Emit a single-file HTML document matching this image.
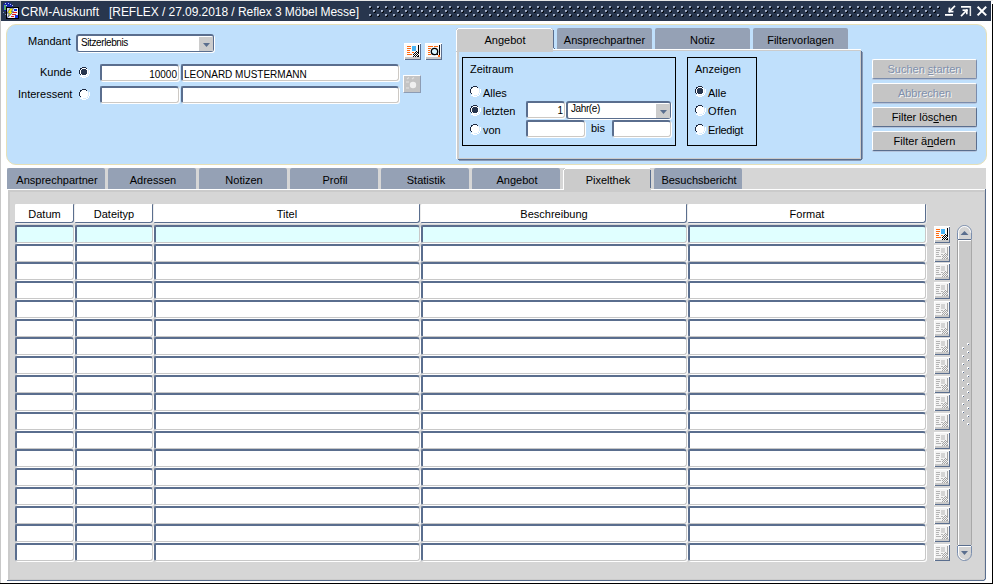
<!DOCTYPE html><html><head><meta charset="utf-8"><style>
*{margin:0;padding:0;box-sizing:border-box}
html,body{width:993px;height:584px;overflow:hidden;background:#fff;font-family:"Liberation Sans",sans-serif;position:relative}
div{position:absolute}
.t{white-space:pre}
u{text-decoration:underline;text-underline-offset:1px}
</style></head><body>
<div style="left:0px;top:0px;width:993px;height:584px;background:#fff;"></div>
<div style="left:0px;top:0px;width:1px;height:584px;background:#c8c8c8;"></div>
<div style="left:0px;top:0px;width:993px;height:1px;background:#e8e8e8;"></div>
<div style="left:992px;top:4px;width:1px;height:580px;background:#000;"></div>
<div style="left:0px;top:583px;width:993px;height:1px;background:#000;"></div>
<div style="left:1px;top:1px;width:990px;height:20px;background:#28364e;"></div>
<div class="t" style="left:21px;top:6.10px;font-size:12px;line-height:12px;color:#fff;">CRM-Auskunft</div>
<div class="t" style="left:109px;top:6.10px;font-size:12px;line-height:12px;color:#fff;letter-spacing:-0.05px">[REFLEX / 27.09.2018 / Reflex 3 Möbel Messe]</div>
<svg style="position:absolute;left:366px;top:4px" width="580" height="14" shape-rendering="crispEdges"><rect x="3" y="2" width="2" height="1" fill="#a8b4cc"/><rect x="3" y="3" width="1" height="1" fill="#a8b4cc"/><rect x="4" y="3" width="1" height="1" fill="#8090a8"/><rect x="5" y="3" width="1" height="1" fill="#000"/><rect x="4" y="4" width="1" height="1" fill="#000"/><rect x="5" y="4" width="1" height="1" fill="#101828"/><rect x="3" y="10" width="2" height="1" fill="#a8b4cc"/><rect x="3" y="11" width="1" height="1" fill="#a8b4cc"/><rect x="4" y="11" width="1" height="1" fill="#8090a8"/><rect x="5" y="11" width="1" height="1" fill="#000"/><rect x="4" y="12" width="1" height="1" fill="#000"/><rect x="5" y="12" width="1" height="1" fill="#101828"/><rect x="7" y="6" width="2" height="1" fill="#a8b4cc"/><rect x="7" y="7" width="1" height="1" fill="#a8b4cc"/><rect x="8" y="7" width="1" height="1" fill="#8090a8"/><rect x="9" y="7" width="1" height="1" fill="#000"/><rect x="8" y="8" width="1" height="1" fill="#000"/><rect x="9" y="8" width="1" height="1" fill="#101828"/><rect x="11" y="2" width="2" height="1" fill="#a8b4cc"/><rect x="11" y="3" width="1" height="1" fill="#a8b4cc"/><rect x="12" y="3" width="1" height="1" fill="#8090a8"/><rect x="13" y="3" width="1" height="1" fill="#000"/><rect x="12" y="4" width="1" height="1" fill="#000"/><rect x="13" y="4" width="1" height="1" fill="#101828"/><rect x="11" y="10" width="2" height="1" fill="#a8b4cc"/><rect x="11" y="11" width="1" height="1" fill="#a8b4cc"/><rect x="12" y="11" width="1" height="1" fill="#8090a8"/><rect x="13" y="11" width="1" height="1" fill="#000"/><rect x="12" y="12" width="1" height="1" fill="#000"/><rect x="13" y="12" width="1" height="1" fill="#101828"/><rect x="15" y="6" width="2" height="1" fill="#a8b4cc"/><rect x="15" y="7" width="1" height="1" fill="#a8b4cc"/><rect x="16" y="7" width="1" height="1" fill="#8090a8"/><rect x="17" y="7" width="1" height="1" fill="#000"/><rect x="16" y="8" width="1" height="1" fill="#000"/><rect x="17" y="8" width="1" height="1" fill="#101828"/><rect x="19" y="2" width="2" height="1" fill="#a8b4cc"/><rect x="19" y="3" width="1" height="1" fill="#a8b4cc"/><rect x="20" y="3" width="1" height="1" fill="#8090a8"/><rect x="21" y="3" width="1" height="1" fill="#000"/><rect x="20" y="4" width="1" height="1" fill="#000"/><rect x="21" y="4" width="1" height="1" fill="#101828"/><rect x="19" y="10" width="2" height="1" fill="#a8b4cc"/><rect x="19" y="11" width="1" height="1" fill="#a8b4cc"/><rect x="20" y="11" width="1" height="1" fill="#8090a8"/><rect x="21" y="11" width="1" height="1" fill="#000"/><rect x="20" y="12" width="1" height="1" fill="#000"/><rect x="21" y="12" width="1" height="1" fill="#101828"/><rect x="23" y="6" width="2" height="1" fill="#a8b4cc"/><rect x="23" y="7" width="1" height="1" fill="#a8b4cc"/><rect x="24" y="7" width="1" height="1" fill="#8090a8"/><rect x="25" y="7" width="1" height="1" fill="#000"/><rect x="24" y="8" width="1" height="1" fill="#000"/><rect x="25" y="8" width="1" height="1" fill="#101828"/><rect x="27" y="2" width="2" height="1" fill="#a8b4cc"/><rect x="27" y="3" width="1" height="1" fill="#a8b4cc"/><rect x="28" y="3" width="1" height="1" fill="#8090a8"/><rect x="29" y="3" width="1" height="1" fill="#000"/><rect x="28" y="4" width="1" height="1" fill="#000"/><rect x="29" y="4" width="1" height="1" fill="#101828"/><rect x="27" y="10" width="2" height="1" fill="#a8b4cc"/><rect x="27" y="11" width="1" height="1" fill="#a8b4cc"/><rect x="28" y="11" width="1" height="1" fill="#8090a8"/><rect x="29" y="11" width="1" height="1" fill="#000"/><rect x="28" y="12" width="1" height="1" fill="#000"/><rect x="29" y="12" width="1" height="1" fill="#101828"/><rect x="31" y="6" width="2" height="1" fill="#a8b4cc"/><rect x="31" y="7" width="1" height="1" fill="#a8b4cc"/><rect x="32" y="7" width="1" height="1" fill="#8090a8"/><rect x="33" y="7" width="1" height="1" fill="#000"/><rect x="32" y="8" width="1" height="1" fill="#000"/><rect x="33" y="8" width="1" height="1" fill="#101828"/><rect x="35" y="2" width="2" height="1" fill="#a8b4cc"/><rect x="35" y="3" width="1" height="1" fill="#a8b4cc"/><rect x="36" y="3" width="1" height="1" fill="#8090a8"/><rect x="37" y="3" width="1" height="1" fill="#000"/><rect x="36" y="4" width="1" height="1" fill="#000"/><rect x="37" y="4" width="1" height="1" fill="#101828"/><rect x="35" y="10" width="2" height="1" fill="#a8b4cc"/><rect x="35" y="11" width="1" height="1" fill="#a8b4cc"/><rect x="36" y="11" width="1" height="1" fill="#8090a8"/><rect x="37" y="11" width="1" height="1" fill="#000"/><rect x="36" y="12" width="1" height="1" fill="#000"/><rect x="37" y="12" width="1" height="1" fill="#101828"/><rect x="39" y="6" width="2" height="1" fill="#a8b4cc"/><rect x="39" y="7" width="1" height="1" fill="#a8b4cc"/><rect x="40" y="7" width="1" height="1" fill="#8090a8"/><rect x="41" y="7" width="1" height="1" fill="#000"/><rect x="40" y="8" width="1" height="1" fill="#000"/><rect x="41" y="8" width="1" height="1" fill="#101828"/><rect x="43" y="2" width="2" height="1" fill="#a8b4cc"/><rect x="43" y="3" width="1" height="1" fill="#a8b4cc"/><rect x="44" y="3" width="1" height="1" fill="#8090a8"/><rect x="45" y="3" width="1" height="1" fill="#000"/><rect x="44" y="4" width="1" height="1" fill="#000"/><rect x="45" y="4" width="1" height="1" fill="#101828"/><rect x="43" y="10" width="2" height="1" fill="#a8b4cc"/><rect x="43" y="11" width="1" height="1" fill="#a8b4cc"/><rect x="44" y="11" width="1" height="1" fill="#8090a8"/><rect x="45" y="11" width="1" height="1" fill="#000"/><rect x="44" y="12" width="1" height="1" fill="#000"/><rect x="45" y="12" width="1" height="1" fill="#101828"/><rect x="47" y="6" width="2" height="1" fill="#a8b4cc"/><rect x="47" y="7" width="1" height="1" fill="#a8b4cc"/><rect x="48" y="7" width="1" height="1" fill="#8090a8"/><rect x="49" y="7" width="1" height="1" fill="#000"/><rect x="48" y="8" width="1" height="1" fill="#000"/><rect x="49" y="8" width="1" height="1" fill="#101828"/><rect x="51" y="2" width="2" height="1" fill="#a8b4cc"/><rect x="51" y="3" width="1" height="1" fill="#a8b4cc"/><rect x="52" y="3" width="1" height="1" fill="#8090a8"/><rect x="53" y="3" width="1" height="1" fill="#000"/><rect x="52" y="4" width="1" height="1" fill="#000"/><rect x="53" y="4" width="1" height="1" fill="#101828"/><rect x="51" y="10" width="2" height="1" fill="#a8b4cc"/><rect x="51" y="11" width="1" height="1" fill="#a8b4cc"/><rect x="52" y="11" width="1" height="1" fill="#8090a8"/><rect x="53" y="11" width="1" height="1" fill="#000"/><rect x="52" y="12" width="1" height="1" fill="#000"/><rect x="53" y="12" width="1" height="1" fill="#101828"/><rect x="55" y="6" width="2" height="1" fill="#a8b4cc"/><rect x="55" y="7" width="1" height="1" fill="#a8b4cc"/><rect x="56" y="7" width="1" height="1" fill="#8090a8"/><rect x="57" y="7" width="1" height="1" fill="#000"/><rect x="56" y="8" width="1" height="1" fill="#000"/><rect x="57" y="8" width="1" height="1" fill="#101828"/><rect x="59" y="2" width="2" height="1" fill="#a8b4cc"/><rect x="59" y="3" width="1" height="1" fill="#a8b4cc"/><rect x="60" y="3" width="1" height="1" fill="#8090a8"/><rect x="61" y="3" width="1" height="1" fill="#000"/><rect x="60" y="4" width="1" height="1" fill="#000"/><rect x="61" y="4" width="1" height="1" fill="#101828"/><rect x="59" y="10" width="2" height="1" fill="#a8b4cc"/><rect x="59" y="11" width="1" height="1" fill="#a8b4cc"/><rect x="60" y="11" width="1" height="1" fill="#8090a8"/><rect x="61" y="11" width="1" height="1" fill="#000"/><rect x="60" y="12" width="1" height="1" fill="#000"/><rect x="61" y="12" width="1" height="1" fill="#101828"/><rect x="63" y="6" width="2" height="1" fill="#a8b4cc"/><rect x="63" y="7" width="1" height="1" fill="#a8b4cc"/><rect x="64" y="7" width="1" height="1" fill="#8090a8"/><rect x="65" y="7" width="1" height="1" fill="#000"/><rect x="64" y="8" width="1" height="1" fill="#000"/><rect x="65" y="8" width="1" height="1" fill="#101828"/><rect x="67" y="2" width="2" height="1" fill="#a8b4cc"/><rect x="67" y="3" width="1" height="1" fill="#a8b4cc"/><rect x="68" y="3" width="1" height="1" fill="#8090a8"/><rect x="69" y="3" width="1" height="1" fill="#000"/><rect x="68" y="4" width="1" height="1" fill="#000"/><rect x="69" y="4" width="1" height="1" fill="#101828"/><rect x="67" y="10" width="2" height="1" fill="#a8b4cc"/><rect x="67" y="11" width="1" height="1" fill="#a8b4cc"/><rect x="68" y="11" width="1" height="1" fill="#8090a8"/><rect x="69" y="11" width="1" height="1" fill="#000"/><rect x="68" y="12" width="1" height="1" fill="#000"/><rect x="69" y="12" width="1" height="1" fill="#101828"/><rect x="71" y="6" width="2" height="1" fill="#a8b4cc"/><rect x="71" y="7" width="1" height="1" fill="#a8b4cc"/><rect x="72" y="7" width="1" height="1" fill="#8090a8"/><rect x="73" y="7" width="1" height="1" fill="#000"/><rect x="72" y="8" width="1" height="1" fill="#000"/><rect x="73" y="8" width="1" height="1" fill="#101828"/><rect x="75" y="2" width="2" height="1" fill="#a8b4cc"/><rect x="75" y="3" width="1" height="1" fill="#a8b4cc"/><rect x="76" y="3" width="1" height="1" fill="#8090a8"/><rect x="77" y="3" width="1" height="1" fill="#000"/><rect x="76" y="4" width="1" height="1" fill="#000"/><rect x="77" y="4" width="1" height="1" fill="#101828"/><rect x="75" y="10" width="2" height="1" fill="#a8b4cc"/><rect x="75" y="11" width="1" height="1" fill="#a8b4cc"/><rect x="76" y="11" width="1" height="1" fill="#8090a8"/><rect x="77" y="11" width="1" height="1" fill="#000"/><rect x="76" y="12" width="1" height="1" fill="#000"/><rect x="77" y="12" width="1" height="1" fill="#101828"/><rect x="79" y="6" width="2" height="1" fill="#a8b4cc"/><rect x="79" y="7" width="1" height="1" fill="#a8b4cc"/><rect x="80" y="7" width="1" height="1" fill="#8090a8"/><rect x="81" y="7" width="1" height="1" fill="#000"/><rect x="80" y="8" width="1" height="1" fill="#000"/><rect x="81" y="8" width="1" height="1" fill="#101828"/><rect x="83" y="2" width="2" height="1" fill="#a8b4cc"/><rect x="83" y="3" width="1" height="1" fill="#a8b4cc"/><rect x="84" y="3" width="1" height="1" fill="#8090a8"/><rect x="85" y="3" width="1" height="1" fill="#000"/><rect x="84" y="4" width="1" height="1" fill="#000"/><rect x="85" y="4" width="1" height="1" fill="#101828"/><rect x="83" y="10" width="2" height="1" fill="#a8b4cc"/><rect x="83" y="11" width="1" height="1" fill="#a8b4cc"/><rect x="84" y="11" width="1" height="1" fill="#8090a8"/><rect x="85" y="11" width="1" height="1" fill="#000"/><rect x="84" y="12" width="1" height="1" fill="#000"/><rect x="85" y="12" width="1" height="1" fill="#101828"/><rect x="87" y="6" width="2" height="1" fill="#a8b4cc"/><rect x="87" y="7" width="1" height="1" fill="#a8b4cc"/><rect x="88" y="7" width="1" height="1" fill="#8090a8"/><rect x="89" y="7" width="1" height="1" fill="#000"/><rect x="88" y="8" width="1" height="1" fill="#000"/><rect x="89" y="8" width="1" height="1" fill="#101828"/><rect x="91" y="2" width="2" height="1" fill="#a8b4cc"/><rect x="91" y="3" width="1" height="1" fill="#a8b4cc"/><rect x="92" y="3" width="1" height="1" fill="#8090a8"/><rect x="93" y="3" width="1" height="1" fill="#000"/><rect x="92" y="4" width="1" height="1" fill="#000"/><rect x="93" y="4" width="1" height="1" fill="#101828"/><rect x="91" y="10" width="2" height="1" fill="#a8b4cc"/><rect x="91" y="11" width="1" height="1" fill="#a8b4cc"/><rect x="92" y="11" width="1" height="1" fill="#8090a8"/><rect x="93" y="11" width="1" height="1" fill="#000"/><rect x="92" y="12" width="1" height="1" fill="#000"/><rect x="93" y="12" width="1" height="1" fill="#101828"/><rect x="95" y="6" width="2" height="1" fill="#a8b4cc"/><rect x="95" y="7" width="1" height="1" fill="#a8b4cc"/><rect x="96" y="7" width="1" height="1" fill="#8090a8"/><rect x="97" y="7" width="1" height="1" fill="#000"/><rect x="96" y="8" width="1" height="1" fill="#000"/><rect x="97" y="8" width="1" height="1" fill="#101828"/><rect x="99" y="2" width="2" height="1" fill="#a8b4cc"/><rect x="99" y="3" width="1" height="1" fill="#a8b4cc"/><rect x="100" y="3" width="1" height="1" fill="#8090a8"/><rect x="101" y="3" width="1" height="1" fill="#000"/><rect x="100" y="4" width="1" height="1" fill="#000"/><rect x="101" y="4" width="1" height="1" fill="#101828"/><rect x="99" y="10" width="2" height="1" fill="#a8b4cc"/><rect x="99" y="11" width="1" height="1" fill="#a8b4cc"/><rect x="100" y="11" width="1" height="1" fill="#8090a8"/><rect x="101" y="11" width="1" height="1" fill="#000"/><rect x="100" y="12" width="1" height="1" fill="#000"/><rect x="101" y="12" width="1" height="1" fill="#101828"/><rect x="103" y="6" width="2" height="1" fill="#a8b4cc"/><rect x="103" y="7" width="1" height="1" fill="#a8b4cc"/><rect x="104" y="7" width="1" height="1" fill="#8090a8"/><rect x="105" y="7" width="1" height="1" fill="#000"/><rect x="104" y="8" width="1" height="1" fill="#000"/><rect x="105" y="8" width="1" height="1" fill="#101828"/><rect x="107" y="2" width="2" height="1" fill="#a8b4cc"/><rect x="107" y="3" width="1" height="1" fill="#a8b4cc"/><rect x="108" y="3" width="1" height="1" fill="#8090a8"/><rect x="109" y="3" width="1" height="1" fill="#000"/><rect x="108" y="4" width="1" height="1" fill="#000"/><rect x="109" y="4" width="1" height="1" fill="#101828"/><rect x="107" y="10" width="2" height="1" fill="#a8b4cc"/><rect x="107" y="11" width="1" height="1" fill="#a8b4cc"/><rect x="108" y="11" width="1" height="1" fill="#8090a8"/><rect x="109" y="11" width="1" height="1" fill="#000"/><rect x="108" y="12" width="1" height="1" fill="#000"/><rect x="109" y="12" width="1" height="1" fill="#101828"/><rect x="111" y="6" width="2" height="1" fill="#a8b4cc"/><rect x="111" y="7" width="1" height="1" fill="#a8b4cc"/><rect x="112" y="7" width="1" height="1" fill="#8090a8"/><rect x="113" y="7" width="1" height="1" fill="#000"/><rect x="112" y="8" width="1" height="1" fill="#000"/><rect x="113" y="8" width="1" height="1" fill="#101828"/><rect x="115" y="2" width="2" height="1" fill="#a8b4cc"/><rect x="115" y="3" width="1" height="1" fill="#a8b4cc"/><rect x="116" y="3" width="1" height="1" fill="#8090a8"/><rect x="117" y="3" width="1" height="1" fill="#000"/><rect x="116" y="4" width="1" height="1" fill="#000"/><rect x="117" y="4" width="1" height="1" fill="#101828"/><rect x="115" y="10" width="2" height="1" fill="#a8b4cc"/><rect x="115" y="11" width="1" height="1" fill="#a8b4cc"/><rect x="116" y="11" width="1" height="1" fill="#8090a8"/><rect x="117" y="11" width="1" height="1" fill="#000"/><rect x="116" y="12" width="1" height="1" fill="#000"/><rect x="117" y="12" width="1" height="1" fill="#101828"/><rect x="119" y="6" width="2" height="1" fill="#a8b4cc"/><rect x="119" y="7" width="1" height="1" fill="#a8b4cc"/><rect x="120" y="7" width="1" height="1" fill="#8090a8"/><rect x="121" y="7" width="1" height="1" fill="#000"/><rect x="120" y="8" width="1" height="1" fill="#000"/><rect x="121" y="8" width="1" height="1" fill="#101828"/><rect x="123" y="2" width="2" height="1" fill="#a8b4cc"/><rect x="123" y="3" width="1" height="1" fill="#a8b4cc"/><rect x="124" y="3" width="1" height="1" fill="#8090a8"/><rect x="125" y="3" width="1" height="1" fill="#000"/><rect x="124" y="4" width="1" height="1" fill="#000"/><rect x="125" y="4" width="1" height="1" fill="#101828"/><rect x="123" y="10" width="2" height="1" fill="#a8b4cc"/><rect x="123" y="11" width="1" height="1" fill="#a8b4cc"/><rect x="124" y="11" width="1" height="1" fill="#8090a8"/><rect x="125" y="11" width="1" height="1" fill="#000"/><rect x="124" y="12" width="1" height="1" fill="#000"/><rect x="125" y="12" width="1" height="1" fill="#101828"/><rect x="127" y="6" width="2" height="1" fill="#a8b4cc"/><rect x="127" y="7" width="1" height="1" fill="#a8b4cc"/><rect x="128" y="7" width="1" height="1" fill="#8090a8"/><rect x="129" y="7" width="1" height="1" fill="#000"/><rect x="128" y="8" width="1" height="1" fill="#000"/><rect x="129" y="8" width="1" height="1" fill="#101828"/><rect x="131" y="2" width="2" height="1" fill="#a8b4cc"/><rect x="131" y="3" width="1" height="1" fill="#a8b4cc"/><rect x="132" y="3" width="1" height="1" fill="#8090a8"/><rect x="133" y="3" width="1" height="1" fill="#000"/><rect x="132" y="4" width="1" height="1" fill="#000"/><rect x="133" y="4" width="1" height="1" fill="#101828"/><rect x="131" y="10" width="2" height="1" fill="#a8b4cc"/><rect x="131" y="11" width="1" height="1" fill="#a8b4cc"/><rect x="132" y="11" width="1" height="1" fill="#8090a8"/><rect x="133" y="11" width="1" height="1" fill="#000"/><rect x="132" y="12" width="1" height="1" fill="#000"/><rect x="133" y="12" width="1" height="1" fill="#101828"/><rect x="135" y="6" width="2" height="1" fill="#a8b4cc"/><rect x="135" y="7" width="1" height="1" fill="#a8b4cc"/><rect x="136" y="7" width="1" height="1" fill="#8090a8"/><rect x="137" y="7" width="1" height="1" fill="#000"/><rect x="136" y="8" width="1" height="1" fill="#000"/><rect x="137" y="8" width="1" height="1" fill="#101828"/><rect x="139" y="2" width="2" height="1" fill="#a8b4cc"/><rect x="139" y="3" width="1" height="1" fill="#a8b4cc"/><rect x="140" y="3" width="1" height="1" fill="#8090a8"/><rect x="141" y="3" width="1" height="1" fill="#000"/><rect x="140" y="4" width="1" height="1" fill="#000"/><rect x="141" y="4" width="1" height="1" fill="#101828"/><rect x="139" y="10" width="2" height="1" fill="#a8b4cc"/><rect x="139" y="11" width="1" height="1" fill="#a8b4cc"/><rect x="140" y="11" width="1" height="1" fill="#8090a8"/><rect x="141" y="11" width="1" height="1" fill="#000"/><rect x="140" y="12" width="1" height="1" fill="#000"/><rect x="141" y="12" width="1" height="1" fill="#101828"/><rect x="143" y="6" width="2" height="1" fill="#a8b4cc"/><rect x="143" y="7" width="1" height="1" fill="#a8b4cc"/><rect x="144" y="7" width="1" height="1" fill="#8090a8"/><rect x="145" y="7" width="1" height="1" fill="#000"/><rect x="144" y="8" width="1" height="1" fill="#000"/><rect x="145" y="8" width="1" height="1" fill="#101828"/><rect x="147" y="2" width="2" height="1" fill="#a8b4cc"/><rect x="147" y="3" width="1" height="1" fill="#a8b4cc"/><rect x="148" y="3" width="1" height="1" fill="#8090a8"/><rect x="149" y="3" width="1" height="1" fill="#000"/><rect x="148" y="4" width="1" height="1" fill="#000"/><rect x="149" y="4" width="1" height="1" fill="#101828"/><rect x="147" y="10" width="2" height="1" fill="#a8b4cc"/><rect x="147" y="11" width="1" height="1" fill="#a8b4cc"/><rect x="148" y="11" width="1" height="1" fill="#8090a8"/><rect x="149" y="11" width="1" height="1" fill="#000"/><rect x="148" y="12" width="1" height="1" fill="#000"/><rect x="149" y="12" width="1" height="1" fill="#101828"/><rect x="151" y="6" width="2" height="1" fill="#a8b4cc"/><rect x="151" y="7" width="1" height="1" fill="#a8b4cc"/><rect x="152" y="7" width="1" height="1" fill="#8090a8"/><rect x="153" y="7" width="1" height="1" fill="#000"/><rect x="152" y="8" width="1" height="1" fill="#000"/><rect x="153" y="8" width="1" height="1" fill="#101828"/><rect x="155" y="2" width="2" height="1" fill="#a8b4cc"/><rect x="155" y="3" width="1" height="1" fill="#a8b4cc"/><rect x="156" y="3" width="1" height="1" fill="#8090a8"/><rect x="157" y="3" width="1" height="1" fill="#000"/><rect x="156" y="4" width="1" height="1" fill="#000"/><rect x="157" y="4" width="1" height="1" fill="#101828"/><rect x="155" y="10" width="2" height="1" fill="#a8b4cc"/><rect x="155" y="11" width="1" height="1" fill="#a8b4cc"/><rect x="156" y="11" width="1" height="1" fill="#8090a8"/><rect x="157" y="11" width="1" height="1" fill="#000"/><rect x="156" y="12" width="1" height="1" fill="#000"/><rect x="157" y="12" width="1" height="1" fill="#101828"/><rect x="159" y="6" width="2" height="1" fill="#a8b4cc"/><rect x="159" y="7" width="1" height="1" fill="#a8b4cc"/><rect x="160" y="7" width="1" height="1" fill="#8090a8"/><rect x="161" y="7" width="1" height="1" fill="#000"/><rect x="160" y="8" width="1" height="1" fill="#000"/><rect x="161" y="8" width="1" height="1" fill="#101828"/><rect x="163" y="2" width="2" height="1" fill="#a8b4cc"/><rect x="163" y="3" width="1" height="1" fill="#a8b4cc"/><rect x="164" y="3" width="1" height="1" fill="#8090a8"/><rect x="165" y="3" width="1" height="1" fill="#000"/><rect x="164" y="4" width="1" height="1" fill="#000"/><rect x="165" y="4" width="1" height="1" fill="#101828"/><rect x="163" y="10" width="2" height="1" fill="#a8b4cc"/><rect x="163" y="11" width="1" height="1" fill="#a8b4cc"/><rect x="164" y="11" width="1" height="1" fill="#8090a8"/><rect x="165" y="11" width="1" height="1" fill="#000"/><rect x="164" y="12" width="1" height="1" fill="#000"/><rect x="165" y="12" width="1" height="1" fill="#101828"/><rect x="167" y="6" width="2" height="1" fill="#a8b4cc"/><rect x="167" y="7" width="1" height="1" fill="#a8b4cc"/><rect x="168" y="7" width="1" height="1" fill="#8090a8"/><rect x="169" y="7" width="1" height="1" fill="#000"/><rect x="168" y="8" width="1" height="1" fill="#000"/><rect x="169" y="8" width="1" height="1" fill="#101828"/><rect x="171" y="2" width="2" height="1" fill="#a8b4cc"/><rect x="171" y="3" width="1" height="1" fill="#a8b4cc"/><rect x="172" y="3" width="1" height="1" fill="#8090a8"/><rect x="173" y="3" width="1" height="1" fill="#000"/><rect x="172" y="4" width="1" height="1" fill="#000"/><rect x="173" y="4" width="1" height="1" fill="#101828"/><rect x="171" y="10" width="2" height="1" fill="#a8b4cc"/><rect x="171" y="11" width="1" height="1" fill="#a8b4cc"/><rect x="172" y="11" width="1" height="1" fill="#8090a8"/><rect x="173" y="11" width="1" height="1" fill="#000"/><rect x="172" y="12" width="1" height="1" fill="#000"/><rect x="173" y="12" width="1" height="1" fill="#101828"/><rect x="175" y="6" width="2" height="1" fill="#a8b4cc"/><rect x="175" y="7" width="1" height="1" fill="#a8b4cc"/><rect x="176" y="7" width="1" height="1" fill="#8090a8"/><rect x="177" y="7" width="1" height="1" fill="#000"/><rect x="176" y="8" width="1" height="1" fill="#000"/><rect x="177" y="8" width="1" height="1" fill="#101828"/><rect x="179" y="2" width="2" height="1" fill="#a8b4cc"/><rect x="179" y="3" width="1" height="1" fill="#a8b4cc"/><rect x="180" y="3" width="1" height="1" fill="#8090a8"/><rect x="181" y="3" width="1" height="1" fill="#000"/><rect x="180" y="4" width="1" height="1" fill="#000"/><rect x="181" y="4" width="1" height="1" fill="#101828"/><rect x="179" y="10" width="2" height="1" fill="#a8b4cc"/><rect x="179" y="11" width="1" height="1" fill="#a8b4cc"/><rect x="180" y="11" width="1" height="1" fill="#8090a8"/><rect x="181" y="11" width="1" height="1" fill="#000"/><rect x="180" y="12" width="1" height="1" fill="#000"/><rect x="181" y="12" width="1" height="1" fill="#101828"/><rect x="183" y="6" width="2" height="1" fill="#a8b4cc"/><rect x="183" y="7" width="1" height="1" fill="#a8b4cc"/><rect x="184" y="7" width="1" height="1" fill="#8090a8"/><rect x="185" y="7" width="1" height="1" fill="#000"/><rect x="184" y="8" width="1" height="1" fill="#000"/><rect x="185" y="8" width="1" height="1" fill="#101828"/><rect x="187" y="2" width="2" height="1" fill="#a8b4cc"/><rect x="187" y="3" width="1" height="1" fill="#a8b4cc"/><rect x="188" y="3" width="1" height="1" fill="#8090a8"/><rect x="189" y="3" width="1" height="1" fill="#000"/><rect x="188" y="4" width="1" height="1" fill="#000"/><rect x="189" y="4" width="1" height="1" fill="#101828"/><rect x="187" y="10" width="2" height="1" fill="#a8b4cc"/><rect x="187" y="11" width="1" height="1" fill="#a8b4cc"/><rect x="188" y="11" width="1" height="1" fill="#8090a8"/><rect x="189" y="11" width="1" height="1" fill="#000"/><rect x="188" y="12" width="1" height="1" fill="#000"/><rect x="189" y="12" width="1" height="1" fill="#101828"/><rect x="191" y="6" width="2" height="1" fill="#a8b4cc"/><rect x="191" y="7" width="1" height="1" fill="#a8b4cc"/><rect x="192" y="7" width="1" height="1" fill="#8090a8"/><rect x="193" y="7" width="1" height="1" fill="#000"/><rect x="192" y="8" width="1" height="1" fill="#000"/><rect x="193" y="8" width="1" height="1" fill="#101828"/><rect x="195" y="2" width="2" height="1" fill="#a8b4cc"/><rect x="195" y="3" width="1" height="1" fill="#a8b4cc"/><rect x="196" y="3" width="1" height="1" fill="#8090a8"/><rect x="197" y="3" width="1" height="1" fill="#000"/><rect x="196" y="4" width="1" height="1" fill="#000"/><rect x="197" y="4" width="1" height="1" fill="#101828"/><rect x="195" y="10" width="2" height="1" fill="#a8b4cc"/><rect x="195" y="11" width="1" height="1" fill="#a8b4cc"/><rect x="196" y="11" width="1" height="1" fill="#8090a8"/><rect x="197" y="11" width="1" height="1" fill="#000"/><rect x="196" y="12" width="1" height="1" fill="#000"/><rect x="197" y="12" width="1" height="1" fill="#101828"/><rect x="199" y="6" width="2" height="1" fill="#a8b4cc"/><rect x="199" y="7" width="1" height="1" fill="#a8b4cc"/><rect x="200" y="7" width="1" height="1" fill="#8090a8"/><rect x="201" y="7" width="1" height="1" fill="#000"/><rect x="200" y="8" width="1" height="1" fill="#000"/><rect x="201" y="8" width="1" height="1" fill="#101828"/><rect x="203" y="2" width="2" height="1" fill="#a8b4cc"/><rect x="203" y="3" width="1" height="1" fill="#a8b4cc"/><rect x="204" y="3" width="1" height="1" fill="#8090a8"/><rect x="205" y="3" width="1" height="1" fill="#000"/><rect x="204" y="4" width="1" height="1" fill="#000"/><rect x="205" y="4" width="1" height="1" fill="#101828"/><rect x="203" y="10" width="2" height="1" fill="#a8b4cc"/><rect x="203" y="11" width="1" height="1" fill="#a8b4cc"/><rect x="204" y="11" width="1" height="1" fill="#8090a8"/><rect x="205" y="11" width="1" height="1" fill="#000"/><rect x="204" y="12" width="1" height="1" fill="#000"/><rect x="205" y="12" width="1" height="1" fill="#101828"/><rect x="207" y="6" width="2" height="1" fill="#a8b4cc"/><rect x="207" y="7" width="1" height="1" fill="#a8b4cc"/><rect x="208" y="7" width="1" height="1" fill="#8090a8"/><rect x="209" y="7" width="1" height="1" fill="#000"/><rect x="208" y="8" width="1" height="1" fill="#000"/><rect x="209" y="8" width="1" height="1" fill="#101828"/><rect x="211" y="2" width="2" height="1" fill="#a8b4cc"/><rect x="211" y="3" width="1" height="1" fill="#a8b4cc"/><rect x="212" y="3" width="1" height="1" fill="#8090a8"/><rect x="213" y="3" width="1" height="1" fill="#000"/><rect x="212" y="4" width="1" height="1" fill="#000"/><rect x="213" y="4" width="1" height="1" fill="#101828"/><rect x="211" y="10" width="2" height="1" fill="#a8b4cc"/><rect x="211" y="11" width="1" height="1" fill="#a8b4cc"/><rect x="212" y="11" width="1" height="1" fill="#8090a8"/><rect x="213" y="11" width="1" height="1" fill="#000"/><rect x="212" y="12" width="1" height="1" fill="#000"/><rect x="213" y="12" width="1" height="1" fill="#101828"/><rect x="215" y="6" width="2" height="1" fill="#a8b4cc"/><rect x="215" y="7" width="1" height="1" fill="#a8b4cc"/><rect x="216" y="7" width="1" height="1" fill="#8090a8"/><rect x="217" y="7" width="1" height="1" fill="#000"/><rect x="216" y="8" width="1" height="1" fill="#000"/><rect x="217" y="8" width="1" height="1" fill="#101828"/><rect x="219" y="2" width="2" height="1" fill="#a8b4cc"/><rect x="219" y="3" width="1" height="1" fill="#a8b4cc"/><rect x="220" y="3" width="1" height="1" fill="#8090a8"/><rect x="221" y="3" width="1" height="1" fill="#000"/><rect x="220" y="4" width="1" height="1" fill="#000"/><rect x="221" y="4" width="1" height="1" fill="#101828"/><rect x="219" y="10" width="2" height="1" fill="#a8b4cc"/><rect x="219" y="11" width="1" height="1" fill="#a8b4cc"/><rect x="220" y="11" width="1" height="1" fill="#8090a8"/><rect x="221" y="11" width="1" height="1" fill="#000"/><rect x="220" y="12" width="1" height="1" fill="#000"/><rect x="221" y="12" width="1" height="1" fill="#101828"/><rect x="223" y="6" width="2" height="1" fill="#a8b4cc"/><rect x="223" y="7" width="1" height="1" fill="#a8b4cc"/><rect x="224" y="7" width="1" height="1" fill="#8090a8"/><rect x="225" y="7" width="1" height="1" fill="#000"/><rect x="224" y="8" width="1" height="1" fill="#000"/><rect x="225" y="8" width="1" height="1" fill="#101828"/><rect x="227" y="2" width="2" height="1" fill="#a8b4cc"/><rect x="227" y="3" width="1" height="1" fill="#a8b4cc"/><rect x="228" y="3" width="1" height="1" fill="#8090a8"/><rect x="229" y="3" width="1" height="1" fill="#000"/><rect x="228" y="4" width="1" height="1" fill="#000"/><rect x="229" y="4" width="1" height="1" fill="#101828"/><rect x="227" y="10" width="2" height="1" fill="#a8b4cc"/><rect x="227" y="11" width="1" height="1" fill="#a8b4cc"/><rect x="228" y="11" width="1" height="1" fill="#8090a8"/><rect x="229" y="11" width="1" height="1" fill="#000"/><rect x="228" y="12" width="1" height="1" fill="#000"/><rect x="229" y="12" width="1" height="1" fill="#101828"/><rect x="231" y="6" width="2" height="1" fill="#a8b4cc"/><rect x="231" y="7" width="1" height="1" fill="#a8b4cc"/><rect x="232" y="7" width="1" height="1" fill="#8090a8"/><rect x="233" y="7" width="1" height="1" fill="#000"/><rect x="232" y="8" width="1" height="1" fill="#000"/><rect x="233" y="8" width="1" height="1" fill="#101828"/><rect x="235" y="2" width="2" height="1" fill="#a8b4cc"/><rect x="235" y="3" width="1" height="1" fill="#a8b4cc"/><rect x="236" y="3" width="1" height="1" fill="#8090a8"/><rect x="237" y="3" width="1" height="1" fill="#000"/><rect x="236" y="4" width="1" height="1" fill="#000"/><rect x="237" y="4" width="1" height="1" fill="#101828"/><rect x="235" y="10" width="2" height="1" fill="#a8b4cc"/><rect x="235" y="11" width="1" height="1" fill="#a8b4cc"/><rect x="236" y="11" width="1" height="1" fill="#8090a8"/><rect x="237" y="11" width="1" height="1" fill="#000"/><rect x="236" y="12" width="1" height="1" fill="#000"/><rect x="237" y="12" width="1" height="1" fill="#101828"/><rect x="239" y="6" width="2" height="1" fill="#a8b4cc"/><rect x="239" y="7" width="1" height="1" fill="#a8b4cc"/><rect x="240" y="7" width="1" height="1" fill="#8090a8"/><rect x="241" y="7" width="1" height="1" fill="#000"/><rect x="240" y="8" width="1" height="1" fill="#000"/><rect x="241" y="8" width="1" height="1" fill="#101828"/><rect x="243" y="2" width="2" height="1" fill="#a8b4cc"/><rect x="243" y="3" width="1" height="1" fill="#a8b4cc"/><rect x="244" y="3" width="1" height="1" fill="#8090a8"/><rect x="245" y="3" width="1" height="1" fill="#000"/><rect x="244" y="4" width="1" height="1" fill="#000"/><rect x="245" y="4" width="1" height="1" fill="#101828"/><rect x="243" y="10" width="2" height="1" fill="#a8b4cc"/><rect x="243" y="11" width="1" height="1" fill="#a8b4cc"/><rect x="244" y="11" width="1" height="1" fill="#8090a8"/><rect x="245" y="11" width="1" height="1" fill="#000"/><rect x="244" y="12" width="1" height="1" fill="#000"/><rect x="245" y="12" width="1" height="1" fill="#101828"/><rect x="247" y="6" width="2" height="1" fill="#a8b4cc"/><rect x="247" y="7" width="1" height="1" fill="#a8b4cc"/><rect x="248" y="7" width="1" height="1" fill="#8090a8"/><rect x="249" y="7" width="1" height="1" fill="#000"/><rect x="248" y="8" width="1" height="1" fill="#000"/><rect x="249" y="8" width="1" height="1" fill="#101828"/><rect x="251" y="2" width="2" height="1" fill="#a8b4cc"/><rect x="251" y="3" width="1" height="1" fill="#a8b4cc"/><rect x="252" y="3" width="1" height="1" fill="#8090a8"/><rect x="253" y="3" width="1" height="1" fill="#000"/><rect x="252" y="4" width="1" height="1" fill="#000"/><rect x="253" y="4" width="1" height="1" fill="#101828"/><rect x="251" y="10" width="2" height="1" fill="#a8b4cc"/><rect x="251" y="11" width="1" height="1" fill="#a8b4cc"/><rect x="252" y="11" width="1" height="1" fill="#8090a8"/><rect x="253" y="11" width="1" height="1" fill="#000"/><rect x="252" y="12" width="1" height="1" fill="#000"/><rect x="253" y="12" width="1" height="1" fill="#101828"/><rect x="255" y="6" width="2" height="1" fill="#a8b4cc"/><rect x="255" y="7" width="1" height="1" fill="#a8b4cc"/><rect x="256" y="7" width="1" height="1" fill="#8090a8"/><rect x="257" y="7" width="1" height="1" fill="#000"/><rect x="256" y="8" width="1" height="1" fill="#000"/><rect x="257" y="8" width="1" height="1" fill="#101828"/><rect x="259" y="2" width="2" height="1" fill="#a8b4cc"/><rect x="259" y="3" width="1" height="1" fill="#a8b4cc"/><rect x="260" y="3" width="1" height="1" fill="#8090a8"/><rect x="261" y="3" width="1" height="1" fill="#000"/><rect x="260" y="4" width="1" height="1" fill="#000"/><rect x="261" y="4" width="1" height="1" fill="#101828"/><rect x="259" y="10" width="2" height="1" fill="#a8b4cc"/><rect x="259" y="11" width="1" height="1" fill="#a8b4cc"/><rect x="260" y="11" width="1" height="1" fill="#8090a8"/><rect x="261" y="11" width="1" height="1" fill="#000"/><rect x="260" y="12" width="1" height="1" fill="#000"/><rect x="261" y="12" width="1" height="1" fill="#101828"/><rect x="263" y="6" width="2" height="1" fill="#a8b4cc"/><rect x="263" y="7" width="1" height="1" fill="#a8b4cc"/><rect x="264" y="7" width="1" height="1" fill="#8090a8"/><rect x="265" y="7" width="1" height="1" fill="#000"/><rect x="264" y="8" width="1" height="1" fill="#000"/><rect x="265" y="8" width="1" height="1" fill="#101828"/><rect x="267" y="2" width="2" height="1" fill="#a8b4cc"/><rect x="267" y="3" width="1" height="1" fill="#a8b4cc"/><rect x="268" y="3" width="1" height="1" fill="#8090a8"/><rect x="269" y="3" width="1" height="1" fill="#000"/><rect x="268" y="4" width="1" height="1" fill="#000"/><rect x="269" y="4" width="1" height="1" fill="#101828"/><rect x="267" y="10" width="2" height="1" fill="#a8b4cc"/><rect x="267" y="11" width="1" height="1" fill="#a8b4cc"/><rect x="268" y="11" width="1" height="1" fill="#8090a8"/><rect x="269" y="11" width="1" height="1" fill="#000"/><rect x="268" y="12" width="1" height="1" fill="#000"/><rect x="269" y="12" width="1" height="1" fill="#101828"/><rect x="271" y="6" width="2" height="1" fill="#a8b4cc"/><rect x="271" y="7" width="1" height="1" fill="#a8b4cc"/><rect x="272" y="7" width="1" height="1" fill="#8090a8"/><rect x="273" y="7" width="1" height="1" fill="#000"/><rect x="272" y="8" width="1" height="1" fill="#000"/><rect x="273" y="8" width="1" height="1" fill="#101828"/><rect x="275" y="2" width="2" height="1" fill="#a8b4cc"/><rect x="275" y="3" width="1" height="1" fill="#a8b4cc"/><rect x="276" y="3" width="1" height="1" fill="#8090a8"/><rect x="277" y="3" width="1" height="1" fill="#000"/><rect x="276" y="4" width="1" height="1" fill="#000"/><rect x="277" y="4" width="1" height="1" fill="#101828"/><rect x="275" y="10" width="2" height="1" fill="#a8b4cc"/><rect x="275" y="11" width="1" height="1" fill="#a8b4cc"/><rect x="276" y="11" width="1" height="1" fill="#8090a8"/><rect x="277" y="11" width="1" height="1" fill="#000"/><rect x="276" y="12" width="1" height="1" fill="#000"/><rect x="277" y="12" width="1" height="1" fill="#101828"/><rect x="279" y="6" width="2" height="1" fill="#a8b4cc"/><rect x="279" y="7" width="1" height="1" fill="#a8b4cc"/><rect x="280" y="7" width="1" height="1" fill="#8090a8"/><rect x="281" y="7" width="1" height="1" fill="#000"/><rect x="280" y="8" width="1" height="1" fill="#000"/><rect x="281" y="8" width="1" height="1" fill="#101828"/><rect x="283" y="2" width="2" height="1" fill="#a8b4cc"/><rect x="283" y="3" width="1" height="1" fill="#a8b4cc"/><rect x="284" y="3" width="1" height="1" fill="#8090a8"/><rect x="285" y="3" width="1" height="1" fill="#000"/><rect x="284" y="4" width="1" height="1" fill="#000"/><rect x="285" y="4" width="1" height="1" fill="#101828"/><rect x="283" y="10" width="2" height="1" fill="#a8b4cc"/><rect x="283" y="11" width="1" height="1" fill="#a8b4cc"/><rect x="284" y="11" width="1" height="1" fill="#8090a8"/><rect x="285" y="11" width="1" height="1" fill="#000"/><rect x="284" y="12" width="1" height="1" fill="#000"/><rect x="285" y="12" width="1" height="1" fill="#101828"/><rect x="287" y="6" width="2" height="1" fill="#a8b4cc"/><rect x="287" y="7" width="1" height="1" fill="#a8b4cc"/><rect x="288" y="7" width="1" height="1" fill="#8090a8"/><rect x="289" y="7" width="1" height="1" fill="#000"/><rect x="288" y="8" width="1" height="1" fill="#000"/><rect x="289" y="8" width="1" height="1" fill="#101828"/><rect x="291" y="2" width="2" height="1" fill="#a8b4cc"/><rect x="291" y="3" width="1" height="1" fill="#a8b4cc"/><rect x="292" y="3" width="1" height="1" fill="#8090a8"/><rect x="293" y="3" width="1" height="1" fill="#000"/><rect x="292" y="4" width="1" height="1" fill="#000"/><rect x="293" y="4" width="1" height="1" fill="#101828"/><rect x="291" y="10" width="2" height="1" fill="#a8b4cc"/><rect x="291" y="11" width="1" height="1" fill="#a8b4cc"/><rect x="292" y="11" width="1" height="1" fill="#8090a8"/><rect x="293" y="11" width="1" height="1" fill="#000"/><rect x="292" y="12" width="1" height="1" fill="#000"/><rect x="293" y="12" width="1" height="1" fill="#101828"/><rect x="295" y="6" width="2" height="1" fill="#a8b4cc"/><rect x="295" y="7" width="1" height="1" fill="#a8b4cc"/><rect x="296" y="7" width="1" height="1" fill="#8090a8"/><rect x="297" y="7" width="1" height="1" fill="#000"/><rect x="296" y="8" width="1" height="1" fill="#000"/><rect x="297" y="8" width="1" height="1" fill="#101828"/><rect x="299" y="2" width="2" height="1" fill="#a8b4cc"/><rect x="299" y="3" width="1" height="1" fill="#a8b4cc"/><rect x="300" y="3" width="1" height="1" fill="#8090a8"/><rect x="301" y="3" width="1" height="1" fill="#000"/><rect x="300" y="4" width="1" height="1" fill="#000"/><rect x="301" y="4" width="1" height="1" fill="#101828"/><rect x="299" y="10" width="2" height="1" fill="#a8b4cc"/><rect x="299" y="11" width="1" height="1" fill="#a8b4cc"/><rect x="300" y="11" width="1" height="1" fill="#8090a8"/><rect x="301" y="11" width="1" height="1" fill="#000"/><rect x="300" y="12" width="1" height="1" fill="#000"/><rect x="301" y="12" width="1" height="1" fill="#101828"/><rect x="303" y="6" width="2" height="1" fill="#a8b4cc"/><rect x="303" y="7" width="1" height="1" fill="#a8b4cc"/><rect x="304" y="7" width="1" height="1" fill="#8090a8"/><rect x="305" y="7" width="1" height="1" fill="#000"/><rect x="304" y="8" width="1" height="1" fill="#000"/><rect x="305" y="8" width="1" height="1" fill="#101828"/><rect x="307" y="2" width="2" height="1" fill="#a8b4cc"/><rect x="307" y="3" width="1" height="1" fill="#a8b4cc"/><rect x="308" y="3" width="1" height="1" fill="#8090a8"/><rect x="309" y="3" width="1" height="1" fill="#000"/><rect x="308" y="4" width="1" height="1" fill="#000"/><rect x="309" y="4" width="1" height="1" fill="#101828"/><rect x="307" y="10" width="2" height="1" fill="#a8b4cc"/><rect x="307" y="11" width="1" height="1" fill="#a8b4cc"/><rect x="308" y="11" width="1" height="1" fill="#8090a8"/><rect x="309" y="11" width="1" height="1" fill="#000"/><rect x="308" y="12" width="1" height="1" fill="#000"/><rect x="309" y="12" width="1" height="1" fill="#101828"/><rect x="311" y="6" width="2" height="1" fill="#a8b4cc"/><rect x="311" y="7" width="1" height="1" fill="#a8b4cc"/><rect x="312" y="7" width="1" height="1" fill="#8090a8"/><rect x="313" y="7" width="1" height="1" fill="#000"/><rect x="312" y="8" width="1" height="1" fill="#000"/><rect x="313" y="8" width="1" height="1" fill="#101828"/><rect x="315" y="2" width="2" height="1" fill="#a8b4cc"/><rect x="315" y="3" width="1" height="1" fill="#a8b4cc"/><rect x="316" y="3" width="1" height="1" fill="#8090a8"/><rect x="317" y="3" width="1" height="1" fill="#000"/><rect x="316" y="4" width="1" height="1" fill="#000"/><rect x="317" y="4" width="1" height="1" fill="#101828"/><rect x="315" y="10" width="2" height="1" fill="#a8b4cc"/><rect x="315" y="11" width="1" height="1" fill="#a8b4cc"/><rect x="316" y="11" width="1" height="1" fill="#8090a8"/><rect x="317" y="11" width="1" height="1" fill="#000"/><rect x="316" y="12" width="1" height="1" fill="#000"/><rect x="317" y="12" width="1" height="1" fill="#101828"/><rect x="319" y="6" width="2" height="1" fill="#a8b4cc"/><rect x="319" y="7" width="1" height="1" fill="#a8b4cc"/><rect x="320" y="7" width="1" height="1" fill="#8090a8"/><rect x="321" y="7" width="1" height="1" fill="#000"/><rect x="320" y="8" width="1" height="1" fill="#000"/><rect x="321" y="8" width="1" height="1" fill="#101828"/><rect x="323" y="2" width="2" height="1" fill="#a8b4cc"/><rect x="323" y="3" width="1" height="1" fill="#a8b4cc"/><rect x="324" y="3" width="1" height="1" fill="#8090a8"/><rect x="325" y="3" width="1" height="1" fill="#000"/><rect x="324" y="4" width="1" height="1" fill="#000"/><rect x="325" y="4" width="1" height="1" fill="#101828"/><rect x="323" y="10" width="2" height="1" fill="#a8b4cc"/><rect x="323" y="11" width="1" height="1" fill="#a8b4cc"/><rect x="324" y="11" width="1" height="1" fill="#8090a8"/><rect x="325" y="11" width="1" height="1" fill="#000"/><rect x="324" y="12" width="1" height="1" fill="#000"/><rect x="325" y="12" width="1" height="1" fill="#101828"/><rect x="327" y="6" width="2" height="1" fill="#a8b4cc"/><rect x="327" y="7" width="1" height="1" fill="#a8b4cc"/><rect x="328" y="7" width="1" height="1" fill="#8090a8"/><rect x="329" y="7" width="1" height="1" fill="#000"/><rect x="328" y="8" width="1" height="1" fill="#000"/><rect x="329" y="8" width="1" height="1" fill="#101828"/><rect x="331" y="2" width="2" height="1" fill="#a8b4cc"/><rect x="331" y="3" width="1" height="1" fill="#a8b4cc"/><rect x="332" y="3" width="1" height="1" fill="#8090a8"/><rect x="333" y="3" width="1" height="1" fill="#000"/><rect x="332" y="4" width="1" height="1" fill="#000"/><rect x="333" y="4" width="1" height="1" fill="#101828"/><rect x="331" y="10" width="2" height="1" fill="#a8b4cc"/><rect x="331" y="11" width="1" height="1" fill="#a8b4cc"/><rect x="332" y="11" width="1" height="1" fill="#8090a8"/><rect x="333" y="11" width="1" height="1" fill="#000"/><rect x="332" y="12" width="1" height="1" fill="#000"/><rect x="333" y="12" width="1" height="1" fill="#101828"/><rect x="335" y="6" width="2" height="1" fill="#a8b4cc"/><rect x="335" y="7" width="1" height="1" fill="#a8b4cc"/><rect x="336" y="7" width="1" height="1" fill="#8090a8"/><rect x="337" y="7" width="1" height="1" fill="#000"/><rect x="336" y="8" width="1" height="1" fill="#000"/><rect x="337" y="8" width="1" height="1" fill="#101828"/><rect x="339" y="2" width="2" height="1" fill="#a8b4cc"/><rect x="339" y="3" width="1" height="1" fill="#a8b4cc"/><rect x="340" y="3" width="1" height="1" fill="#8090a8"/><rect x="341" y="3" width="1" height="1" fill="#000"/><rect x="340" y="4" width="1" height="1" fill="#000"/><rect x="341" y="4" width="1" height="1" fill="#101828"/><rect x="339" y="10" width="2" height="1" fill="#a8b4cc"/><rect x="339" y="11" width="1" height="1" fill="#a8b4cc"/><rect x="340" y="11" width="1" height="1" fill="#8090a8"/><rect x="341" y="11" width="1" height="1" fill="#000"/><rect x="340" y="12" width="1" height="1" fill="#000"/><rect x="341" y="12" width="1" height="1" fill="#101828"/><rect x="343" y="6" width="2" height="1" fill="#a8b4cc"/><rect x="343" y="7" width="1" height="1" fill="#a8b4cc"/><rect x="344" y="7" width="1" height="1" fill="#8090a8"/><rect x="345" y="7" width="1" height="1" fill="#000"/><rect x="344" y="8" width="1" height="1" fill="#000"/><rect x="345" y="8" width="1" height="1" fill="#101828"/><rect x="347" y="2" width="2" height="1" fill="#a8b4cc"/><rect x="347" y="3" width="1" height="1" fill="#a8b4cc"/><rect x="348" y="3" width="1" height="1" fill="#8090a8"/><rect x="349" y="3" width="1" height="1" fill="#000"/><rect x="348" y="4" width="1" height="1" fill="#000"/><rect x="349" y="4" width="1" height="1" fill="#101828"/><rect x="347" y="10" width="2" height="1" fill="#a8b4cc"/><rect x="347" y="11" width="1" height="1" fill="#a8b4cc"/><rect x="348" y="11" width="1" height="1" fill="#8090a8"/><rect x="349" y="11" width="1" height="1" fill="#000"/><rect x="348" y="12" width="1" height="1" fill="#000"/><rect x="349" y="12" width="1" height="1" fill="#101828"/><rect x="351" y="6" width="2" height="1" fill="#a8b4cc"/><rect x="351" y="7" width="1" height="1" fill="#a8b4cc"/><rect x="352" y="7" width="1" height="1" fill="#8090a8"/><rect x="353" y="7" width="1" height="1" fill="#000"/><rect x="352" y="8" width="1" height="1" fill="#000"/><rect x="353" y="8" width="1" height="1" fill="#101828"/><rect x="355" y="2" width="2" height="1" fill="#a8b4cc"/><rect x="355" y="3" width="1" height="1" fill="#a8b4cc"/><rect x="356" y="3" width="1" height="1" fill="#8090a8"/><rect x="357" y="3" width="1" height="1" fill="#000"/><rect x="356" y="4" width="1" height="1" fill="#000"/><rect x="357" y="4" width="1" height="1" fill="#101828"/><rect x="355" y="10" width="2" height="1" fill="#a8b4cc"/><rect x="355" y="11" width="1" height="1" fill="#a8b4cc"/><rect x="356" y="11" width="1" height="1" fill="#8090a8"/><rect x="357" y="11" width="1" height="1" fill="#000"/><rect x="356" y="12" width="1" height="1" fill="#000"/><rect x="357" y="12" width="1" height="1" fill="#101828"/><rect x="359" y="6" width="2" height="1" fill="#a8b4cc"/><rect x="359" y="7" width="1" height="1" fill="#a8b4cc"/><rect x="360" y="7" width="1" height="1" fill="#8090a8"/><rect x="361" y="7" width="1" height="1" fill="#000"/><rect x="360" y="8" width="1" height="1" fill="#000"/><rect x="361" y="8" width="1" height="1" fill="#101828"/><rect x="363" y="2" width="2" height="1" fill="#a8b4cc"/><rect x="363" y="3" width="1" height="1" fill="#a8b4cc"/><rect x="364" y="3" width="1" height="1" fill="#8090a8"/><rect x="365" y="3" width="1" height="1" fill="#000"/><rect x="364" y="4" width="1" height="1" fill="#000"/><rect x="365" y="4" width="1" height="1" fill="#101828"/><rect x="363" y="10" width="2" height="1" fill="#a8b4cc"/><rect x="363" y="11" width="1" height="1" fill="#a8b4cc"/><rect x="364" y="11" width="1" height="1" fill="#8090a8"/><rect x="365" y="11" width="1" height="1" fill="#000"/><rect x="364" y="12" width="1" height="1" fill="#000"/><rect x="365" y="12" width="1" height="1" fill="#101828"/><rect x="367" y="6" width="2" height="1" fill="#a8b4cc"/><rect x="367" y="7" width="1" height="1" fill="#a8b4cc"/><rect x="368" y="7" width="1" height="1" fill="#8090a8"/><rect x="369" y="7" width="1" height="1" fill="#000"/><rect x="368" y="8" width="1" height="1" fill="#000"/><rect x="369" y="8" width="1" height="1" fill="#101828"/><rect x="371" y="2" width="2" height="1" fill="#a8b4cc"/><rect x="371" y="3" width="1" height="1" fill="#a8b4cc"/><rect x="372" y="3" width="1" height="1" fill="#8090a8"/><rect x="373" y="3" width="1" height="1" fill="#000"/><rect x="372" y="4" width="1" height="1" fill="#000"/><rect x="373" y="4" width="1" height="1" fill="#101828"/><rect x="371" y="10" width="2" height="1" fill="#a8b4cc"/><rect x="371" y="11" width="1" height="1" fill="#a8b4cc"/><rect x="372" y="11" width="1" height="1" fill="#8090a8"/><rect x="373" y="11" width="1" height="1" fill="#000"/><rect x="372" y="12" width="1" height="1" fill="#000"/><rect x="373" y="12" width="1" height="1" fill="#101828"/><rect x="375" y="6" width="2" height="1" fill="#a8b4cc"/><rect x="375" y="7" width="1" height="1" fill="#a8b4cc"/><rect x="376" y="7" width="1" height="1" fill="#8090a8"/><rect x="377" y="7" width="1" height="1" fill="#000"/><rect x="376" y="8" width="1" height="1" fill="#000"/><rect x="377" y="8" width="1" height="1" fill="#101828"/><rect x="379" y="2" width="2" height="1" fill="#a8b4cc"/><rect x="379" y="3" width="1" height="1" fill="#a8b4cc"/><rect x="380" y="3" width="1" height="1" fill="#8090a8"/><rect x="381" y="3" width="1" height="1" fill="#000"/><rect x="380" y="4" width="1" height="1" fill="#000"/><rect x="381" y="4" width="1" height="1" fill="#101828"/><rect x="379" y="10" width="2" height="1" fill="#a8b4cc"/><rect x="379" y="11" width="1" height="1" fill="#a8b4cc"/><rect x="380" y="11" width="1" height="1" fill="#8090a8"/><rect x="381" y="11" width="1" height="1" fill="#000"/><rect x="380" y="12" width="1" height="1" fill="#000"/><rect x="381" y="12" width="1" height="1" fill="#101828"/><rect x="383" y="6" width="2" height="1" fill="#a8b4cc"/><rect x="383" y="7" width="1" height="1" fill="#a8b4cc"/><rect x="384" y="7" width="1" height="1" fill="#8090a8"/><rect x="385" y="7" width="1" height="1" fill="#000"/><rect x="384" y="8" width="1" height="1" fill="#000"/><rect x="385" y="8" width="1" height="1" fill="#101828"/><rect x="387" y="2" width="2" height="1" fill="#a8b4cc"/><rect x="387" y="3" width="1" height="1" fill="#a8b4cc"/><rect x="388" y="3" width="1" height="1" fill="#8090a8"/><rect x="389" y="3" width="1" height="1" fill="#000"/><rect x="388" y="4" width="1" height="1" fill="#000"/><rect x="389" y="4" width="1" height="1" fill="#101828"/><rect x="387" y="10" width="2" height="1" fill="#a8b4cc"/><rect x="387" y="11" width="1" height="1" fill="#a8b4cc"/><rect x="388" y="11" width="1" height="1" fill="#8090a8"/><rect x="389" y="11" width="1" height="1" fill="#000"/><rect x="388" y="12" width="1" height="1" fill="#000"/><rect x="389" y="12" width="1" height="1" fill="#101828"/><rect x="391" y="6" width="2" height="1" fill="#a8b4cc"/><rect x="391" y="7" width="1" height="1" fill="#a8b4cc"/><rect x="392" y="7" width="1" height="1" fill="#8090a8"/><rect x="393" y="7" width="1" height="1" fill="#000"/><rect x="392" y="8" width="1" height="1" fill="#000"/><rect x="393" y="8" width="1" height="1" fill="#101828"/><rect x="395" y="2" width="2" height="1" fill="#a8b4cc"/><rect x="395" y="3" width="1" height="1" fill="#a8b4cc"/><rect x="396" y="3" width="1" height="1" fill="#8090a8"/><rect x="397" y="3" width="1" height="1" fill="#000"/><rect x="396" y="4" width="1" height="1" fill="#000"/><rect x="397" y="4" width="1" height="1" fill="#101828"/><rect x="395" y="10" width="2" height="1" fill="#a8b4cc"/><rect x="395" y="11" width="1" height="1" fill="#a8b4cc"/><rect x="396" y="11" width="1" height="1" fill="#8090a8"/><rect x="397" y="11" width="1" height="1" fill="#000"/><rect x="396" y="12" width="1" height="1" fill="#000"/><rect x="397" y="12" width="1" height="1" fill="#101828"/><rect x="399" y="6" width="2" height="1" fill="#a8b4cc"/><rect x="399" y="7" width="1" height="1" fill="#a8b4cc"/><rect x="400" y="7" width="1" height="1" fill="#8090a8"/><rect x="401" y="7" width="1" height="1" fill="#000"/><rect x="400" y="8" width="1" height="1" fill="#000"/><rect x="401" y="8" width="1" height="1" fill="#101828"/><rect x="403" y="2" width="2" height="1" fill="#a8b4cc"/><rect x="403" y="3" width="1" height="1" fill="#a8b4cc"/><rect x="404" y="3" width="1" height="1" fill="#8090a8"/><rect x="405" y="3" width="1" height="1" fill="#000"/><rect x="404" y="4" width="1" height="1" fill="#000"/><rect x="405" y="4" width="1" height="1" fill="#101828"/><rect x="403" y="10" width="2" height="1" fill="#a8b4cc"/><rect x="403" y="11" width="1" height="1" fill="#a8b4cc"/><rect x="404" y="11" width="1" height="1" fill="#8090a8"/><rect x="405" y="11" width="1" height="1" fill="#000"/><rect x="404" y="12" width="1" height="1" fill="#000"/><rect x="405" y="12" width="1" height="1" fill="#101828"/><rect x="407" y="6" width="2" height="1" fill="#a8b4cc"/><rect x="407" y="7" width="1" height="1" fill="#a8b4cc"/><rect x="408" y="7" width="1" height="1" fill="#8090a8"/><rect x="409" y="7" width="1" height="1" fill="#000"/><rect x="408" y="8" width="1" height="1" fill="#000"/><rect x="409" y="8" width="1" height="1" fill="#101828"/><rect x="411" y="2" width="2" height="1" fill="#a8b4cc"/><rect x="411" y="3" width="1" height="1" fill="#a8b4cc"/><rect x="412" y="3" width="1" height="1" fill="#8090a8"/><rect x="413" y="3" width="1" height="1" fill="#000"/><rect x="412" y="4" width="1" height="1" fill="#000"/><rect x="413" y="4" width="1" height="1" fill="#101828"/><rect x="411" y="10" width="2" height="1" fill="#a8b4cc"/><rect x="411" y="11" width="1" height="1" fill="#a8b4cc"/><rect x="412" y="11" width="1" height="1" fill="#8090a8"/><rect x="413" y="11" width="1" height="1" fill="#000"/><rect x="412" y="12" width="1" height="1" fill="#000"/><rect x="413" y="12" width="1" height="1" fill="#101828"/><rect x="415" y="6" width="2" height="1" fill="#a8b4cc"/><rect x="415" y="7" width="1" height="1" fill="#a8b4cc"/><rect x="416" y="7" width="1" height="1" fill="#8090a8"/><rect x="417" y="7" width="1" height="1" fill="#000"/><rect x="416" y="8" width="1" height="1" fill="#000"/><rect x="417" y="8" width="1" height="1" fill="#101828"/><rect x="419" y="2" width="2" height="1" fill="#a8b4cc"/><rect x="419" y="3" width="1" height="1" fill="#a8b4cc"/><rect x="420" y="3" width="1" height="1" fill="#8090a8"/><rect x="421" y="3" width="1" height="1" fill="#000"/><rect x="420" y="4" width="1" height="1" fill="#000"/><rect x="421" y="4" width="1" height="1" fill="#101828"/><rect x="419" y="10" width="2" height="1" fill="#a8b4cc"/><rect x="419" y="11" width="1" height="1" fill="#a8b4cc"/><rect x="420" y="11" width="1" height="1" fill="#8090a8"/><rect x="421" y="11" width="1" height="1" fill="#000"/><rect x="420" y="12" width="1" height="1" fill="#000"/><rect x="421" y="12" width="1" height="1" fill="#101828"/><rect x="423" y="6" width="2" height="1" fill="#a8b4cc"/><rect x="423" y="7" width="1" height="1" fill="#a8b4cc"/><rect x="424" y="7" width="1" height="1" fill="#8090a8"/><rect x="425" y="7" width="1" height="1" fill="#000"/><rect x="424" y="8" width="1" height="1" fill="#000"/><rect x="425" y="8" width="1" height="1" fill="#101828"/><rect x="427" y="2" width="2" height="1" fill="#a8b4cc"/><rect x="427" y="3" width="1" height="1" fill="#a8b4cc"/><rect x="428" y="3" width="1" height="1" fill="#8090a8"/><rect x="429" y="3" width="1" height="1" fill="#000"/><rect x="428" y="4" width="1" height="1" fill="#000"/><rect x="429" y="4" width="1" height="1" fill="#101828"/><rect x="427" y="10" width="2" height="1" fill="#a8b4cc"/><rect x="427" y="11" width="1" height="1" fill="#a8b4cc"/><rect x="428" y="11" width="1" height="1" fill="#8090a8"/><rect x="429" y="11" width="1" height="1" fill="#000"/><rect x="428" y="12" width="1" height="1" fill="#000"/><rect x="429" y="12" width="1" height="1" fill="#101828"/><rect x="431" y="6" width="2" height="1" fill="#a8b4cc"/><rect x="431" y="7" width="1" height="1" fill="#a8b4cc"/><rect x="432" y="7" width="1" height="1" fill="#8090a8"/><rect x="433" y="7" width="1" height="1" fill="#000"/><rect x="432" y="8" width="1" height="1" fill="#000"/><rect x="433" y="8" width="1" height="1" fill="#101828"/><rect x="435" y="2" width="2" height="1" fill="#a8b4cc"/><rect x="435" y="3" width="1" height="1" fill="#a8b4cc"/><rect x="436" y="3" width="1" height="1" fill="#8090a8"/><rect x="437" y="3" width="1" height="1" fill="#000"/><rect x="436" y="4" width="1" height="1" fill="#000"/><rect x="437" y="4" width="1" height="1" fill="#101828"/><rect x="435" y="10" width="2" height="1" fill="#a8b4cc"/><rect x="435" y="11" width="1" height="1" fill="#a8b4cc"/><rect x="436" y="11" width="1" height="1" fill="#8090a8"/><rect x="437" y="11" width="1" height="1" fill="#000"/><rect x="436" y="12" width="1" height="1" fill="#000"/><rect x="437" y="12" width="1" height="1" fill="#101828"/><rect x="439" y="6" width="2" height="1" fill="#a8b4cc"/><rect x="439" y="7" width="1" height="1" fill="#a8b4cc"/><rect x="440" y="7" width="1" height="1" fill="#8090a8"/><rect x="441" y="7" width="1" height="1" fill="#000"/><rect x="440" y="8" width="1" height="1" fill="#000"/><rect x="441" y="8" width="1" height="1" fill="#101828"/><rect x="443" y="2" width="2" height="1" fill="#a8b4cc"/><rect x="443" y="3" width="1" height="1" fill="#a8b4cc"/><rect x="444" y="3" width="1" height="1" fill="#8090a8"/><rect x="445" y="3" width="1" height="1" fill="#000"/><rect x="444" y="4" width="1" height="1" fill="#000"/><rect x="445" y="4" width="1" height="1" fill="#101828"/><rect x="443" y="10" width="2" height="1" fill="#a8b4cc"/><rect x="443" y="11" width="1" height="1" fill="#a8b4cc"/><rect x="444" y="11" width="1" height="1" fill="#8090a8"/><rect x="445" y="11" width="1" height="1" fill="#000"/><rect x="444" y="12" width="1" height="1" fill="#000"/><rect x="445" y="12" width="1" height="1" fill="#101828"/><rect x="447" y="6" width="2" height="1" fill="#a8b4cc"/><rect x="447" y="7" width="1" height="1" fill="#a8b4cc"/><rect x="448" y="7" width="1" height="1" fill="#8090a8"/><rect x="449" y="7" width="1" height="1" fill="#000"/><rect x="448" y="8" width="1" height="1" fill="#000"/><rect x="449" y="8" width="1" height="1" fill="#101828"/><rect x="451" y="2" width="2" height="1" fill="#a8b4cc"/><rect x="451" y="3" width="1" height="1" fill="#a8b4cc"/><rect x="452" y="3" width="1" height="1" fill="#8090a8"/><rect x="453" y="3" width="1" height="1" fill="#000"/><rect x="452" y="4" width="1" height="1" fill="#000"/><rect x="453" y="4" width="1" height="1" fill="#101828"/><rect x="451" y="10" width="2" height="1" fill="#a8b4cc"/><rect x="451" y="11" width="1" height="1" fill="#a8b4cc"/><rect x="452" y="11" width="1" height="1" fill="#8090a8"/><rect x="453" y="11" width="1" height="1" fill="#000"/><rect x="452" y="12" width="1" height="1" fill="#000"/><rect x="453" y="12" width="1" height="1" fill="#101828"/><rect x="455" y="6" width="2" height="1" fill="#a8b4cc"/><rect x="455" y="7" width="1" height="1" fill="#a8b4cc"/><rect x="456" y="7" width="1" height="1" fill="#8090a8"/><rect x="457" y="7" width="1" height="1" fill="#000"/><rect x="456" y="8" width="1" height="1" fill="#000"/><rect x="457" y="8" width="1" height="1" fill="#101828"/><rect x="459" y="2" width="2" height="1" fill="#a8b4cc"/><rect x="459" y="3" width="1" height="1" fill="#a8b4cc"/><rect x="460" y="3" width="1" height="1" fill="#8090a8"/><rect x="461" y="3" width="1" height="1" fill="#000"/><rect x="460" y="4" width="1" height="1" fill="#000"/><rect x="461" y="4" width="1" height="1" fill="#101828"/><rect x="459" y="10" width="2" height="1" fill="#a8b4cc"/><rect x="459" y="11" width="1" height="1" fill="#a8b4cc"/><rect x="460" y="11" width="1" height="1" fill="#8090a8"/><rect x="461" y="11" width="1" height="1" fill="#000"/><rect x="460" y="12" width="1" height="1" fill="#000"/><rect x="461" y="12" width="1" height="1" fill="#101828"/><rect x="463" y="6" width="2" height="1" fill="#a8b4cc"/><rect x="463" y="7" width="1" height="1" fill="#a8b4cc"/><rect x="464" y="7" width="1" height="1" fill="#8090a8"/><rect x="465" y="7" width="1" height="1" fill="#000"/><rect x="464" y="8" width="1" height="1" fill="#000"/><rect x="465" y="8" width="1" height="1" fill="#101828"/><rect x="467" y="2" width="2" height="1" fill="#a8b4cc"/><rect x="467" y="3" width="1" height="1" fill="#a8b4cc"/><rect x="468" y="3" width="1" height="1" fill="#8090a8"/><rect x="469" y="3" width="1" height="1" fill="#000"/><rect x="468" y="4" width="1" height="1" fill="#000"/><rect x="469" y="4" width="1" height="1" fill="#101828"/><rect x="467" y="10" width="2" height="1" fill="#a8b4cc"/><rect x="467" y="11" width="1" height="1" fill="#a8b4cc"/><rect x="468" y="11" width="1" height="1" fill="#8090a8"/><rect x="469" y="11" width="1" height="1" fill="#000"/><rect x="468" y="12" width="1" height="1" fill="#000"/><rect x="469" y="12" width="1" height="1" fill="#101828"/><rect x="471" y="6" width="2" height="1" fill="#a8b4cc"/><rect x="471" y="7" width="1" height="1" fill="#a8b4cc"/><rect x="472" y="7" width="1" height="1" fill="#8090a8"/><rect x="473" y="7" width="1" height="1" fill="#000"/><rect x="472" y="8" width="1" height="1" fill="#000"/><rect x="473" y="8" width="1" height="1" fill="#101828"/><rect x="475" y="2" width="2" height="1" fill="#a8b4cc"/><rect x="475" y="3" width="1" height="1" fill="#a8b4cc"/><rect x="476" y="3" width="1" height="1" fill="#8090a8"/><rect x="477" y="3" width="1" height="1" fill="#000"/><rect x="476" y="4" width="1" height="1" fill="#000"/><rect x="477" y="4" width="1" height="1" fill="#101828"/><rect x="475" y="10" width="2" height="1" fill="#a8b4cc"/><rect x="475" y="11" width="1" height="1" fill="#a8b4cc"/><rect x="476" y="11" width="1" height="1" fill="#8090a8"/><rect x="477" y="11" width="1" height="1" fill="#000"/><rect x="476" y="12" width="1" height="1" fill="#000"/><rect x="477" y="12" width="1" height="1" fill="#101828"/><rect x="479" y="6" width="2" height="1" fill="#a8b4cc"/><rect x="479" y="7" width="1" height="1" fill="#a8b4cc"/><rect x="480" y="7" width="1" height="1" fill="#8090a8"/><rect x="481" y="7" width="1" height="1" fill="#000"/><rect x="480" y="8" width="1" height="1" fill="#000"/><rect x="481" y="8" width="1" height="1" fill="#101828"/><rect x="483" y="2" width="2" height="1" fill="#a8b4cc"/><rect x="483" y="3" width="1" height="1" fill="#a8b4cc"/><rect x="484" y="3" width="1" height="1" fill="#8090a8"/><rect x="485" y="3" width="1" height="1" fill="#000"/><rect x="484" y="4" width="1" height="1" fill="#000"/><rect x="485" y="4" width="1" height="1" fill="#101828"/><rect x="483" y="10" width="2" height="1" fill="#a8b4cc"/><rect x="483" y="11" width="1" height="1" fill="#a8b4cc"/><rect x="484" y="11" width="1" height="1" fill="#8090a8"/><rect x="485" y="11" width="1" height="1" fill="#000"/><rect x="484" y="12" width="1" height="1" fill="#000"/><rect x="485" y="12" width="1" height="1" fill="#101828"/><rect x="487" y="6" width="2" height="1" fill="#a8b4cc"/><rect x="487" y="7" width="1" height="1" fill="#a8b4cc"/><rect x="488" y="7" width="1" height="1" fill="#8090a8"/><rect x="489" y="7" width="1" height="1" fill="#000"/><rect x="488" y="8" width="1" height="1" fill="#000"/><rect x="489" y="8" width="1" height="1" fill="#101828"/><rect x="491" y="2" width="2" height="1" fill="#a8b4cc"/><rect x="491" y="3" width="1" height="1" fill="#a8b4cc"/><rect x="492" y="3" width="1" height="1" fill="#8090a8"/><rect x="493" y="3" width="1" height="1" fill="#000"/><rect x="492" y="4" width="1" height="1" fill="#000"/><rect x="493" y="4" width="1" height="1" fill="#101828"/><rect x="491" y="10" width="2" height="1" fill="#a8b4cc"/><rect x="491" y="11" width="1" height="1" fill="#a8b4cc"/><rect x="492" y="11" width="1" height="1" fill="#8090a8"/><rect x="493" y="11" width="1" height="1" fill="#000"/><rect x="492" y="12" width="1" height="1" fill="#000"/><rect x="493" y="12" width="1" height="1" fill="#101828"/><rect x="495" y="6" width="2" height="1" fill="#a8b4cc"/><rect x="495" y="7" width="1" height="1" fill="#a8b4cc"/><rect x="496" y="7" width="1" height="1" fill="#8090a8"/><rect x="497" y="7" width="1" height="1" fill="#000"/><rect x="496" y="8" width="1" height="1" fill="#000"/><rect x="497" y="8" width="1" height="1" fill="#101828"/><rect x="499" y="2" width="2" height="1" fill="#a8b4cc"/><rect x="499" y="3" width="1" height="1" fill="#a8b4cc"/><rect x="500" y="3" width="1" height="1" fill="#8090a8"/><rect x="501" y="3" width="1" height="1" fill="#000"/><rect x="500" y="4" width="1" height="1" fill="#000"/><rect x="501" y="4" width="1" height="1" fill="#101828"/><rect x="499" y="10" width="2" height="1" fill="#a8b4cc"/><rect x="499" y="11" width="1" height="1" fill="#a8b4cc"/><rect x="500" y="11" width="1" height="1" fill="#8090a8"/><rect x="501" y="11" width="1" height="1" fill="#000"/><rect x="500" y="12" width="1" height="1" fill="#000"/><rect x="501" y="12" width="1" height="1" fill="#101828"/><rect x="503" y="6" width="2" height="1" fill="#a8b4cc"/><rect x="503" y="7" width="1" height="1" fill="#a8b4cc"/><rect x="504" y="7" width="1" height="1" fill="#8090a8"/><rect x="505" y="7" width="1" height="1" fill="#000"/><rect x="504" y="8" width="1" height="1" fill="#000"/><rect x="505" y="8" width="1" height="1" fill="#101828"/><rect x="507" y="2" width="2" height="1" fill="#a8b4cc"/><rect x="507" y="3" width="1" height="1" fill="#a8b4cc"/><rect x="508" y="3" width="1" height="1" fill="#8090a8"/><rect x="509" y="3" width="1" height="1" fill="#000"/><rect x="508" y="4" width="1" height="1" fill="#000"/><rect x="509" y="4" width="1" height="1" fill="#101828"/><rect x="507" y="10" width="2" height="1" fill="#a8b4cc"/><rect x="507" y="11" width="1" height="1" fill="#a8b4cc"/><rect x="508" y="11" width="1" height="1" fill="#8090a8"/><rect x="509" y="11" width="1" height="1" fill="#000"/><rect x="508" y="12" width="1" height="1" fill="#000"/><rect x="509" y="12" width="1" height="1" fill="#101828"/><rect x="511" y="6" width="2" height="1" fill="#a8b4cc"/><rect x="511" y="7" width="1" height="1" fill="#a8b4cc"/><rect x="512" y="7" width="1" height="1" fill="#8090a8"/><rect x="513" y="7" width="1" height="1" fill="#000"/><rect x="512" y="8" width="1" height="1" fill="#000"/><rect x="513" y="8" width="1" height="1" fill="#101828"/><rect x="515" y="2" width="2" height="1" fill="#a8b4cc"/><rect x="515" y="3" width="1" height="1" fill="#a8b4cc"/><rect x="516" y="3" width="1" height="1" fill="#8090a8"/><rect x="517" y="3" width="1" height="1" fill="#000"/><rect x="516" y="4" width="1" height="1" fill="#000"/><rect x="517" y="4" width="1" height="1" fill="#101828"/><rect x="515" y="10" width="2" height="1" fill="#a8b4cc"/><rect x="515" y="11" width="1" height="1" fill="#a8b4cc"/><rect x="516" y="11" width="1" height="1" fill="#8090a8"/><rect x="517" y="11" width="1" height="1" fill="#000"/><rect x="516" y="12" width="1" height="1" fill="#000"/><rect x="517" y="12" width="1" height="1" fill="#101828"/><rect x="519" y="6" width="2" height="1" fill="#a8b4cc"/><rect x="519" y="7" width="1" height="1" fill="#a8b4cc"/><rect x="520" y="7" width="1" height="1" fill="#8090a8"/><rect x="521" y="7" width="1" height="1" fill="#000"/><rect x="520" y="8" width="1" height="1" fill="#000"/><rect x="521" y="8" width="1" height="1" fill="#101828"/><rect x="523" y="2" width="2" height="1" fill="#a8b4cc"/><rect x="523" y="3" width="1" height="1" fill="#a8b4cc"/><rect x="524" y="3" width="1" height="1" fill="#8090a8"/><rect x="525" y="3" width="1" height="1" fill="#000"/><rect x="524" y="4" width="1" height="1" fill="#000"/><rect x="525" y="4" width="1" height="1" fill="#101828"/><rect x="523" y="10" width="2" height="1" fill="#a8b4cc"/><rect x="523" y="11" width="1" height="1" fill="#a8b4cc"/><rect x="524" y="11" width="1" height="1" fill="#8090a8"/><rect x="525" y="11" width="1" height="1" fill="#000"/><rect x="524" y="12" width="1" height="1" fill="#000"/><rect x="525" y="12" width="1" height="1" fill="#101828"/><rect x="527" y="6" width="2" height="1" fill="#a8b4cc"/><rect x="527" y="7" width="1" height="1" fill="#a8b4cc"/><rect x="528" y="7" width="1" height="1" fill="#8090a8"/><rect x="529" y="7" width="1" height="1" fill="#000"/><rect x="528" y="8" width="1" height="1" fill="#000"/><rect x="529" y="8" width="1" height="1" fill="#101828"/><rect x="531" y="2" width="2" height="1" fill="#a8b4cc"/><rect x="531" y="3" width="1" height="1" fill="#a8b4cc"/><rect x="532" y="3" width="1" height="1" fill="#8090a8"/><rect x="533" y="3" width="1" height="1" fill="#000"/><rect x="532" y="4" width="1" height="1" fill="#000"/><rect x="533" y="4" width="1" height="1" fill="#101828"/><rect x="531" y="10" width="2" height="1" fill="#a8b4cc"/><rect x="531" y="11" width="1" height="1" fill="#a8b4cc"/><rect x="532" y="11" width="1" height="1" fill="#8090a8"/><rect x="533" y="11" width="1" height="1" fill="#000"/><rect x="532" y="12" width="1" height="1" fill="#000"/><rect x="533" y="12" width="1" height="1" fill="#101828"/><rect x="535" y="6" width="2" height="1" fill="#a8b4cc"/><rect x="535" y="7" width="1" height="1" fill="#a8b4cc"/><rect x="536" y="7" width="1" height="1" fill="#8090a8"/><rect x="537" y="7" width="1" height="1" fill="#000"/><rect x="536" y="8" width="1" height="1" fill="#000"/><rect x="537" y="8" width="1" height="1" fill="#101828"/><rect x="539" y="2" width="2" height="1" fill="#a8b4cc"/><rect x="539" y="3" width="1" height="1" fill="#a8b4cc"/><rect x="540" y="3" width="1" height="1" fill="#8090a8"/><rect x="541" y="3" width="1" height="1" fill="#000"/><rect x="540" y="4" width="1" height="1" fill="#000"/><rect x="541" y="4" width="1" height="1" fill="#101828"/><rect x="539" y="10" width="2" height="1" fill="#a8b4cc"/><rect x="539" y="11" width="1" height="1" fill="#a8b4cc"/><rect x="540" y="11" width="1" height="1" fill="#8090a8"/><rect x="541" y="11" width="1" height="1" fill="#000"/><rect x="540" y="12" width="1" height="1" fill="#000"/><rect x="541" y="12" width="1" height="1" fill="#101828"/><rect x="543" y="6" width="2" height="1" fill="#a8b4cc"/><rect x="543" y="7" width="1" height="1" fill="#a8b4cc"/><rect x="544" y="7" width="1" height="1" fill="#8090a8"/><rect x="545" y="7" width="1" height="1" fill="#000"/><rect x="544" y="8" width="1" height="1" fill="#000"/><rect x="545" y="8" width="1" height="1" fill="#101828"/><rect x="547" y="2" width="2" height="1" fill="#a8b4cc"/><rect x="547" y="3" width="1" height="1" fill="#a8b4cc"/><rect x="548" y="3" width="1" height="1" fill="#8090a8"/><rect x="549" y="3" width="1" height="1" fill="#000"/><rect x="548" y="4" width="1" height="1" fill="#000"/><rect x="549" y="4" width="1" height="1" fill="#101828"/><rect x="547" y="10" width="2" height="1" fill="#a8b4cc"/><rect x="547" y="11" width="1" height="1" fill="#a8b4cc"/><rect x="548" y="11" width="1" height="1" fill="#8090a8"/><rect x="549" y="11" width="1" height="1" fill="#000"/><rect x="548" y="12" width="1" height="1" fill="#000"/><rect x="549" y="12" width="1" height="1" fill="#101828"/><rect x="551" y="6" width="2" height="1" fill="#a8b4cc"/><rect x="551" y="7" width="1" height="1" fill="#a8b4cc"/><rect x="552" y="7" width="1" height="1" fill="#8090a8"/><rect x="553" y="7" width="1" height="1" fill="#000"/><rect x="552" y="8" width="1" height="1" fill="#000"/><rect x="553" y="8" width="1" height="1" fill="#101828"/><rect x="555" y="2" width="2" height="1" fill="#a8b4cc"/><rect x="555" y="3" width="1" height="1" fill="#a8b4cc"/><rect x="556" y="3" width="1" height="1" fill="#8090a8"/><rect x="557" y="3" width="1" height="1" fill="#000"/><rect x="556" y="4" width="1" height="1" fill="#000"/><rect x="557" y="4" width="1" height="1" fill="#101828"/><rect x="555" y="10" width="2" height="1" fill="#a8b4cc"/><rect x="555" y="11" width="1" height="1" fill="#a8b4cc"/><rect x="556" y="11" width="1" height="1" fill="#8090a8"/><rect x="557" y="11" width="1" height="1" fill="#000"/><rect x="556" y="12" width="1" height="1" fill="#000"/><rect x="557" y="12" width="1" height="1" fill="#101828"/><rect x="559" y="6" width="2" height="1" fill="#a8b4cc"/><rect x="559" y="7" width="1" height="1" fill="#a8b4cc"/><rect x="560" y="7" width="1" height="1" fill="#8090a8"/><rect x="561" y="7" width="1" height="1" fill="#000"/><rect x="560" y="8" width="1" height="1" fill="#000"/><rect x="561" y="8" width="1" height="1" fill="#101828"/><rect x="563" y="2" width="2" height="1" fill="#a8b4cc"/><rect x="563" y="3" width="1" height="1" fill="#a8b4cc"/><rect x="564" y="3" width="1" height="1" fill="#8090a8"/><rect x="565" y="3" width="1" height="1" fill="#000"/><rect x="564" y="4" width="1" height="1" fill="#000"/><rect x="565" y="4" width="1" height="1" fill="#101828"/><rect x="563" y="10" width="2" height="1" fill="#a8b4cc"/><rect x="563" y="11" width="1" height="1" fill="#a8b4cc"/><rect x="564" y="11" width="1" height="1" fill="#8090a8"/><rect x="565" y="11" width="1" height="1" fill="#000"/><rect x="564" y="12" width="1" height="1" fill="#000"/><rect x="565" y="12" width="1" height="1" fill="#101828"/><rect x="567" y="6" width="2" height="1" fill="#a8b4cc"/><rect x="567" y="7" width="1" height="1" fill="#a8b4cc"/><rect x="568" y="7" width="1" height="1" fill="#8090a8"/><rect x="569" y="7" width="1" height="1" fill="#000"/><rect x="568" y="8" width="1" height="1" fill="#000"/><rect x="569" y="8" width="1" height="1" fill="#101828"/><rect x="571" y="2" width="2" height="1" fill="#a8b4cc"/><rect x="571" y="3" width="1" height="1" fill="#a8b4cc"/><rect x="572" y="3" width="1" height="1" fill="#8090a8"/><rect x="573" y="3" width="1" height="1" fill="#000"/><rect x="572" y="4" width="1" height="1" fill="#000"/><rect x="573" y="4" width="1" height="1" fill="#101828"/><rect x="571" y="10" width="2" height="1" fill="#a8b4cc"/><rect x="571" y="11" width="1" height="1" fill="#a8b4cc"/><rect x="572" y="11" width="1" height="1" fill="#8090a8"/><rect x="573" y="11" width="1" height="1" fill="#000"/><rect x="572" y="12" width="1" height="1" fill="#000"/><rect x="573" y="12" width="1" height="1" fill="#101828"/></svg>
<svg style="position:absolute;left:940px;top:2px" width="50" height="18"><g stroke="#fff" stroke-width="1.7" fill="none" stroke-linecap="square"><line x1="14.4" y1="4.4" x2="9.6" y2="9.2"/><line x1="9.4" y1="9.6" x2="12.6" y2="9.6"/><line x1="9.4" y1="9.6" x2="9.4" y2="6.4"/><line x1="21.6" y1="13.6" x2="26.4" y2="8.6"/><line x1="23.4" y1="8.2" x2="26.8" y2="8.2"/><line x1="26.8" y1="8.2" x2="26.8" y2="11.4"/></g><g stroke="#fff" stroke-width="2" fill="none"><line x1="37.6" y1="4.8" x2="46.2" y2="13.4"/><line x1="46.2" y1="4.8" x2="37.6" y2="13.4"/></g><rect x="5" y="12" width="8" height="1.8" fill="#fff"/><rect x="21" y="4" width="10" height="1.7" fill="#fff"/><rect x="29.6" y="4" width="1.5" height="10" fill="#e8e8e8"/></svg>
<svg style="position:absolute;left:0px;top:0px" width="20" height="20" shape-rendering="crispEdges"><circle cx="7.5" cy="7" r="4.8" fill="#1424a8" shape-rendering="auto"/><rect x="5" y="3" width="1" height="1" fill="#b8c0f8"/><rect x="8" y="3" width="1" height="1" fill="#b8c0f8"/><rect x="10" y="4" width="1" height="1" fill="#b8c0f8"/><rect x="6" y="5" width="1" height="1" fill="#b8c0f8"/><rect x="12" y="5" width="1" height="1" fill="#b8c0f8"/><rect x="4" y="5" width="2" height="5" fill="#58a868"/><rect x="3" y="12" width="1" height="1" fill="#8090c0"/><rect x="5" y="14" width="1" height="1" fill="#8090c0"/><rect x="6" y="7" width="13" height="12" fill="#000"/><rect x="7" y="8" width="11" height="10" fill="#f0f0f0"/><rect x="7" y="8" width="4" height="4" fill="#d8d8d8"/><path d="M10.2,8.2 L13.6,8.2 L11.4,11.6 L13.4,11.6 L7.4,17.8 L9.4,13.2 L7.2,13.2 Z" fill="#f8f000" stroke="#1828a0" stroke-width="0.6" shape-rendering="auto"/><rect x="14" y="9" width="3" height="2" fill="#1030e0"/><rect x="13" y="12" width="4" height="1" fill="#e02020"/><rect x="12" y="14" width="4" height="1" fill="#e02020"/><rect x="11" y="16" width="3" height="1" fill="#e02020"/><rect x="15" y="15" width="3" height="3" fill="#1030e0"/></svg>
<div style="left:6px;top:24px;width:981px;height:141px;background:#c0e0fc;border:1px solid #e6e0b8;border-radius:10px"></div>
<div class="t" style="left:28px;top:36.15px;font-size:11px;line-height:11px;color:#000;">Mandant</div>
<div style="left:76px;top:34px;width:138px;height:18px;background:#fff;border-top:2px solid #5a6e8e;border-left:2px solid #5a6e8e;border-right:1px solid #5a6e8e;border-bottom:1px solid #5a6e8e;border-radius:3px;box-shadow:1px 1px 0 #fff"></div>
<div style="left:199px;top:37px;width:14px;height:14px;background:#cccccc;"></div>
<svg style="position:absolute;left:203px;top:42.5px" width="8" height="5"><polygon points="0,0 7,0 3.5,4" fill="#5a6e8e"/></svg>
<div class="t" style="left:81px;top:37.50px;font-size:10px;line-height:10px;color:#000;letter-spacing:-0.4px">Sitzerlebnis</div>
<div class="t" style="left:40px;top:66.65px;font-size:11px;line-height:11px;color:#000;">Kunde</div>
<svg style="position:absolute;left:79px;top:67px" width="11" height="11" shape-rendering="crispEdges"><circle cx="5" cy="5" r="4.6" fill="#fff" shape-rendering="auto"/><rect x="3" y="0" width="1" height="1" fill="#1c2840"/><rect x="4" y="0" width="1" height="1" fill="#1c2840"/><rect x="5" y="0" width="1" height="1" fill="#1c2840"/><rect x="6" y="0" width="1" height="1" fill="#1c2840"/><rect x="1" y="1" width="1" height="1" fill="#1c2840"/><rect x="2" y="1" width="1" height="1" fill="#1c2840"/><rect x="7" y="1" width="1" height="1" fill="#1c2840"/><rect x="1" y="2" width="1" height="1" fill="#1c2840"/><rect x="3" y="2" width="1" height="1" fill="#28364e"/><rect x="4" y="2" width="1" height="1" fill="#28364e"/><rect x="5" y="2" width="1" height="1" fill="#28364e"/><rect x="6" y="2" width="1" height="1" fill="#28364e"/><rect x="0" y="3" width="1" height="1" fill="#1c2840"/><rect x="2" y="3" width="1" height="1" fill="#28364e"/><rect x="3" y="3" width="1" height="1" fill="#28364e"/><rect x="4" y="3" width="1" height="1" fill="#28364e"/><rect x="5" y="3" width="1" height="1" fill="#28364e"/><rect x="6" y="3" width="1" height="1" fill="#28364e"/><rect x="7" y="3" width="1" height="1" fill="#28364e"/><rect x="10" y="3" width="1" height="1" fill="#fff"/><rect x="0" y="4" width="1" height="1" fill="#1c2840"/><rect x="2" y="4" width="1" height="1" fill="#28364e"/><rect x="3" y="4" width="1" height="1" fill="#28364e"/><rect x="4" y="4" width="1" height="1" fill="#28364e"/><rect x="5" y="4" width="1" height="1" fill="#28364e"/><rect x="6" y="4" width="1" height="1" fill="#28364e"/><rect x="7" y="4" width="1" height="1" fill="#28364e"/><rect x="10" y="4" width="1" height="1" fill="#fff"/><rect x="0" y="5" width="1" height="1" fill="#1c2840"/><rect x="2" y="5" width="1" height="1" fill="#28364e"/><rect x="3" y="5" width="1" height="1" fill="#28364e"/><rect x="4" y="5" width="1" height="1" fill="#28364e"/><rect x="5" y="5" width="1" height="1" fill="#28364e"/><rect x="6" y="5" width="1" height="1" fill="#28364e"/><rect x="7" y="5" width="1" height="1" fill="#28364e"/><rect x="10" y="5" width="1" height="1" fill="#fff"/><rect x="0" y="6" width="1" height="1" fill="#1c2840"/><rect x="2" y="6" width="1" height="1" fill="#28364e"/><rect x="3" y="6" width="1" height="1" fill="#28364e"/><rect x="4" y="6" width="1" height="1" fill="#28364e"/><rect x="5" y="6" width="1" height="1" fill="#28364e"/><rect x="6" y="6" width="1" height="1" fill="#28364e"/><rect x="7" y="6" width="1" height="1" fill="#28364e"/><rect x="10" y="6" width="1" height="1" fill="#fff"/><rect x="1" y="7" width="1" height="1" fill="#1c2840"/><rect x="3" y="7" width="1" height="1" fill="#28364e"/><rect x="4" y="7" width="1" height="1" fill="#28364e"/><rect x="5" y="7" width="1" height="1" fill="#28364e"/><rect x="6" y="7" width="1" height="1" fill="#28364e"/><rect x="9" y="7" width="1" height="1" fill="#fff"/><rect x="9" y="8" width="1" height="1" fill="#fff"/><rect x="1" y="9" width="1" height="1" fill="#fff"/><rect x="2" y="9" width="1" height="1" fill="#fff"/><rect x="3" y="9" width="1" height="1" fill="#fff"/><rect x="7" y="9" width="1" height="1" fill="#fff"/><rect x="8" y="9" width="1" height="1" fill="#fff"/><rect x="3" y="10" width="1" height="1" fill="#fff"/><rect x="4" y="10" width="1" height="1" fill="#fff"/><rect x="5" y="10" width="1" height="1" fill="#fff"/><rect x="6" y="10" width="1" height="1" fill="#fff"/></svg>
<div class="t" style="left:18px;top:89.15px;font-size:11px;line-height:11px;color:#000;">Interessent</div>
<svg style="position:absolute;left:79px;top:89px" width="11" height="11" shape-rendering="crispEdges"><circle cx="5" cy="5" r="4.6" fill="#fff" shape-rendering="auto"/><rect x="3" y="0" width="1" height="1" fill="#1c2840"/><rect x="4" y="0" width="1" height="1" fill="#1c2840"/><rect x="5" y="0" width="1" height="1" fill="#1c2840"/><rect x="6" y="0" width="1" height="1" fill="#1c2840"/><rect x="1" y="1" width="1" height="1" fill="#1c2840"/><rect x="2" y="1" width="1" height="1" fill="#1c2840"/><rect x="7" y="1" width="1" height="1" fill="#1c2840"/><rect x="1" y="2" width="1" height="1" fill="#1c2840"/><rect x="0" y="3" width="1" height="1" fill="#1c2840"/><rect x="10" y="3" width="1" height="1" fill="#fff"/><rect x="0" y="4" width="1" height="1" fill="#1c2840"/><rect x="10" y="4" width="1" height="1" fill="#fff"/><rect x="0" y="5" width="1" height="1" fill="#1c2840"/><rect x="10" y="5" width="1" height="1" fill="#fff"/><rect x="0" y="6" width="1" height="1" fill="#1c2840"/><rect x="10" y="6" width="1" height="1" fill="#fff"/><rect x="1" y="7" width="1" height="1" fill="#1c2840"/><rect x="9" y="7" width="1" height="1" fill="#fff"/><rect x="9" y="8" width="1" height="1" fill="#fff"/><rect x="1" y="9" width="1" height="1" fill="#fff"/><rect x="2" y="9" width="1" height="1" fill="#fff"/><rect x="3" y="9" width="1" height="1" fill="#fff"/><rect x="7" y="9" width="1" height="1" fill="#fff"/><rect x="8" y="9" width="1" height="1" fill="#fff"/><rect x="3" y="10" width="1" height="1" fill="#fff"/><rect x="4" y="10" width="1" height="1" fill="#fff"/><rect x="5" y="10" width="1" height="1" fill="#fff"/><rect x="6" y="10" width="1" height="1" fill="#fff"/></svg>
<div style="left:100px;top:64px;width:79px;height:17px;background:#fff;border-top:2px solid #5a6e8e;border-left:2px solid #5a6e8e;border-right:1px solid #cdc9c4;border-bottom:1px solid #cdc9c4;border-radius:2px 3px 3px 2px;box-shadow:1px 1px 0 #fff;"></div>
<div class="t" style="left:-123px;width:300px;text-align:right;top:70.00px;font-size:10px;line-height:10px;color:#000;">10000</div>
<div style="left:181px;top:64px;width:218px;height:17px;background:#fff;border-top:2px solid #5a6e8e;border-left:2px solid #5a6e8e;border-right:1px solid #cdc9c4;border-bottom:1px solid #cdc9c4;border-radius:2px 3px 3px 2px;box-shadow:1px 1px 0 #fff;"></div>
<div class="t" style="left:184px;top:70.00px;font-size:10px;line-height:10px;color:#000;">LEONARD MUSTERMANN</div>
<div style="left:100px;top:86px;width:79px;height:17px;background:#fff;border-top:2px solid #5a6e8e;border-left:2px solid #5a6e8e;border-right:1px solid #cdc9c4;border-bottom:1px solid #cdc9c4;border-radius:2px 3px 3px 2px;box-shadow:1px 1px 0 #fff;"></div>
<div style="left:181px;top:86px;width:218px;height:17px;background:#fff;border-top:2px solid #5a6e8e;border-left:2px solid #5a6e8e;border-right:1px solid #cdc9c4;border-bottom:1px solid #cdc9c4;border-radius:2px 3px 3px 2px;box-shadow:1px 1px 0 #fff;"></div>
<svg style="position:absolute;left:404px;top:43px" width="17" height="17" shape-rendering="crispEdges"><rect x="0" y="0" width="17" height="17" fill="#fff"/><rect x="1" y="1" width="15" height="13" fill="#fafafa"/><rect x="1" y="14" width="15" height="2" fill="#c8c8c8"/><rect x="1" y="16" width="16" height="1" fill="#5a6e8e"/><rect x="16" y="1" width="1" height="16" fill="#5a6e8e"/><rect x="3" y="3" width="4" height="1" fill="#ff6a10"/><rect x="3" y="5" width="4" height="1" fill="#ff6a10"/><rect x="3" y="7" width="3" height="1" fill="#ff6a10"/><rect x="3" y="9" width="3" height="1" fill="#ff6a10"/><rect x="3" y="11" width="5" height="1" fill="#ff6a10"/><rect x="8" y="9" width="2" height="1" fill="#ff6a10"/><rect x="8" y="3" width="4" height="5" fill="#48b4f4"/><rect x="14" y="2" width="1" height="6" fill="#000"/><rect x="12" y="8" width="1" height="1" fill="#000"/><rect x="14" y="8" width="1" height="1" fill="#000"/><rect x="11" y="9" width="1" height="1" fill="#000"/><rect x="13" y="9" width="1" height="1" fill="#000"/><rect x="10" y="10" width="1" height="1" fill="#000"/><rect x="12" y="10" width="1" height="1" fill="#000"/><rect x="14" y="10" width="1" height="1" fill="#000"/><rect x="9" y="11" width="1" height="1" fill="#000"/><rect x="11" y="11" width="1" height="1" fill="#000"/><rect x="13" y="11" width="1" height="1" fill="#000"/><rect x="10" y="12" width="1" height="1" fill="#000"/><rect x="12" y="12" width="1" height="1" fill="#000"/><rect x="14" y="12" width="1" height="1" fill="#000"/><rect x="9" y="13" width="1" height="1" fill="#000"/><rect x="11" y="13" width="1" height="1" fill="#000"/><rect x="13" y="13" width="1" height="1" fill="#000"/><rect x="14" y="9" width="1" height="1" fill="#000"/><rect x="14" y="12" width="1" height="2" fill="#000"/></svg>
<svg style="position:absolute;left:425px;top:43px" width="17" height="17" shape-rendering="crispEdges"><rect x="0" y="0" width="17" height="17" fill="#fff"/><rect x="1" y="1" width="15" height="13" fill="#fafafa"/><rect x="1" y="14" width="15" height="2" fill="#c8c8c8"/><rect x="1" y="16" width="16" height="1" fill="#5a6e8e"/><rect x="16" y="1" width="1" height="16" fill="#5a6e8e"/><rect x="3" y="3" width="5" height="1" fill="#ff6a10"/><rect x="3" y="5" width="3" height="1" fill="#ff6a10"/><rect x="3" y="7" width="2" height="1" fill="#ff6a10"/><rect x="3" y="9" width="2" height="1" fill="#ff6a10"/><rect x="3" y="11" width="3" height="1" fill="#ff6a10"/><rect x="9" y="3" width="4" height="1" fill="#ff6a10"/><rect x="14" y="2" width="1" height="10" fill="#000"/><circle cx="9.5" cy="8.5" r="3.2" fill="#d8f4ff" stroke="#000" stroke-width="1.3" shape-rendering="auto"/><rect x="12" y="11" width="1" height="1" fill="#000"/><rect x="13" y="12" width="2" height="2" fill="#ff6a10"/></svg>
<div style="left:403px;top:75px;width:18px;height:18px;background:#c4c4c4;border-top:1px solid #fff;border-left:1px solid #fff;border-right:1px solid #8c9cb4;border-bottom:1px solid #8c9cb4"></div>
<svg style="position:absolute;left:404px;top:76px" width="16" height="16"><circle cx="9" cy="9" r="3.2" fill="#f0f0f0"/><g stroke="#e0e0e0" stroke-width="1.2"><line x1="3" y1="3" x2="5" y2="1.5"/><line x1="8" y1="3" x2="10" y2="1.5"/><line x1="2" y1="6" x2="5" y2="6"/><line x1="2" y1="12" x2="5" y2="12"/></g></svg>
<div style="left:456px;top:49px;width:405px;height:110px;background:#fff;"></div>
<div style="left:457px;top:50px;width:404px;height:109px;background:#cccccc;"></div>
<div style="left:861px;top:51px;width:1px;height:108px;background:#5a6e8e;"></div>
<div style="left:862px;top:52px;width:1px;height:107px;background:#8a9ab4;"></div>
<div style="left:458px;top:159px;width:403px;height:1px;background:#5a6e8e;"></div>
<div style="left:459px;top:160px;width:402px;height:1px;background:#8a9ab4;"></div>
<div style="left:861px;top:159px;width:1px;height:1px;background:#5a6e8e;"></div>
<div style="left:459px;top:51px;width:401px;height:107px;background:#c0e0fc;"></div>
<div style="left:456px;top:28px;width:97px;height:24px;background:#cbcbcb;border-radius:2px 2px 0 0"></div>
<div class="t" style="left:456.5px;width:97.0px;text-align:center;top:34.65px;font-size:11px;line-height:11px;color:#000;">Angebot</div>
<div style="left:456px;top:30px;width:1px;height:21px;background:#fff;"></div>
<div style="left:458px;top:28px;width:93px;height:1px;background:#fff;"></div>
<div style="left:457px;top:29px;width:1px;height:1px;background:#fff;"></div>
<div style="left:551px;top:29px;width:1px;height:1px;background:#fff;"></div>
<div style="left:553px;top:30px;width:1px;height:18px;background:#5a6e8e;"></div>
<div style="left:554px;top:48px;width:1px;height:1px;background:#5a6e8e;"></div>
<div style="left:553px;top:49px;width:2px;height:1px;background:#fff;"></div>
<div style="left:552px;top:50px;width:3px;height:1px;background:#cccccc;"></div>
<div style="left:557px;top:28px;width:95px;height:21px;background:#95a1b5;border-radius:2px 2px 0 0"></div>
<div class="t" style="left:557px;width:95px;text-align:center;top:34.65px;font-size:11px;line-height:11px;color:#000;">Ansprechpartner</div>
<div style="left:655px;top:28px;width:95px;height:21px;background:#95a1b5;border-radius:2px 2px 0 0"></div>
<div class="t" style="left:655px;width:95px;text-align:center;top:34.65px;font-size:11px;line-height:11px;color:#000;">Notiz</div>
<div style="left:753px;top:28px;width:95px;height:21px;background:#95a1b5;border-radius:2px 2px 0 0"></div>
<div class="t" style="left:753px;width:95px;text-align:center;top:34.65px;font-size:11px;line-height:11px;color:#000;">Filtervorlagen</div>
<div style="left:462px;top:57px;width:214px;height:89px;background:#000;"></div>
<div style="left:463px;top:58px;width:212px;height:87px;background:#c0e0fc;"></div>
<div class="t" style="left:470px;top:63.65px;font-size:11px;line-height:11px;color:#000;">Zeitraum</div>
<svg style="position:absolute;left:470px;top:86px" width="11" height="11" shape-rendering="crispEdges"><circle cx="5" cy="5" r="4.6" fill="#fff" shape-rendering="auto"/><rect x="3" y="0" width="1" height="1" fill="#1c2840"/><rect x="4" y="0" width="1" height="1" fill="#1c2840"/><rect x="5" y="0" width="1" height="1" fill="#1c2840"/><rect x="6" y="0" width="1" height="1" fill="#1c2840"/><rect x="1" y="1" width="1" height="1" fill="#1c2840"/><rect x="2" y="1" width="1" height="1" fill="#1c2840"/><rect x="7" y="1" width="1" height="1" fill="#1c2840"/><rect x="1" y="2" width="1" height="1" fill="#1c2840"/><rect x="0" y="3" width="1" height="1" fill="#1c2840"/><rect x="10" y="3" width="1" height="1" fill="#fff"/><rect x="0" y="4" width="1" height="1" fill="#1c2840"/><rect x="10" y="4" width="1" height="1" fill="#fff"/><rect x="0" y="5" width="1" height="1" fill="#1c2840"/><rect x="10" y="5" width="1" height="1" fill="#fff"/><rect x="0" y="6" width="1" height="1" fill="#1c2840"/><rect x="10" y="6" width="1" height="1" fill="#fff"/><rect x="1" y="7" width="1" height="1" fill="#1c2840"/><rect x="9" y="7" width="1" height="1" fill="#fff"/><rect x="9" y="8" width="1" height="1" fill="#fff"/><rect x="1" y="9" width="1" height="1" fill="#fff"/><rect x="2" y="9" width="1" height="1" fill="#fff"/><rect x="3" y="9" width="1" height="1" fill="#fff"/><rect x="7" y="9" width="1" height="1" fill="#fff"/><rect x="8" y="9" width="1" height="1" fill="#fff"/><rect x="3" y="10" width="1" height="1" fill="#fff"/><rect x="4" y="10" width="1" height="1" fill="#fff"/><rect x="5" y="10" width="1" height="1" fill="#fff"/><rect x="6" y="10" width="1" height="1" fill="#fff"/></svg>
<div class="t" style="left:483px;top:87.65px;font-size:11px;line-height:11px;color:#000;">Alles</div>
<svg style="position:absolute;left:470px;top:105px" width="11" height="11" shape-rendering="crispEdges"><circle cx="5" cy="5" r="4.6" fill="#fff" shape-rendering="auto"/><rect x="3" y="0" width="1" height="1" fill="#1c2840"/><rect x="4" y="0" width="1" height="1" fill="#1c2840"/><rect x="5" y="0" width="1" height="1" fill="#1c2840"/><rect x="6" y="0" width="1" height="1" fill="#1c2840"/><rect x="1" y="1" width="1" height="1" fill="#1c2840"/><rect x="2" y="1" width="1" height="1" fill="#1c2840"/><rect x="7" y="1" width="1" height="1" fill="#1c2840"/><rect x="1" y="2" width="1" height="1" fill="#1c2840"/><rect x="3" y="2" width="1" height="1" fill="#28364e"/><rect x="4" y="2" width="1" height="1" fill="#28364e"/><rect x="5" y="2" width="1" height="1" fill="#28364e"/><rect x="6" y="2" width="1" height="1" fill="#28364e"/><rect x="0" y="3" width="1" height="1" fill="#1c2840"/><rect x="2" y="3" width="1" height="1" fill="#28364e"/><rect x="3" y="3" width="1" height="1" fill="#28364e"/><rect x="4" y="3" width="1" height="1" fill="#28364e"/><rect x="5" y="3" width="1" height="1" fill="#28364e"/><rect x="6" y="3" width="1" height="1" fill="#28364e"/><rect x="7" y="3" width="1" height="1" fill="#28364e"/><rect x="10" y="3" width="1" height="1" fill="#fff"/><rect x="0" y="4" width="1" height="1" fill="#1c2840"/><rect x="2" y="4" width="1" height="1" fill="#28364e"/><rect x="3" y="4" width="1" height="1" fill="#28364e"/><rect x="4" y="4" width="1" height="1" fill="#28364e"/><rect x="5" y="4" width="1" height="1" fill="#28364e"/><rect x="6" y="4" width="1" height="1" fill="#28364e"/><rect x="7" y="4" width="1" height="1" fill="#28364e"/><rect x="10" y="4" width="1" height="1" fill="#fff"/><rect x="0" y="5" width="1" height="1" fill="#1c2840"/><rect x="2" y="5" width="1" height="1" fill="#28364e"/><rect x="3" y="5" width="1" height="1" fill="#28364e"/><rect x="4" y="5" width="1" height="1" fill="#28364e"/><rect x="5" y="5" width="1" height="1" fill="#28364e"/><rect x="6" y="5" width="1" height="1" fill="#28364e"/><rect x="7" y="5" width="1" height="1" fill="#28364e"/><rect x="10" y="5" width="1" height="1" fill="#fff"/><rect x="0" y="6" width="1" height="1" fill="#1c2840"/><rect x="2" y="6" width="1" height="1" fill="#28364e"/><rect x="3" y="6" width="1" height="1" fill="#28364e"/><rect x="4" y="6" width="1" height="1" fill="#28364e"/><rect x="5" y="6" width="1" height="1" fill="#28364e"/><rect x="6" y="6" width="1" height="1" fill="#28364e"/><rect x="7" y="6" width="1" height="1" fill="#28364e"/><rect x="10" y="6" width="1" height="1" fill="#fff"/><rect x="1" y="7" width="1" height="1" fill="#1c2840"/><rect x="3" y="7" width="1" height="1" fill="#28364e"/><rect x="4" y="7" width="1" height="1" fill="#28364e"/><rect x="5" y="7" width="1" height="1" fill="#28364e"/><rect x="6" y="7" width="1" height="1" fill="#28364e"/><rect x="9" y="7" width="1" height="1" fill="#fff"/><rect x="9" y="8" width="1" height="1" fill="#fff"/><rect x="1" y="9" width="1" height="1" fill="#fff"/><rect x="2" y="9" width="1" height="1" fill="#fff"/><rect x="3" y="9" width="1" height="1" fill="#fff"/><rect x="7" y="9" width="1" height="1" fill="#fff"/><rect x="8" y="9" width="1" height="1" fill="#fff"/><rect x="3" y="10" width="1" height="1" fill="#fff"/><rect x="4" y="10" width="1" height="1" fill="#fff"/><rect x="5" y="10" width="1" height="1" fill="#fff"/><rect x="6" y="10" width="1" height="1" fill="#fff"/></svg>
<div class="t" style="left:483px;top:105.65px;font-size:11px;line-height:11px;color:#000;">letzten</div>
<svg style="position:absolute;left:470px;top:124px" width="11" height="11" shape-rendering="crispEdges"><circle cx="5" cy="5" r="4.6" fill="#fff" shape-rendering="auto"/><rect x="3" y="0" width="1" height="1" fill="#1c2840"/><rect x="4" y="0" width="1" height="1" fill="#1c2840"/><rect x="5" y="0" width="1" height="1" fill="#1c2840"/><rect x="6" y="0" width="1" height="1" fill="#1c2840"/><rect x="1" y="1" width="1" height="1" fill="#1c2840"/><rect x="2" y="1" width="1" height="1" fill="#1c2840"/><rect x="7" y="1" width="1" height="1" fill="#1c2840"/><rect x="1" y="2" width="1" height="1" fill="#1c2840"/><rect x="0" y="3" width="1" height="1" fill="#1c2840"/><rect x="10" y="3" width="1" height="1" fill="#fff"/><rect x="0" y="4" width="1" height="1" fill="#1c2840"/><rect x="10" y="4" width="1" height="1" fill="#fff"/><rect x="0" y="5" width="1" height="1" fill="#1c2840"/><rect x="10" y="5" width="1" height="1" fill="#fff"/><rect x="0" y="6" width="1" height="1" fill="#1c2840"/><rect x="10" y="6" width="1" height="1" fill="#fff"/><rect x="1" y="7" width="1" height="1" fill="#1c2840"/><rect x="9" y="7" width="1" height="1" fill="#fff"/><rect x="9" y="8" width="1" height="1" fill="#fff"/><rect x="1" y="9" width="1" height="1" fill="#fff"/><rect x="2" y="9" width="1" height="1" fill="#fff"/><rect x="3" y="9" width="1" height="1" fill="#fff"/><rect x="7" y="9" width="1" height="1" fill="#fff"/><rect x="8" y="9" width="1" height="1" fill="#fff"/><rect x="3" y="10" width="1" height="1" fill="#fff"/><rect x="4" y="10" width="1" height="1" fill="#fff"/><rect x="5" y="10" width="1" height="1" fill="#fff"/><rect x="6" y="10" width="1" height="1" fill="#fff"/></svg>
<div class="t" style="left:483px;top:124.65px;font-size:11px;line-height:11px;color:#000;">von</div>
<div style="left:526px;top:101px;width:39px;height:17px;background:#fff;border-top:2px solid #5a6e8e;border-left:2px solid #5a6e8e;border-right:1px solid #cdc9c4;border-bottom:1px solid #cdc9c4;border-radius:2px 3px 3px 2px;box-shadow:1px 1px 0 #fff;"></div>
<div class="t" style="left:263px;width:300px;text-align:right;top:106.00px;font-size:10px;line-height:10px;color:#000;">1</div>
<div style="left:566px;top:101px;width:105px;height:18px;background:#fff;border-top:2px solid #5a6e8e;border-left:2px solid #5a6e8e;border-right:1px solid #5a6e8e;border-bottom:1px solid #5a6e8e;border-radius:3px;box-shadow:1px 1px 0 #fff"></div>
<div style="left:656px;top:104px;width:14px;height:14px;background:#cccccc;"></div>
<svg style="position:absolute;left:660px;top:109.5px" width="8" height="5"><polygon points="0,0 7,0 3.5,4" fill="#5a6e8e"/></svg>
<div class="t" style="left:571px;top:103.50px;font-size:10px;line-height:10px;color:#000;letter-spacing:-0.4px">Jahr(e)</div>
<div style="left:526px;top:120px;width:59px;height:17px;background:#fff;border-top:2px solid #5a6e8e;border-left:2px solid #5a6e8e;border-right:1px solid #cdc9c4;border-bottom:1px solid #cdc9c4;border-radius:2px 3px 3px 2px;box-shadow:1px 1px 0 #fff;"></div>
<div class="t" style="left:591px;top:122.65px;font-size:11px;line-height:11px;color:#000;">bis</div>
<div style="left:612px;top:120px;width:59px;height:17px;background:#fff;border-top:2px solid #5a6e8e;border-left:2px solid #5a6e8e;border-right:1px solid #cdc9c4;border-bottom:1px solid #cdc9c4;border-radius:2px 3px 3px 2px;box-shadow:1px 1px 0 #fff;"></div>
<div style="left:687px;top:57px;width:70px;height:89px;background:#000;"></div>
<div style="left:688px;top:58px;width:68px;height:87px;background:#c0e0fc;"></div>
<div class="t" style="left:695px;top:63.65px;font-size:11px;line-height:11px;color:#000;">Anzeigen</div>
<svg style="position:absolute;left:695px;top:86px" width="11" height="11" shape-rendering="crispEdges"><circle cx="5" cy="5" r="4.6" fill="#fff" shape-rendering="auto"/><rect x="3" y="0" width="1" height="1" fill="#1c2840"/><rect x="4" y="0" width="1" height="1" fill="#1c2840"/><rect x="5" y="0" width="1" height="1" fill="#1c2840"/><rect x="6" y="0" width="1" height="1" fill="#1c2840"/><rect x="1" y="1" width="1" height="1" fill="#1c2840"/><rect x="2" y="1" width="1" height="1" fill="#1c2840"/><rect x="7" y="1" width="1" height="1" fill="#1c2840"/><rect x="1" y="2" width="1" height="1" fill="#1c2840"/><rect x="3" y="2" width="1" height="1" fill="#28364e"/><rect x="4" y="2" width="1" height="1" fill="#28364e"/><rect x="5" y="2" width="1" height="1" fill="#28364e"/><rect x="6" y="2" width="1" height="1" fill="#28364e"/><rect x="0" y="3" width="1" height="1" fill="#1c2840"/><rect x="2" y="3" width="1" height="1" fill="#28364e"/><rect x="3" y="3" width="1" height="1" fill="#28364e"/><rect x="4" y="3" width="1" height="1" fill="#28364e"/><rect x="5" y="3" width="1" height="1" fill="#28364e"/><rect x="6" y="3" width="1" height="1" fill="#28364e"/><rect x="7" y="3" width="1" height="1" fill="#28364e"/><rect x="10" y="3" width="1" height="1" fill="#fff"/><rect x="0" y="4" width="1" height="1" fill="#1c2840"/><rect x="2" y="4" width="1" height="1" fill="#28364e"/><rect x="3" y="4" width="1" height="1" fill="#28364e"/><rect x="4" y="4" width="1" height="1" fill="#28364e"/><rect x="5" y="4" width="1" height="1" fill="#28364e"/><rect x="6" y="4" width="1" height="1" fill="#28364e"/><rect x="7" y="4" width="1" height="1" fill="#28364e"/><rect x="10" y="4" width="1" height="1" fill="#fff"/><rect x="0" y="5" width="1" height="1" fill="#1c2840"/><rect x="2" y="5" width="1" height="1" fill="#28364e"/><rect x="3" y="5" width="1" height="1" fill="#28364e"/><rect x="4" y="5" width="1" height="1" fill="#28364e"/><rect x="5" y="5" width="1" height="1" fill="#28364e"/><rect x="6" y="5" width="1" height="1" fill="#28364e"/><rect x="7" y="5" width="1" height="1" fill="#28364e"/><rect x="10" y="5" width="1" height="1" fill="#fff"/><rect x="0" y="6" width="1" height="1" fill="#1c2840"/><rect x="2" y="6" width="1" height="1" fill="#28364e"/><rect x="3" y="6" width="1" height="1" fill="#28364e"/><rect x="4" y="6" width="1" height="1" fill="#28364e"/><rect x="5" y="6" width="1" height="1" fill="#28364e"/><rect x="6" y="6" width="1" height="1" fill="#28364e"/><rect x="7" y="6" width="1" height="1" fill="#28364e"/><rect x="10" y="6" width="1" height="1" fill="#fff"/><rect x="1" y="7" width="1" height="1" fill="#1c2840"/><rect x="3" y="7" width="1" height="1" fill="#28364e"/><rect x="4" y="7" width="1" height="1" fill="#28364e"/><rect x="5" y="7" width="1" height="1" fill="#28364e"/><rect x="6" y="7" width="1" height="1" fill="#28364e"/><rect x="9" y="7" width="1" height="1" fill="#fff"/><rect x="9" y="8" width="1" height="1" fill="#fff"/><rect x="1" y="9" width="1" height="1" fill="#fff"/><rect x="2" y="9" width="1" height="1" fill="#fff"/><rect x="3" y="9" width="1" height="1" fill="#fff"/><rect x="7" y="9" width="1" height="1" fill="#fff"/><rect x="8" y="9" width="1" height="1" fill="#fff"/><rect x="3" y="10" width="1" height="1" fill="#fff"/><rect x="4" y="10" width="1" height="1" fill="#fff"/><rect x="5" y="10" width="1" height="1" fill="#fff"/><rect x="6" y="10" width="1" height="1" fill="#fff"/></svg>
<div class="t" style="left:708px;top:87.65px;font-size:11px;line-height:11px;color:#000;">Alle</div>
<svg style="position:absolute;left:695px;top:105px" width="11" height="11" shape-rendering="crispEdges"><circle cx="5" cy="5" r="4.6" fill="#fff" shape-rendering="auto"/><rect x="3" y="0" width="1" height="1" fill="#1c2840"/><rect x="4" y="0" width="1" height="1" fill="#1c2840"/><rect x="5" y="0" width="1" height="1" fill="#1c2840"/><rect x="6" y="0" width="1" height="1" fill="#1c2840"/><rect x="1" y="1" width="1" height="1" fill="#1c2840"/><rect x="2" y="1" width="1" height="1" fill="#1c2840"/><rect x="7" y="1" width="1" height="1" fill="#1c2840"/><rect x="1" y="2" width="1" height="1" fill="#1c2840"/><rect x="0" y="3" width="1" height="1" fill="#1c2840"/><rect x="10" y="3" width="1" height="1" fill="#fff"/><rect x="0" y="4" width="1" height="1" fill="#1c2840"/><rect x="10" y="4" width="1" height="1" fill="#fff"/><rect x="0" y="5" width="1" height="1" fill="#1c2840"/><rect x="10" y="5" width="1" height="1" fill="#fff"/><rect x="0" y="6" width="1" height="1" fill="#1c2840"/><rect x="10" y="6" width="1" height="1" fill="#fff"/><rect x="1" y="7" width="1" height="1" fill="#1c2840"/><rect x="9" y="7" width="1" height="1" fill="#fff"/><rect x="9" y="8" width="1" height="1" fill="#fff"/><rect x="1" y="9" width="1" height="1" fill="#fff"/><rect x="2" y="9" width="1" height="1" fill="#fff"/><rect x="3" y="9" width="1" height="1" fill="#fff"/><rect x="7" y="9" width="1" height="1" fill="#fff"/><rect x="8" y="9" width="1" height="1" fill="#fff"/><rect x="3" y="10" width="1" height="1" fill="#fff"/><rect x="4" y="10" width="1" height="1" fill="#fff"/><rect x="5" y="10" width="1" height="1" fill="#fff"/><rect x="6" y="10" width="1" height="1" fill="#fff"/></svg>
<div class="t" style="left:708px;top:105.65px;font-size:11px;line-height:11px;color:#000;letter-spacing:0.4px">Offen</div>
<svg style="position:absolute;left:695px;top:124px" width="11" height="11" shape-rendering="crispEdges"><circle cx="5" cy="5" r="4.6" fill="#fff" shape-rendering="auto"/><rect x="3" y="0" width="1" height="1" fill="#1c2840"/><rect x="4" y="0" width="1" height="1" fill="#1c2840"/><rect x="5" y="0" width="1" height="1" fill="#1c2840"/><rect x="6" y="0" width="1" height="1" fill="#1c2840"/><rect x="1" y="1" width="1" height="1" fill="#1c2840"/><rect x="2" y="1" width="1" height="1" fill="#1c2840"/><rect x="7" y="1" width="1" height="1" fill="#1c2840"/><rect x="1" y="2" width="1" height="1" fill="#1c2840"/><rect x="0" y="3" width="1" height="1" fill="#1c2840"/><rect x="10" y="3" width="1" height="1" fill="#fff"/><rect x="0" y="4" width="1" height="1" fill="#1c2840"/><rect x="10" y="4" width="1" height="1" fill="#fff"/><rect x="0" y="5" width="1" height="1" fill="#1c2840"/><rect x="10" y="5" width="1" height="1" fill="#fff"/><rect x="0" y="6" width="1" height="1" fill="#1c2840"/><rect x="10" y="6" width="1" height="1" fill="#fff"/><rect x="1" y="7" width="1" height="1" fill="#1c2840"/><rect x="9" y="7" width="1" height="1" fill="#fff"/><rect x="9" y="8" width="1" height="1" fill="#fff"/><rect x="1" y="9" width="1" height="1" fill="#fff"/><rect x="2" y="9" width="1" height="1" fill="#fff"/><rect x="3" y="9" width="1" height="1" fill="#fff"/><rect x="7" y="9" width="1" height="1" fill="#fff"/><rect x="8" y="9" width="1" height="1" fill="#fff"/><rect x="3" y="10" width="1" height="1" fill="#fff"/><rect x="4" y="10" width="1" height="1" fill="#fff"/><rect x="5" y="10" width="1" height="1" fill="#fff"/><rect x="6" y="10" width="1" height="1" fill="#fff"/></svg>
<div class="t" style="left:708px;top:124.65px;font-size:11px;line-height:11px;color:#000;letter-spacing:-0.3px">Erledigt</div>
<div style="left:872px;top:59px;width:105px;height:20px;background:#c5c5c5;border-top:1px solid #fff;border-left:1px solid #fff;border-right:1px solid #7a8cac;border-bottom:1px solid #7a8cac;border-radius:2px;box-shadow:0 1px 0 #b4c4dc"></div>
<div class="t" style="left:872px;width:105px;text-align:center;top:64.15px;font-size:11px;line-height:11px;color:#8090ac;text-shadow:1px 1px 0 #f4f4f4;">Suchen <u>s</u>tarten</div>
<div style="left:872px;top:83px;width:105px;height:20px;background:#c5c5c5;border-top:1px solid #fff;border-left:1px solid #fff;border-right:1px solid #7a8cac;border-bottom:1px solid #7a8cac;border-radius:2px;box-shadow:0 1px 0 #b4c4dc"></div>
<div class="t" style="left:872px;width:105px;text-align:center;top:88.15px;font-size:11px;line-height:11px;color:#8090ac;text-shadow:1px 1px 0 #f4f4f4;">Abbrechen</div>
<div style="left:872px;top:107px;width:105px;height:20px;background:#c5c5c5;border-top:1px solid #fff;border-left:1px solid #fff;border-right:1px solid #5a6e8e;border-bottom:1px solid #5a6e8e;border-radius:2px;box-shadow:0 1px 0 #b4c4dc"></div>
<div class="t" style="left:872px;width:105px;text-align:center;top:112.15px;font-size:11px;line-height:11px;color:#000;">Filter lös<u>c</u>hen</div>
<div style="left:872px;top:131px;width:105px;height:20px;background:#c5c5c5;border-top:1px solid #fff;border-left:1px solid #fff;border-right:1px solid #5a6e8e;border-bottom:1px solid #5a6e8e;border-radius:2px;box-shadow:0 1px 0 #b4c4dc"></div>
<div class="t" style="left:872px;width:105px;text-align:center;top:136.15px;font-size:11px;line-height:11px;color:#000;">Filter ä<u>n</u>dern</div>
<div style="left:7px;top:168px;width:979px;height:22px;background:#d6d6d6;"></div>
<div style="left:7px;top:168px;width:98px;height:21px;background:#95a1b5;border-radius:2px 2px 0 0"></div>
<div class="t" style="left:8px;width:98px;text-align:center;top:175.15px;font-size:11px;line-height:11px;color:#000;">Ansprechpartner</div>
<div style="left:108px;top:168px;width:88px;height:21px;background:#95a1b5;border-radius:2px 2px 0 0"></div>
<div class="t" style="left:109px;width:88px;text-align:center;top:175.15px;font-size:11px;line-height:11px;color:#000;">Adressen</div>
<div style="left:199px;top:168px;width:88px;height:21px;background:#95a1b5;border-radius:2px 2px 0 0"></div>
<div class="t" style="left:200px;width:88px;text-align:center;top:175.15px;font-size:11px;line-height:11px;color:#000;">Notizen</div>
<div style="left:290px;top:168px;width:88px;height:21px;background:#95a1b5;border-radius:2px 2px 0 0"></div>
<div class="t" style="left:291px;width:88px;text-align:center;top:175.15px;font-size:11px;line-height:11px;color:#000;">Profil</div>
<div style="left:381px;top:168px;width:88px;height:21px;background:#95a1b5;border-radius:2px 2px 0 0"></div>
<div class="t" style="left:382px;width:88px;text-align:center;top:175.15px;font-size:11px;line-height:11px;color:#000;">Statistik</div>
<div style="left:472px;top:168px;width:88px;height:21px;background:#95a1b5;border-radius:2px 2px 0 0"></div>
<div class="t" style="left:473px;width:88px;text-align:center;top:175.15px;font-size:11px;line-height:11px;color:#000;">Angebot</div>
<div style="left:654px;top:168px;width:88px;height:21px;background:#95a1b5;border-radius:2px 2px 0 0"></div>
<div class="t" style="left:655px;width:88px;text-align:center;top:175.15px;font-size:11px;line-height:11px;color:#000;">Besuchsbericht</div>
<div style="left:7px;top:189px;width:979px;height:392px;background:#5a6e8e;"></div>
<div style="left:7px;top:189px;width:978px;height:391px;background:#fff;"></div>
<div style="left:8px;top:190px;width:977px;height:390px;background:#cbcbcb;"></div>
<div style="left:10px;top:192px;width:974px;height:387px;background:#d6d6d6;"></div>
<div style="left:985px;top:580px;width:1px;height:1px;background:#fff;"></div>
<div style="left:984px;top:579px;width:1px;height:1px;background:#5a6e8e;"></div>
<div style="left:985px;top:579px;width:1px;height:1px;background:#b0bccc;"></div>
<div style="left:984px;top:580px;width:1px;height:1px;background:#b0bccc;"></div>
<div style="left:563px;top:168px;width:88px;height:24px;background:#cbcbcb;border-radius:2px 2px 0 0"></div>
<div class="t" style="left:564px;width:88px;text-align:center;top:174.65px;font-size:11px;line-height:11px;color:#000;">Pixelthek</div>
<div style="left:563px;top:170px;width:1px;height:20px;background:#fff;"></div>
<div style="left:565px;top:168px;width:85px;height:1px;background:#fff;"></div>
<div style="left:564px;top:169px;width:1px;height:1px;background:#fff;"></div>
<div style="left:650px;top:170px;width:1px;height:18px;background:#5a6e8e;"></div>
<div style="left:651px;top:168px;width:3px;height:21px;background:#d6d6d6;"></div>
<div style="left:15px;top:204px;width:59px;height:19px;background:#fff;border-right:1px solid #5a6e8e;border-bottom:1px solid #5a6e8e;border-radius:1px 1px 3px 1px;box-shadow:1px 1px 0 #ececec"></div>
<div class="t" style="left:15px;width:59px;text-align:center;top:208.65px;font-size:11px;line-height:11px;color:#000;">Datum</div>
<div style="left:75px;top:204px;width:78px;height:19px;background:#fff;border-right:1px solid #5a6e8e;border-bottom:1px solid #5a6e8e;border-radius:1px 1px 3px 1px;box-shadow:1px 1px 0 #ececec"></div>
<div class="t" style="left:75px;width:78px;text-align:center;top:208.65px;font-size:11px;line-height:11px;color:#000;">Dateityp</div>
<div style="left:154px;top:204px;width:266px;height:19px;background:#fff;border-right:1px solid #5a6e8e;border-bottom:1px solid #5a6e8e;border-radius:1px 1px 3px 1px;box-shadow:1px 1px 0 #ececec"></div>
<div class="t" style="left:154px;width:266px;text-align:center;top:208.65px;font-size:11px;line-height:11px;color:#000;">Titel</div>
<div style="left:421px;top:204px;width:266px;height:19px;background:#fff;border-right:1px solid #5a6e8e;border-bottom:1px solid #5a6e8e;border-radius:1px 1px 3px 1px;box-shadow:1px 1px 0 #ececec"></div>
<div class="t" style="left:421px;width:266px;text-align:center;top:208.65px;font-size:11px;line-height:11px;color:#000;">Beschreibung</div>
<div style="left:688px;top:204px;width:238px;height:19px;background:#fff;border-right:1px solid #5a6e8e;border-bottom:1px solid #5a6e8e;border-radius:1px 1px 3px 1px;box-shadow:1px 1px 0 #ececec"></div>
<div class="t" style="left:688px;width:238px;text-align:center;top:208.65px;font-size:11px;line-height:11px;color:#000;">Format</div>
<div style="left:15px;top:225px;width:59px;height:18px;background:#e0ffff;border-top:2px solid #5a6e8e;border-left:2px solid #5a6e8e;border-right:1px solid #c8c8c8;border-bottom:1px solid #c8c8c8;border-radius:2px 3px 3px 2px;box-shadow:1px 1px 0 #fff;"></div>
<div style="left:75px;top:225px;width:78px;height:18px;background:#e0ffff;border-top:2px solid #5a6e8e;border-left:2px solid #5a6e8e;border-right:1px solid #c8c8c8;border-bottom:1px solid #c8c8c8;border-radius:2px 3px 3px 2px;box-shadow:1px 1px 0 #fff;"></div>
<div style="left:154px;top:225px;width:266px;height:18px;background:#e0ffff;border-top:2px solid #5a6e8e;border-left:2px solid #5a6e8e;border-right:1px solid #c8c8c8;border-bottom:1px solid #c8c8c8;border-radius:2px 3px 3px 2px;box-shadow:1px 1px 0 #fff;"></div>
<div style="left:421px;top:225px;width:266px;height:18px;background:#e0ffff;border-top:2px solid #5a6e8e;border-left:2px solid #5a6e8e;border-right:1px solid #c8c8c8;border-bottom:1px solid #c8c8c8;border-radius:2px 3px 3px 2px;box-shadow:1px 1px 0 #fff;"></div>
<div style="left:688px;top:225px;width:238px;height:18px;background:#e0ffff;border-top:2px solid #5a6e8e;border-left:2px solid #5a6e8e;border-right:1px solid #c8c8c8;border-bottom:1px solid #c8c8c8;border-radius:2px 3px 3px 2px;box-shadow:1px 1px 0 #fff;"></div>
<svg style="position:absolute;left:934px;top:226px" width="16" height="17" shape-rendering="crispEdges"><rect x="0" y="0" width="16" height="17" fill="#fff"/><rect x="1" y="1" width="14" height="13" fill="#fafafa"/><rect x="1" y="14" width="14" height="2" fill="#c8c8c8"/><rect x="1" y="16" width="15" height="1" fill="#5a6e8e"/><rect x="15" y="1" width="1" height="16" fill="#5a6e8e"/><rect x="2" y="3" width="4" height="1" fill="#ff6a10"/><rect x="2" y="5" width="4" height="1" fill="#ff6a10"/><rect x="2" y="7" width="3" height="1" fill="#ff6a10"/><rect x="2" y="9" width="3" height="1" fill="#ff6a10"/><rect x="2" y="11" width="5" height="1" fill="#ff6a10"/><rect x="7" y="9" width="2" height="1" fill="#ff6a10"/><rect x="7" y="3" width="4" height="5" fill="#48b4f4"/><rect x="13" y="2" width="1" height="6" fill="#000"/><rect x="11" y="8" width="1" height="1" fill="#000"/><rect x="13" y="8" width="1" height="1" fill="#000"/><rect x="10" y="9" width="1" height="1" fill="#000"/><rect x="12" y="9" width="1" height="1" fill="#000"/><rect x="9" y="10" width="1" height="1" fill="#000"/><rect x="11" y="10" width="1" height="1" fill="#000"/><rect x="13" y="10" width="1" height="1" fill="#000"/><rect x="8" y="11" width="1" height="1" fill="#000"/><rect x="10" y="11" width="1" height="1" fill="#000"/><rect x="12" y="11" width="1" height="1" fill="#000"/><rect x="9" y="12" width="1" height="1" fill="#000"/><rect x="11" y="12" width="1" height="1" fill="#000"/><rect x="13" y="12" width="1" height="1" fill="#000"/><rect x="8" y="13" width="1" height="1" fill="#000"/><rect x="10" y="13" width="1" height="1" fill="#000"/><rect x="12" y="13" width="1" height="1" fill="#000"/><rect x="13" y="9" width="1" height="1" fill="#000"/><rect x="13" y="12" width="1" height="2" fill="#000"/></svg>
<div style="left:15px;top:244px;width:59px;height:18px;background:#fff;border-top:2px solid #5a6e8e;border-left:2px solid #5a6e8e;border-right:1px solid #c8c8c8;border-bottom:1px solid #c8c8c8;border-radius:2px 3px 3px 2px;box-shadow:1px 1px 0 #fff;"></div>
<div style="left:75px;top:244px;width:78px;height:18px;background:#fff;border-top:2px solid #5a6e8e;border-left:2px solid #5a6e8e;border-right:1px solid #c8c8c8;border-bottom:1px solid #c8c8c8;border-radius:2px 3px 3px 2px;box-shadow:1px 1px 0 #fff;"></div>
<div style="left:154px;top:244px;width:266px;height:18px;background:#fff;border-top:2px solid #5a6e8e;border-left:2px solid #5a6e8e;border-right:1px solid #c8c8c8;border-bottom:1px solid #c8c8c8;border-radius:2px 3px 3px 2px;box-shadow:1px 1px 0 #fff;"></div>
<div style="left:421px;top:244px;width:266px;height:18px;background:#fff;border-top:2px solid #5a6e8e;border-left:2px solid #5a6e8e;border-right:1px solid #c8c8c8;border-bottom:1px solid #c8c8c8;border-radius:2px 3px 3px 2px;box-shadow:1px 1px 0 #fff;"></div>
<div style="left:688px;top:244px;width:238px;height:18px;background:#fff;border-top:2px solid #5a6e8e;border-left:2px solid #5a6e8e;border-right:1px solid #c8c8c8;border-bottom:1px solid #c8c8c8;border-radius:2px 3px 3px 2px;box-shadow:1px 1px 0 #fff;"></div>
<svg style="position:absolute;left:934px;top:245px" width="16" height="17" shape-rendering="crispEdges"><rect x="0" y="0" width="16" height="17" fill="#fff"/><rect x="1" y="1" width="14" height="13" fill="#f4f4f4"/><rect x="1" y="14" width="14" height="2" fill="#c8c8c8"/><rect x="1" y="16" width="15" height="1" fill="#5a6e8e"/><rect x="15" y="1" width="1" height="16" fill="#5a6e8e"/><rect x="2" y="3" width="4" height="1" fill="#b4b4b4"/><rect x="2" y="5" width="4" height="1" fill="#b4b4b4"/><rect x="2" y="7" width="3" height="1" fill="#b4b4b4"/><rect x="2" y="9" width="3" height="1" fill="#b4b4b4"/><rect x="2" y="11" width="5" height="1" fill="#b4b4b4"/><rect x="7" y="9" width="2" height="1" fill="#b4b4b4"/><rect x="7" y="3" width="4" height="5" fill="#d4d4d4"/><rect x="13" y="2" width="1" height="6" fill="#a4a4a4"/><rect x="11" y="8" width="1" height="1" fill="#a4a4a4"/><rect x="13" y="8" width="1" height="1" fill="#a4a4a4"/><rect x="10" y="9" width="1" height="1" fill="#a4a4a4"/><rect x="12" y="9" width="1" height="1" fill="#a4a4a4"/><rect x="9" y="10" width="1" height="1" fill="#a4a4a4"/><rect x="11" y="10" width="1" height="1" fill="#a4a4a4"/><rect x="13" y="10" width="1" height="1" fill="#a4a4a4"/><rect x="8" y="11" width="1" height="1" fill="#a4a4a4"/><rect x="10" y="11" width="1" height="1" fill="#a4a4a4"/><rect x="12" y="11" width="1" height="1" fill="#a4a4a4"/><rect x="9" y="12" width="1" height="1" fill="#a4a4a4"/><rect x="11" y="12" width="1" height="1" fill="#a4a4a4"/><rect x="13" y="12" width="1" height="1" fill="#a4a4a4"/><rect x="8" y="13" width="1" height="1" fill="#a4a4a4"/><rect x="10" y="13" width="1" height="1" fill="#a4a4a4"/><rect x="12" y="13" width="1" height="1" fill="#a4a4a4"/><rect x="13" y="9" width="1" height="1" fill="#a4a4a4"/><rect x="13" y="12" width="1" height="2" fill="#a4a4a4"/></svg>
<div style="left:15px;top:262px;width:59px;height:18px;background:#fff;border-top:2px solid #5a6e8e;border-left:2px solid #5a6e8e;border-right:1px solid #c8c8c8;border-bottom:1px solid #c8c8c8;border-radius:2px 3px 3px 2px;box-shadow:1px 1px 0 #fff;"></div>
<div style="left:75px;top:262px;width:78px;height:18px;background:#fff;border-top:2px solid #5a6e8e;border-left:2px solid #5a6e8e;border-right:1px solid #c8c8c8;border-bottom:1px solid #c8c8c8;border-radius:2px 3px 3px 2px;box-shadow:1px 1px 0 #fff;"></div>
<div style="left:154px;top:262px;width:266px;height:18px;background:#fff;border-top:2px solid #5a6e8e;border-left:2px solid #5a6e8e;border-right:1px solid #c8c8c8;border-bottom:1px solid #c8c8c8;border-radius:2px 3px 3px 2px;box-shadow:1px 1px 0 #fff;"></div>
<div style="left:421px;top:262px;width:266px;height:18px;background:#fff;border-top:2px solid #5a6e8e;border-left:2px solid #5a6e8e;border-right:1px solid #c8c8c8;border-bottom:1px solid #c8c8c8;border-radius:2px 3px 3px 2px;box-shadow:1px 1px 0 #fff;"></div>
<div style="left:688px;top:262px;width:238px;height:18px;background:#fff;border-top:2px solid #5a6e8e;border-left:2px solid #5a6e8e;border-right:1px solid #c8c8c8;border-bottom:1px solid #c8c8c8;border-radius:2px 3px 3px 2px;box-shadow:1px 1px 0 #fff;"></div>
<svg style="position:absolute;left:934px;top:263px" width="16" height="17" shape-rendering="crispEdges"><rect x="0" y="0" width="16" height="17" fill="#fff"/><rect x="1" y="1" width="14" height="13" fill="#f4f4f4"/><rect x="1" y="14" width="14" height="2" fill="#c8c8c8"/><rect x="1" y="16" width="15" height="1" fill="#5a6e8e"/><rect x="15" y="1" width="1" height="16" fill="#5a6e8e"/><rect x="2" y="3" width="4" height="1" fill="#b4b4b4"/><rect x="2" y="5" width="4" height="1" fill="#b4b4b4"/><rect x="2" y="7" width="3" height="1" fill="#b4b4b4"/><rect x="2" y="9" width="3" height="1" fill="#b4b4b4"/><rect x="2" y="11" width="5" height="1" fill="#b4b4b4"/><rect x="7" y="9" width="2" height="1" fill="#b4b4b4"/><rect x="7" y="3" width="4" height="5" fill="#d4d4d4"/><rect x="13" y="2" width="1" height="6" fill="#a4a4a4"/><rect x="11" y="8" width="1" height="1" fill="#a4a4a4"/><rect x="13" y="8" width="1" height="1" fill="#a4a4a4"/><rect x="10" y="9" width="1" height="1" fill="#a4a4a4"/><rect x="12" y="9" width="1" height="1" fill="#a4a4a4"/><rect x="9" y="10" width="1" height="1" fill="#a4a4a4"/><rect x="11" y="10" width="1" height="1" fill="#a4a4a4"/><rect x="13" y="10" width="1" height="1" fill="#a4a4a4"/><rect x="8" y="11" width="1" height="1" fill="#a4a4a4"/><rect x="10" y="11" width="1" height="1" fill="#a4a4a4"/><rect x="12" y="11" width="1" height="1" fill="#a4a4a4"/><rect x="9" y="12" width="1" height="1" fill="#a4a4a4"/><rect x="11" y="12" width="1" height="1" fill="#a4a4a4"/><rect x="13" y="12" width="1" height="1" fill="#a4a4a4"/><rect x="8" y="13" width="1" height="1" fill="#a4a4a4"/><rect x="10" y="13" width="1" height="1" fill="#a4a4a4"/><rect x="12" y="13" width="1" height="1" fill="#a4a4a4"/><rect x="13" y="9" width="1" height="1" fill="#a4a4a4"/><rect x="13" y="12" width="1" height="2" fill="#a4a4a4"/></svg>
<div style="left:15px;top:281px;width:59px;height:18px;background:#fff;border-top:2px solid #5a6e8e;border-left:2px solid #5a6e8e;border-right:1px solid #c8c8c8;border-bottom:1px solid #c8c8c8;border-radius:2px 3px 3px 2px;box-shadow:1px 1px 0 #fff;"></div>
<div style="left:75px;top:281px;width:78px;height:18px;background:#fff;border-top:2px solid #5a6e8e;border-left:2px solid #5a6e8e;border-right:1px solid #c8c8c8;border-bottom:1px solid #c8c8c8;border-radius:2px 3px 3px 2px;box-shadow:1px 1px 0 #fff;"></div>
<div style="left:154px;top:281px;width:266px;height:18px;background:#fff;border-top:2px solid #5a6e8e;border-left:2px solid #5a6e8e;border-right:1px solid #c8c8c8;border-bottom:1px solid #c8c8c8;border-radius:2px 3px 3px 2px;box-shadow:1px 1px 0 #fff;"></div>
<div style="left:421px;top:281px;width:266px;height:18px;background:#fff;border-top:2px solid #5a6e8e;border-left:2px solid #5a6e8e;border-right:1px solid #c8c8c8;border-bottom:1px solid #c8c8c8;border-radius:2px 3px 3px 2px;box-shadow:1px 1px 0 #fff;"></div>
<div style="left:688px;top:281px;width:238px;height:18px;background:#fff;border-top:2px solid #5a6e8e;border-left:2px solid #5a6e8e;border-right:1px solid #c8c8c8;border-bottom:1px solid #c8c8c8;border-radius:2px 3px 3px 2px;box-shadow:1px 1px 0 #fff;"></div>
<svg style="position:absolute;left:934px;top:282px" width="16" height="17" shape-rendering="crispEdges"><rect x="0" y="0" width="16" height="17" fill="#fff"/><rect x="1" y="1" width="14" height="13" fill="#f4f4f4"/><rect x="1" y="14" width="14" height="2" fill="#c8c8c8"/><rect x="1" y="16" width="15" height="1" fill="#5a6e8e"/><rect x="15" y="1" width="1" height="16" fill="#5a6e8e"/><rect x="2" y="3" width="4" height="1" fill="#b4b4b4"/><rect x="2" y="5" width="4" height="1" fill="#b4b4b4"/><rect x="2" y="7" width="3" height="1" fill="#b4b4b4"/><rect x="2" y="9" width="3" height="1" fill="#b4b4b4"/><rect x="2" y="11" width="5" height="1" fill="#b4b4b4"/><rect x="7" y="9" width="2" height="1" fill="#b4b4b4"/><rect x="7" y="3" width="4" height="5" fill="#d4d4d4"/><rect x="13" y="2" width="1" height="6" fill="#a4a4a4"/><rect x="11" y="8" width="1" height="1" fill="#a4a4a4"/><rect x="13" y="8" width="1" height="1" fill="#a4a4a4"/><rect x="10" y="9" width="1" height="1" fill="#a4a4a4"/><rect x="12" y="9" width="1" height="1" fill="#a4a4a4"/><rect x="9" y="10" width="1" height="1" fill="#a4a4a4"/><rect x="11" y="10" width="1" height="1" fill="#a4a4a4"/><rect x="13" y="10" width="1" height="1" fill="#a4a4a4"/><rect x="8" y="11" width="1" height="1" fill="#a4a4a4"/><rect x="10" y="11" width="1" height="1" fill="#a4a4a4"/><rect x="12" y="11" width="1" height="1" fill="#a4a4a4"/><rect x="9" y="12" width="1" height="1" fill="#a4a4a4"/><rect x="11" y="12" width="1" height="1" fill="#a4a4a4"/><rect x="13" y="12" width="1" height="1" fill="#a4a4a4"/><rect x="8" y="13" width="1" height="1" fill="#a4a4a4"/><rect x="10" y="13" width="1" height="1" fill="#a4a4a4"/><rect x="12" y="13" width="1" height="1" fill="#a4a4a4"/><rect x="13" y="9" width="1" height="1" fill="#a4a4a4"/><rect x="13" y="12" width="1" height="2" fill="#a4a4a4"/></svg>
<div style="left:15px;top:300px;width:59px;height:18px;background:#fff;border-top:2px solid #5a6e8e;border-left:2px solid #5a6e8e;border-right:1px solid #c8c8c8;border-bottom:1px solid #c8c8c8;border-radius:2px 3px 3px 2px;box-shadow:1px 1px 0 #fff;"></div>
<div style="left:75px;top:300px;width:78px;height:18px;background:#fff;border-top:2px solid #5a6e8e;border-left:2px solid #5a6e8e;border-right:1px solid #c8c8c8;border-bottom:1px solid #c8c8c8;border-radius:2px 3px 3px 2px;box-shadow:1px 1px 0 #fff;"></div>
<div style="left:154px;top:300px;width:266px;height:18px;background:#fff;border-top:2px solid #5a6e8e;border-left:2px solid #5a6e8e;border-right:1px solid #c8c8c8;border-bottom:1px solid #c8c8c8;border-radius:2px 3px 3px 2px;box-shadow:1px 1px 0 #fff;"></div>
<div style="left:421px;top:300px;width:266px;height:18px;background:#fff;border-top:2px solid #5a6e8e;border-left:2px solid #5a6e8e;border-right:1px solid #c8c8c8;border-bottom:1px solid #c8c8c8;border-radius:2px 3px 3px 2px;box-shadow:1px 1px 0 #fff;"></div>
<div style="left:688px;top:300px;width:238px;height:18px;background:#fff;border-top:2px solid #5a6e8e;border-left:2px solid #5a6e8e;border-right:1px solid #c8c8c8;border-bottom:1px solid #c8c8c8;border-radius:2px 3px 3px 2px;box-shadow:1px 1px 0 #fff;"></div>
<svg style="position:absolute;left:934px;top:301px" width="16" height="17" shape-rendering="crispEdges"><rect x="0" y="0" width="16" height="17" fill="#fff"/><rect x="1" y="1" width="14" height="13" fill="#f4f4f4"/><rect x="1" y="14" width="14" height="2" fill="#c8c8c8"/><rect x="1" y="16" width="15" height="1" fill="#5a6e8e"/><rect x="15" y="1" width="1" height="16" fill="#5a6e8e"/><rect x="2" y="3" width="4" height="1" fill="#b4b4b4"/><rect x="2" y="5" width="4" height="1" fill="#b4b4b4"/><rect x="2" y="7" width="3" height="1" fill="#b4b4b4"/><rect x="2" y="9" width="3" height="1" fill="#b4b4b4"/><rect x="2" y="11" width="5" height="1" fill="#b4b4b4"/><rect x="7" y="9" width="2" height="1" fill="#b4b4b4"/><rect x="7" y="3" width="4" height="5" fill="#d4d4d4"/><rect x="13" y="2" width="1" height="6" fill="#a4a4a4"/><rect x="11" y="8" width="1" height="1" fill="#a4a4a4"/><rect x="13" y="8" width="1" height="1" fill="#a4a4a4"/><rect x="10" y="9" width="1" height="1" fill="#a4a4a4"/><rect x="12" y="9" width="1" height="1" fill="#a4a4a4"/><rect x="9" y="10" width="1" height="1" fill="#a4a4a4"/><rect x="11" y="10" width="1" height="1" fill="#a4a4a4"/><rect x="13" y="10" width="1" height="1" fill="#a4a4a4"/><rect x="8" y="11" width="1" height="1" fill="#a4a4a4"/><rect x="10" y="11" width="1" height="1" fill="#a4a4a4"/><rect x="12" y="11" width="1" height="1" fill="#a4a4a4"/><rect x="9" y="12" width="1" height="1" fill="#a4a4a4"/><rect x="11" y="12" width="1" height="1" fill="#a4a4a4"/><rect x="13" y="12" width="1" height="1" fill="#a4a4a4"/><rect x="8" y="13" width="1" height="1" fill="#a4a4a4"/><rect x="10" y="13" width="1" height="1" fill="#a4a4a4"/><rect x="12" y="13" width="1" height="1" fill="#a4a4a4"/><rect x="13" y="9" width="1" height="1" fill="#a4a4a4"/><rect x="13" y="12" width="1" height="2" fill="#a4a4a4"/></svg>
<div style="left:15px;top:319px;width:59px;height:18px;background:#fff;border-top:2px solid #5a6e8e;border-left:2px solid #5a6e8e;border-right:1px solid #c8c8c8;border-bottom:1px solid #c8c8c8;border-radius:2px 3px 3px 2px;box-shadow:1px 1px 0 #fff;"></div>
<div style="left:75px;top:319px;width:78px;height:18px;background:#fff;border-top:2px solid #5a6e8e;border-left:2px solid #5a6e8e;border-right:1px solid #c8c8c8;border-bottom:1px solid #c8c8c8;border-radius:2px 3px 3px 2px;box-shadow:1px 1px 0 #fff;"></div>
<div style="left:154px;top:319px;width:266px;height:18px;background:#fff;border-top:2px solid #5a6e8e;border-left:2px solid #5a6e8e;border-right:1px solid #c8c8c8;border-bottom:1px solid #c8c8c8;border-radius:2px 3px 3px 2px;box-shadow:1px 1px 0 #fff;"></div>
<div style="left:421px;top:319px;width:266px;height:18px;background:#fff;border-top:2px solid #5a6e8e;border-left:2px solid #5a6e8e;border-right:1px solid #c8c8c8;border-bottom:1px solid #c8c8c8;border-radius:2px 3px 3px 2px;box-shadow:1px 1px 0 #fff;"></div>
<div style="left:688px;top:319px;width:238px;height:18px;background:#fff;border-top:2px solid #5a6e8e;border-left:2px solid #5a6e8e;border-right:1px solid #c8c8c8;border-bottom:1px solid #c8c8c8;border-radius:2px 3px 3px 2px;box-shadow:1px 1px 0 #fff;"></div>
<svg style="position:absolute;left:934px;top:320px" width="16" height="17" shape-rendering="crispEdges"><rect x="0" y="0" width="16" height="17" fill="#fff"/><rect x="1" y="1" width="14" height="13" fill="#f4f4f4"/><rect x="1" y="14" width="14" height="2" fill="#c8c8c8"/><rect x="1" y="16" width="15" height="1" fill="#5a6e8e"/><rect x="15" y="1" width="1" height="16" fill="#5a6e8e"/><rect x="2" y="3" width="4" height="1" fill="#b4b4b4"/><rect x="2" y="5" width="4" height="1" fill="#b4b4b4"/><rect x="2" y="7" width="3" height="1" fill="#b4b4b4"/><rect x="2" y="9" width="3" height="1" fill="#b4b4b4"/><rect x="2" y="11" width="5" height="1" fill="#b4b4b4"/><rect x="7" y="9" width="2" height="1" fill="#b4b4b4"/><rect x="7" y="3" width="4" height="5" fill="#d4d4d4"/><rect x="13" y="2" width="1" height="6" fill="#a4a4a4"/><rect x="11" y="8" width="1" height="1" fill="#a4a4a4"/><rect x="13" y="8" width="1" height="1" fill="#a4a4a4"/><rect x="10" y="9" width="1" height="1" fill="#a4a4a4"/><rect x="12" y="9" width="1" height="1" fill="#a4a4a4"/><rect x="9" y="10" width="1" height="1" fill="#a4a4a4"/><rect x="11" y="10" width="1" height="1" fill="#a4a4a4"/><rect x="13" y="10" width="1" height="1" fill="#a4a4a4"/><rect x="8" y="11" width="1" height="1" fill="#a4a4a4"/><rect x="10" y="11" width="1" height="1" fill="#a4a4a4"/><rect x="12" y="11" width="1" height="1" fill="#a4a4a4"/><rect x="9" y="12" width="1" height="1" fill="#a4a4a4"/><rect x="11" y="12" width="1" height="1" fill="#a4a4a4"/><rect x="13" y="12" width="1" height="1" fill="#a4a4a4"/><rect x="8" y="13" width="1" height="1" fill="#a4a4a4"/><rect x="10" y="13" width="1" height="1" fill="#a4a4a4"/><rect x="12" y="13" width="1" height="1" fill="#a4a4a4"/><rect x="13" y="9" width="1" height="1" fill="#a4a4a4"/><rect x="13" y="12" width="1" height="2" fill="#a4a4a4"/></svg>
<div style="left:15px;top:337px;width:59px;height:18px;background:#fff;border-top:2px solid #5a6e8e;border-left:2px solid #5a6e8e;border-right:1px solid #c8c8c8;border-bottom:1px solid #c8c8c8;border-radius:2px 3px 3px 2px;box-shadow:1px 1px 0 #fff;"></div>
<div style="left:75px;top:337px;width:78px;height:18px;background:#fff;border-top:2px solid #5a6e8e;border-left:2px solid #5a6e8e;border-right:1px solid #c8c8c8;border-bottom:1px solid #c8c8c8;border-radius:2px 3px 3px 2px;box-shadow:1px 1px 0 #fff;"></div>
<div style="left:154px;top:337px;width:266px;height:18px;background:#fff;border-top:2px solid #5a6e8e;border-left:2px solid #5a6e8e;border-right:1px solid #c8c8c8;border-bottom:1px solid #c8c8c8;border-radius:2px 3px 3px 2px;box-shadow:1px 1px 0 #fff;"></div>
<div style="left:421px;top:337px;width:266px;height:18px;background:#fff;border-top:2px solid #5a6e8e;border-left:2px solid #5a6e8e;border-right:1px solid #c8c8c8;border-bottom:1px solid #c8c8c8;border-radius:2px 3px 3px 2px;box-shadow:1px 1px 0 #fff;"></div>
<div style="left:688px;top:337px;width:238px;height:18px;background:#fff;border-top:2px solid #5a6e8e;border-left:2px solid #5a6e8e;border-right:1px solid #c8c8c8;border-bottom:1px solid #c8c8c8;border-radius:2px 3px 3px 2px;box-shadow:1px 1px 0 #fff;"></div>
<svg style="position:absolute;left:934px;top:338px" width="16" height="17" shape-rendering="crispEdges"><rect x="0" y="0" width="16" height="17" fill="#fff"/><rect x="1" y="1" width="14" height="13" fill="#f4f4f4"/><rect x="1" y="14" width="14" height="2" fill="#c8c8c8"/><rect x="1" y="16" width="15" height="1" fill="#5a6e8e"/><rect x="15" y="1" width="1" height="16" fill="#5a6e8e"/><rect x="2" y="3" width="4" height="1" fill="#b4b4b4"/><rect x="2" y="5" width="4" height="1" fill="#b4b4b4"/><rect x="2" y="7" width="3" height="1" fill="#b4b4b4"/><rect x="2" y="9" width="3" height="1" fill="#b4b4b4"/><rect x="2" y="11" width="5" height="1" fill="#b4b4b4"/><rect x="7" y="9" width="2" height="1" fill="#b4b4b4"/><rect x="7" y="3" width="4" height="5" fill="#d4d4d4"/><rect x="13" y="2" width="1" height="6" fill="#a4a4a4"/><rect x="11" y="8" width="1" height="1" fill="#a4a4a4"/><rect x="13" y="8" width="1" height="1" fill="#a4a4a4"/><rect x="10" y="9" width="1" height="1" fill="#a4a4a4"/><rect x="12" y="9" width="1" height="1" fill="#a4a4a4"/><rect x="9" y="10" width="1" height="1" fill="#a4a4a4"/><rect x="11" y="10" width="1" height="1" fill="#a4a4a4"/><rect x="13" y="10" width="1" height="1" fill="#a4a4a4"/><rect x="8" y="11" width="1" height="1" fill="#a4a4a4"/><rect x="10" y="11" width="1" height="1" fill="#a4a4a4"/><rect x="12" y="11" width="1" height="1" fill="#a4a4a4"/><rect x="9" y="12" width="1" height="1" fill="#a4a4a4"/><rect x="11" y="12" width="1" height="1" fill="#a4a4a4"/><rect x="13" y="12" width="1" height="1" fill="#a4a4a4"/><rect x="8" y="13" width="1" height="1" fill="#a4a4a4"/><rect x="10" y="13" width="1" height="1" fill="#a4a4a4"/><rect x="12" y="13" width="1" height="1" fill="#a4a4a4"/><rect x="13" y="9" width="1" height="1" fill="#a4a4a4"/><rect x="13" y="12" width="1" height="2" fill="#a4a4a4"/></svg>
<div style="left:15px;top:356px;width:59px;height:18px;background:#fff;border-top:2px solid #5a6e8e;border-left:2px solid #5a6e8e;border-right:1px solid #c8c8c8;border-bottom:1px solid #c8c8c8;border-radius:2px 3px 3px 2px;box-shadow:1px 1px 0 #fff;"></div>
<div style="left:75px;top:356px;width:78px;height:18px;background:#fff;border-top:2px solid #5a6e8e;border-left:2px solid #5a6e8e;border-right:1px solid #c8c8c8;border-bottom:1px solid #c8c8c8;border-radius:2px 3px 3px 2px;box-shadow:1px 1px 0 #fff;"></div>
<div style="left:154px;top:356px;width:266px;height:18px;background:#fff;border-top:2px solid #5a6e8e;border-left:2px solid #5a6e8e;border-right:1px solid #c8c8c8;border-bottom:1px solid #c8c8c8;border-radius:2px 3px 3px 2px;box-shadow:1px 1px 0 #fff;"></div>
<div style="left:421px;top:356px;width:266px;height:18px;background:#fff;border-top:2px solid #5a6e8e;border-left:2px solid #5a6e8e;border-right:1px solid #c8c8c8;border-bottom:1px solid #c8c8c8;border-radius:2px 3px 3px 2px;box-shadow:1px 1px 0 #fff;"></div>
<div style="left:688px;top:356px;width:238px;height:18px;background:#fff;border-top:2px solid #5a6e8e;border-left:2px solid #5a6e8e;border-right:1px solid #c8c8c8;border-bottom:1px solid #c8c8c8;border-radius:2px 3px 3px 2px;box-shadow:1px 1px 0 #fff;"></div>
<svg style="position:absolute;left:934px;top:357px" width="16" height="17" shape-rendering="crispEdges"><rect x="0" y="0" width="16" height="17" fill="#fff"/><rect x="1" y="1" width="14" height="13" fill="#f4f4f4"/><rect x="1" y="14" width="14" height="2" fill="#c8c8c8"/><rect x="1" y="16" width="15" height="1" fill="#5a6e8e"/><rect x="15" y="1" width="1" height="16" fill="#5a6e8e"/><rect x="2" y="3" width="4" height="1" fill="#b4b4b4"/><rect x="2" y="5" width="4" height="1" fill="#b4b4b4"/><rect x="2" y="7" width="3" height="1" fill="#b4b4b4"/><rect x="2" y="9" width="3" height="1" fill="#b4b4b4"/><rect x="2" y="11" width="5" height="1" fill="#b4b4b4"/><rect x="7" y="9" width="2" height="1" fill="#b4b4b4"/><rect x="7" y="3" width="4" height="5" fill="#d4d4d4"/><rect x="13" y="2" width="1" height="6" fill="#a4a4a4"/><rect x="11" y="8" width="1" height="1" fill="#a4a4a4"/><rect x="13" y="8" width="1" height="1" fill="#a4a4a4"/><rect x="10" y="9" width="1" height="1" fill="#a4a4a4"/><rect x="12" y="9" width="1" height="1" fill="#a4a4a4"/><rect x="9" y="10" width="1" height="1" fill="#a4a4a4"/><rect x="11" y="10" width="1" height="1" fill="#a4a4a4"/><rect x="13" y="10" width="1" height="1" fill="#a4a4a4"/><rect x="8" y="11" width="1" height="1" fill="#a4a4a4"/><rect x="10" y="11" width="1" height="1" fill="#a4a4a4"/><rect x="12" y="11" width="1" height="1" fill="#a4a4a4"/><rect x="9" y="12" width="1" height="1" fill="#a4a4a4"/><rect x="11" y="12" width="1" height="1" fill="#a4a4a4"/><rect x="13" y="12" width="1" height="1" fill="#a4a4a4"/><rect x="8" y="13" width="1" height="1" fill="#a4a4a4"/><rect x="10" y="13" width="1" height="1" fill="#a4a4a4"/><rect x="12" y="13" width="1" height="1" fill="#a4a4a4"/><rect x="13" y="9" width="1" height="1" fill="#a4a4a4"/><rect x="13" y="12" width="1" height="2" fill="#a4a4a4"/></svg>
<div style="left:15px;top:375px;width:59px;height:18px;background:#fff;border-top:2px solid #5a6e8e;border-left:2px solid #5a6e8e;border-right:1px solid #c8c8c8;border-bottom:1px solid #c8c8c8;border-radius:2px 3px 3px 2px;box-shadow:1px 1px 0 #fff;"></div>
<div style="left:75px;top:375px;width:78px;height:18px;background:#fff;border-top:2px solid #5a6e8e;border-left:2px solid #5a6e8e;border-right:1px solid #c8c8c8;border-bottom:1px solid #c8c8c8;border-radius:2px 3px 3px 2px;box-shadow:1px 1px 0 #fff;"></div>
<div style="left:154px;top:375px;width:266px;height:18px;background:#fff;border-top:2px solid #5a6e8e;border-left:2px solid #5a6e8e;border-right:1px solid #c8c8c8;border-bottom:1px solid #c8c8c8;border-radius:2px 3px 3px 2px;box-shadow:1px 1px 0 #fff;"></div>
<div style="left:421px;top:375px;width:266px;height:18px;background:#fff;border-top:2px solid #5a6e8e;border-left:2px solid #5a6e8e;border-right:1px solid #c8c8c8;border-bottom:1px solid #c8c8c8;border-radius:2px 3px 3px 2px;box-shadow:1px 1px 0 #fff;"></div>
<div style="left:688px;top:375px;width:238px;height:18px;background:#fff;border-top:2px solid #5a6e8e;border-left:2px solid #5a6e8e;border-right:1px solid #c8c8c8;border-bottom:1px solid #c8c8c8;border-radius:2px 3px 3px 2px;box-shadow:1px 1px 0 #fff;"></div>
<svg style="position:absolute;left:934px;top:376px" width="16" height="17" shape-rendering="crispEdges"><rect x="0" y="0" width="16" height="17" fill="#fff"/><rect x="1" y="1" width="14" height="13" fill="#f4f4f4"/><rect x="1" y="14" width="14" height="2" fill="#c8c8c8"/><rect x="1" y="16" width="15" height="1" fill="#5a6e8e"/><rect x="15" y="1" width="1" height="16" fill="#5a6e8e"/><rect x="2" y="3" width="4" height="1" fill="#b4b4b4"/><rect x="2" y="5" width="4" height="1" fill="#b4b4b4"/><rect x="2" y="7" width="3" height="1" fill="#b4b4b4"/><rect x="2" y="9" width="3" height="1" fill="#b4b4b4"/><rect x="2" y="11" width="5" height="1" fill="#b4b4b4"/><rect x="7" y="9" width="2" height="1" fill="#b4b4b4"/><rect x="7" y="3" width="4" height="5" fill="#d4d4d4"/><rect x="13" y="2" width="1" height="6" fill="#a4a4a4"/><rect x="11" y="8" width="1" height="1" fill="#a4a4a4"/><rect x="13" y="8" width="1" height="1" fill="#a4a4a4"/><rect x="10" y="9" width="1" height="1" fill="#a4a4a4"/><rect x="12" y="9" width="1" height="1" fill="#a4a4a4"/><rect x="9" y="10" width="1" height="1" fill="#a4a4a4"/><rect x="11" y="10" width="1" height="1" fill="#a4a4a4"/><rect x="13" y="10" width="1" height="1" fill="#a4a4a4"/><rect x="8" y="11" width="1" height="1" fill="#a4a4a4"/><rect x="10" y="11" width="1" height="1" fill="#a4a4a4"/><rect x="12" y="11" width="1" height="1" fill="#a4a4a4"/><rect x="9" y="12" width="1" height="1" fill="#a4a4a4"/><rect x="11" y="12" width="1" height="1" fill="#a4a4a4"/><rect x="13" y="12" width="1" height="1" fill="#a4a4a4"/><rect x="8" y="13" width="1" height="1" fill="#a4a4a4"/><rect x="10" y="13" width="1" height="1" fill="#a4a4a4"/><rect x="12" y="13" width="1" height="1" fill="#a4a4a4"/><rect x="13" y="9" width="1" height="1" fill="#a4a4a4"/><rect x="13" y="12" width="1" height="2" fill="#a4a4a4"/></svg>
<div style="left:15px;top:393px;width:59px;height:18px;background:#fff;border-top:2px solid #5a6e8e;border-left:2px solid #5a6e8e;border-right:1px solid #c8c8c8;border-bottom:1px solid #c8c8c8;border-radius:2px 3px 3px 2px;box-shadow:1px 1px 0 #fff;"></div>
<div style="left:75px;top:393px;width:78px;height:18px;background:#fff;border-top:2px solid #5a6e8e;border-left:2px solid #5a6e8e;border-right:1px solid #c8c8c8;border-bottom:1px solid #c8c8c8;border-radius:2px 3px 3px 2px;box-shadow:1px 1px 0 #fff;"></div>
<div style="left:154px;top:393px;width:266px;height:18px;background:#fff;border-top:2px solid #5a6e8e;border-left:2px solid #5a6e8e;border-right:1px solid #c8c8c8;border-bottom:1px solid #c8c8c8;border-radius:2px 3px 3px 2px;box-shadow:1px 1px 0 #fff;"></div>
<div style="left:421px;top:393px;width:266px;height:18px;background:#fff;border-top:2px solid #5a6e8e;border-left:2px solid #5a6e8e;border-right:1px solid #c8c8c8;border-bottom:1px solid #c8c8c8;border-radius:2px 3px 3px 2px;box-shadow:1px 1px 0 #fff;"></div>
<div style="left:688px;top:393px;width:238px;height:18px;background:#fff;border-top:2px solid #5a6e8e;border-left:2px solid #5a6e8e;border-right:1px solid #c8c8c8;border-bottom:1px solid #c8c8c8;border-radius:2px 3px 3px 2px;box-shadow:1px 1px 0 #fff;"></div>
<svg style="position:absolute;left:934px;top:394px" width="16" height="17" shape-rendering="crispEdges"><rect x="0" y="0" width="16" height="17" fill="#fff"/><rect x="1" y="1" width="14" height="13" fill="#f4f4f4"/><rect x="1" y="14" width="14" height="2" fill="#c8c8c8"/><rect x="1" y="16" width="15" height="1" fill="#5a6e8e"/><rect x="15" y="1" width="1" height="16" fill="#5a6e8e"/><rect x="2" y="3" width="4" height="1" fill="#b4b4b4"/><rect x="2" y="5" width="4" height="1" fill="#b4b4b4"/><rect x="2" y="7" width="3" height="1" fill="#b4b4b4"/><rect x="2" y="9" width="3" height="1" fill="#b4b4b4"/><rect x="2" y="11" width="5" height="1" fill="#b4b4b4"/><rect x="7" y="9" width="2" height="1" fill="#b4b4b4"/><rect x="7" y="3" width="4" height="5" fill="#d4d4d4"/><rect x="13" y="2" width="1" height="6" fill="#a4a4a4"/><rect x="11" y="8" width="1" height="1" fill="#a4a4a4"/><rect x="13" y="8" width="1" height="1" fill="#a4a4a4"/><rect x="10" y="9" width="1" height="1" fill="#a4a4a4"/><rect x="12" y="9" width="1" height="1" fill="#a4a4a4"/><rect x="9" y="10" width="1" height="1" fill="#a4a4a4"/><rect x="11" y="10" width="1" height="1" fill="#a4a4a4"/><rect x="13" y="10" width="1" height="1" fill="#a4a4a4"/><rect x="8" y="11" width="1" height="1" fill="#a4a4a4"/><rect x="10" y="11" width="1" height="1" fill="#a4a4a4"/><rect x="12" y="11" width="1" height="1" fill="#a4a4a4"/><rect x="9" y="12" width="1" height="1" fill="#a4a4a4"/><rect x="11" y="12" width="1" height="1" fill="#a4a4a4"/><rect x="13" y="12" width="1" height="1" fill="#a4a4a4"/><rect x="8" y="13" width="1" height="1" fill="#a4a4a4"/><rect x="10" y="13" width="1" height="1" fill="#a4a4a4"/><rect x="12" y="13" width="1" height="1" fill="#a4a4a4"/><rect x="13" y="9" width="1" height="1" fill="#a4a4a4"/><rect x="13" y="12" width="1" height="2" fill="#a4a4a4"/></svg>
<div style="left:15px;top:412px;width:59px;height:18px;background:#fff;border-top:2px solid #5a6e8e;border-left:2px solid #5a6e8e;border-right:1px solid #c8c8c8;border-bottom:1px solid #c8c8c8;border-radius:2px 3px 3px 2px;box-shadow:1px 1px 0 #fff;"></div>
<div style="left:75px;top:412px;width:78px;height:18px;background:#fff;border-top:2px solid #5a6e8e;border-left:2px solid #5a6e8e;border-right:1px solid #c8c8c8;border-bottom:1px solid #c8c8c8;border-radius:2px 3px 3px 2px;box-shadow:1px 1px 0 #fff;"></div>
<div style="left:154px;top:412px;width:266px;height:18px;background:#fff;border-top:2px solid #5a6e8e;border-left:2px solid #5a6e8e;border-right:1px solid #c8c8c8;border-bottom:1px solid #c8c8c8;border-radius:2px 3px 3px 2px;box-shadow:1px 1px 0 #fff;"></div>
<div style="left:421px;top:412px;width:266px;height:18px;background:#fff;border-top:2px solid #5a6e8e;border-left:2px solid #5a6e8e;border-right:1px solid #c8c8c8;border-bottom:1px solid #c8c8c8;border-radius:2px 3px 3px 2px;box-shadow:1px 1px 0 #fff;"></div>
<div style="left:688px;top:412px;width:238px;height:18px;background:#fff;border-top:2px solid #5a6e8e;border-left:2px solid #5a6e8e;border-right:1px solid #c8c8c8;border-bottom:1px solid #c8c8c8;border-radius:2px 3px 3px 2px;box-shadow:1px 1px 0 #fff;"></div>
<svg style="position:absolute;left:934px;top:413px" width="16" height="17" shape-rendering="crispEdges"><rect x="0" y="0" width="16" height="17" fill="#fff"/><rect x="1" y="1" width="14" height="13" fill="#f4f4f4"/><rect x="1" y="14" width="14" height="2" fill="#c8c8c8"/><rect x="1" y="16" width="15" height="1" fill="#5a6e8e"/><rect x="15" y="1" width="1" height="16" fill="#5a6e8e"/><rect x="2" y="3" width="4" height="1" fill="#b4b4b4"/><rect x="2" y="5" width="4" height="1" fill="#b4b4b4"/><rect x="2" y="7" width="3" height="1" fill="#b4b4b4"/><rect x="2" y="9" width="3" height="1" fill="#b4b4b4"/><rect x="2" y="11" width="5" height="1" fill="#b4b4b4"/><rect x="7" y="9" width="2" height="1" fill="#b4b4b4"/><rect x="7" y="3" width="4" height="5" fill="#d4d4d4"/><rect x="13" y="2" width="1" height="6" fill="#a4a4a4"/><rect x="11" y="8" width="1" height="1" fill="#a4a4a4"/><rect x="13" y="8" width="1" height="1" fill="#a4a4a4"/><rect x="10" y="9" width="1" height="1" fill="#a4a4a4"/><rect x="12" y="9" width="1" height="1" fill="#a4a4a4"/><rect x="9" y="10" width="1" height="1" fill="#a4a4a4"/><rect x="11" y="10" width="1" height="1" fill="#a4a4a4"/><rect x="13" y="10" width="1" height="1" fill="#a4a4a4"/><rect x="8" y="11" width="1" height="1" fill="#a4a4a4"/><rect x="10" y="11" width="1" height="1" fill="#a4a4a4"/><rect x="12" y="11" width="1" height="1" fill="#a4a4a4"/><rect x="9" y="12" width="1" height="1" fill="#a4a4a4"/><rect x="11" y="12" width="1" height="1" fill="#a4a4a4"/><rect x="13" y="12" width="1" height="1" fill="#a4a4a4"/><rect x="8" y="13" width="1" height="1" fill="#a4a4a4"/><rect x="10" y="13" width="1" height="1" fill="#a4a4a4"/><rect x="12" y="13" width="1" height="1" fill="#a4a4a4"/><rect x="13" y="9" width="1" height="1" fill="#a4a4a4"/><rect x="13" y="12" width="1" height="2" fill="#a4a4a4"/></svg>
<div style="left:15px;top:431px;width:59px;height:18px;background:#fff;border-top:2px solid #5a6e8e;border-left:2px solid #5a6e8e;border-right:1px solid #c8c8c8;border-bottom:1px solid #c8c8c8;border-radius:2px 3px 3px 2px;box-shadow:1px 1px 0 #fff;"></div>
<div style="left:75px;top:431px;width:78px;height:18px;background:#fff;border-top:2px solid #5a6e8e;border-left:2px solid #5a6e8e;border-right:1px solid #c8c8c8;border-bottom:1px solid #c8c8c8;border-radius:2px 3px 3px 2px;box-shadow:1px 1px 0 #fff;"></div>
<div style="left:154px;top:431px;width:266px;height:18px;background:#fff;border-top:2px solid #5a6e8e;border-left:2px solid #5a6e8e;border-right:1px solid #c8c8c8;border-bottom:1px solid #c8c8c8;border-radius:2px 3px 3px 2px;box-shadow:1px 1px 0 #fff;"></div>
<div style="left:421px;top:431px;width:266px;height:18px;background:#fff;border-top:2px solid #5a6e8e;border-left:2px solid #5a6e8e;border-right:1px solid #c8c8c8;border-bottom:1px solid #c8c8c8;border-radius:2px 3px 3px 2px;box-shadow:1px 1px 0 #fff;"></div>
<div style="left:688px;top:431px;width:238px;height:18px;background:#fff;border-top:2px solid #5a6e8e;border-left:2px solid #5a6e8e;border-right:1px solid #c8c8c8;border-bottom:1px solid #c8c8c8;border-radius:2px 3px 3px 2px;box-shadow:1px 1px 0 #fff;"></div>
<svg style="position:absolute;left:934px;top:432px" width="16" height="17" shape-rendering="crispEdges"><rect x="0" y="0" width="16" height="17" fill="#fff"/><rect x="1" y="1" width="14" height="13" fill="#f4f4f4"/><rect x="1" y="14" width="14" height="2" fill="#c8c8c8"/><rect x="1" y="16" width="15" height="1" fill="#5a6e8e"/><rect x="15" y="1" width="1" height="16" fill="#5a6e8e"/><rect x="2" y="3" width="4" height="1" fill="#b4b4b4"/><rect x="2" y="5" width="4" height="1" fill="#b4b4b4"/><rect x="2" y="7" width="3" height="1" fill="#b4b4b4"/><rect x="2" y="9" width="3" height="1" fill="#b4b4b4"/><rect x="2" y="11" width="5" height="1" fill="#b4b4b4"/><rect x="7" y="9" width="2" height="1" fill="#b4b4b4"/><rect x="7" y="3" width="4" height="5" fill="#d4d4d4"/><rect x="13" y="2" width="1" height="6" fill="#a4a4a4"/><rect x="11" y="8" width="1" height="1" fill="#a4a4a4"/><rect x="13" y="8" width="1" height="1" fill="#a4a4a4"/><rect x="10" y="9" width="1" height="1" fill="#a4a4a4"/><rect x="12" y="9" width="1" height="1" fill="#a4a4a4"/><rect x="9" y="10" width="1" height="1" fill="#a4a4a4"/><rect x="11" y="10" width="1" height="1" fill="#a4a4a4"/><rect x="13" y="10" width="1" height="1" fill="#a4a4a4"/><rect x="8" y="11" width="1" height="1" fill="#a4a4a4"/><rect x="10" y="11" width="1" height="1" fill="#a4a4a4"/><rect x="12" y="11" width="1" height="1" fill="#a4a4a4"/><rect x="9" y="12" width="1" height="1" fill="#a4a4a4"/><rect x="11" y="12" width="1" height="1" fill="#a4a4a4"/><rect x="13" y="12" width="1" height="1" fill="#a4a4a4"/><rect x="8" y="13" width="1" height="1" fill="#a4a4a4"/><rect x="10" y="13" width="1" height="1" fill="#a4a4a4"/><rect x="12" y="13" width="1" height="1" fill="#a4a4a4"/><rect x="13" y="9" width="1" height="1" fill="#a4a4a4"/><rect x="13" y="12" width="1" height="2" fill="#a4a4a4"/></svg>
<div style="left:15px;top:449px;width:59px;height:18px;background:#fff;border-top:2px solid #5a6e8e;border-left:2px solid #5a6e8e;border-right:1px solid #c8c8c8;border-bottom:1px solid #c8c8c8;border-radius:2px 3px 3px 2px;box-shadow:1px 1px 0 #fff;"></div>
<div style="left:75px;top:449px;width:78px;height:18px;background:#fff;border-top:2px solid #5a6e8e;border-left:2px solid #5a6e8e;border-right:1px solid #c8c8c8;border-bottom:1px solid #c8c8c8;border-radius:2px 3px 3px 2px;box-shadow:1px 1px 0 #fff;"></div>
<div style="left:154px;top:449px;width:266px;height:18px;background:#fff;border-top:2px solid #5a6e8e;border-left:2px solid #5a6e8e;border-right:1px solid #c8c8c8;border-bottom:1px solid #c8c8c8;border-radius:2px 3px 3px 2px;box-shadow:1px 1px 0 #fff;"></div>
<div style="left:421px;top:449px;width:266px;height:18px;background:#fff;border-top:2px solid #5a6e8e;border-left:2px solid #5a6e8e;border-right:1px solid #c8c8c8;border-bottom:1px solid #c8c8c8;border-radius:2px 3px 3px 2px;box-shadow:1px 1px 0 #fff;"></div>
<div style="left:688px;top:449px;width:238px;height:18px;background:#fff;border-top:2px solid #5a6e8e;border-left:2px solid #5a6e8e;border-right:1px solid #c8c8c8;border-bottom:1px solid #c8c8c8;border-radius:2px 3px 3px 2px;box-shadow:1px 1px 0 #fff;"></div>
<svg style="position:absolute;left:934px;top:450px" width="16" height="17" shape-rendering="crispEdges"><rect x="0" y="0" width="16" height="17" fill="#fff"/><rect x="1" y="1" width="14" height="13" fill="#f4f4f4"/><rect x="1" y="14" width="14" height="2" fill="#c8c8c8"/><rect x="1" y="16" width="15" height="1" fill="#5a6e8e"/><rect x="15" y="1" width="1" height="16" fill="#5a6e8e"/><rect x="2" y="3" width="4" height="1" fill="#b4b4b4"/><rect x="2" y="5" width="4" height="1" fill="#b4b4b4"/><rect x="2" y="7" width="3" height="1" fill="#b4b4b4"/><rect x="2" y="9" width="3" height="1" fill="#b4b4b4"/><rect x="2" y="11" width="5" height="1" fill="#b4b4b4"/><rect x="7" y="9" width="2" height="1" fill="#b4b4b4"/><rect x="7" y="3" width="4" height="5" fill="#d4d4d4"/><rect x="13" y="2" width="1" height="6" fill="#a4a4a4"/><rect x="11" y="8" width="1" height="1" fill="#a4a4a4"/><rect x="13" y="8" width="1" height="1" fill="#a4a4a4"/><rect x="10" y="9" width="1" height="1" fill="#a4a4a4"/><rect x="12" y="9" width="1" height="1" fill="#a4a4a4"/><rect x="9" y="10" width="1" height="1" fill="#a4a4a4"/><rect x="11" y="10" width="1" height="1" fill="#a4a4a4"/><rect x="13" y="10" width="1" height="1" fill="#a4a4a4"/><rect x="8" y="11" width="1" height="1" fill="#a4a4a4"/><rect x="10" y="11" width="1" height="1" fill="#a4a4a4"/><rect x="12" y="11" width="1" height="1" fill="#a4a4a4"/><rect x="9" y="12" width="1" height="1" fill="#a4a4a4"/><rect x="11" y="12" width="1" height="1" fill="#a4a4a4"/><rect x="13" y="12" width="1" height="1" fill="#a4a4a4"/><rect x="8" y="13" width="1" height="1" fill="#a4a4a4"/><rect x="10" y="13" width="1" height="1" fill="#a4a4a4"/><rect x="12" y="13" width="1" height="1" fill="#a4a4a4"/><rect x="13" y="9" width="1" height="1" fill="#a4a4a4"/><rect x="13" y="12" width="1" height="2" fill="#a4a4a4"/></svg>
<div style="left:15px;top:468px;width:59px;height:18px;background:#fff;border-top:2px solid #5a6e8e;border-left:2px solid #5a6e8e;border-right:1px solid #c8c8c8;border-bottom:1px solid #c8c8c8;border-radius:2px 3px 3px 2px;box-shadow:1px 1px 0 #fff;"></div>
<div style="left:75px;top:468px;width:78px;height:18px;background:#fff;border-top:2px solid #5a6e8e;border-left:2px solid #5a6e8e;border-right:1px solid #c8c8c8;border-bottom:1px solid #c8c8c8;border-radius:2px 3px 3px 2px;box-shadow:1px 1px 0 #fff;"></div>
<div style="left:154px;top:468px;width:266px;height:18px;background:#fff;border-top:2px solid #5a6e8e;border-left:2px solid #5a6e8e;border-right:1px solid #c8c8c8;border-bottom:1px solid #c8c8c8;border-radius:2px 3px 3px 2px;box-shadow:1px 1px 0 #fff;"></div>
<div style="left:421px;top:468px;width:266px;height:18px;background:#fff;border-top:2px solid #5a6e8e;border-left:2px solid #5a6e8e;border-right:1px solid #c8c8c8;border-bottom:1px solid #c8c8c8;border-radius:2px 3px 3px 2px;box-shadow:1px 1px 0 #fff;"></div>
<div style="left:688px;top:468px;width:238px;height:18px;background:#fff;border-top:2px solid #5a6e8e;border-left:2px solid #5a6e8e;border-right:1px solid #c8c8c8;border-bottom:1px solid #c8c8c8;border-radius:2px 3px 3px 2px;box-shadow:1px 1px 0 #fff;"></div>
<svg style="position:absolute;left:934px;top:469px" width="16" height="17" shape-rendering="crispEdges"><rect x="0" y="0" width="16" height="17" fill="#fff"/><rect x="1" y="1" width="14" height="13" fill="#f4f4f4"/><rect x="1" y="14" width="14" height="2" fill="#c8c8c8"/><rect x="1" y="16" width="15" height="1" fill="#5a6e8e"/><rect x="15" y="1" width="1" height="16" fill="#5a6e8e"/><rect x="2" y="3" width="4" height="1" fill="#b4b4b4"/><rect x="2" y="5" width="4" height="1" fill="#b4b4b4"/><rect x="2" y="7" width="3" height="1" fill="#b4b4b4"/><rect x="2" y="9" width="3" height="1" fill="#b4b4b4"/><rect x="2" y="11" width="5" height="1" fill="#b4b4b4"/><rect x="7" y="9" width="2" height="1" fill="#b4b4b4"/><rect x="7" y="3" width="4" height="5" fill="#d4d4d4"/><rect x="13" y="2" width="1" height="6" fill="#a4a4a4"/><rect x="11" y="8" width="1" height="1" fill="#a4a4a4"/><rect x="13" y="8" width="1" height="1" fill="#a4a4a4"/><rect x="10" y="9" width="1" height="1" fill="#a4a4a4"/><rect x="12" y="9" width="1" height="1" fill="#a4a4a4"/><rect x="9" y="10" width="1" height="1" fill="#a4a4a4"/><rect x="11" y="10" width="1" height="1" fill="#a4a4a4"/><rect x="13" y="10" width="1" height="1" fill="#a4a4a4"/><rect x="8" y="11" width="1" height="1" fill="#a4a4a4"/><rect x="10" y="11" width="1" height="1" fill="#a4a4a4"/><rect x="12" y="11" width="1" height="1" fill="#a4a4a4"/><rect x="9" y="12" width="1" height="1" fill="#a4a4a4"/><rect x="11" y="12" width="1" height="1" fill="#a4a4a4"/><rect x="13" y="12" width="1" height="1" fill="#a4a4a4"/><rect x="8" y="13" width="1" height="1" fill="#a4a4a4"/><rect x="10" y="13" width="1" height="1" fill="#a4a4a4"/><rect x="12" y="13" width="1" height="1" fill="#a4a4a4"/><rect x="13" y="9" width="1" height="1" fill="#a4a4a4"/><rect x="13" y="12" width="1" height="2" fill="#a4a4a4"/></svg>
<div style="left:15px;top:487px;width:59px;height:18px;background:#fff;border-top:2px solid #5a6e8e;border-left:2px solid #5a6e8e;border-right:1px solid #c8c8c8;border-bottom:1px solid #c8c8c8;border-radius:2px 3px 3px 2px;box-shadow:1px 1px 0 #fff;"></div>
<div style="left:75px;top:487px;width:78px;height:18px;background:#fff;border-top:2px solid #5a6e8e;border-left:2px solid #5a6e8e;border-right:1px solid #c8c8c8;border-bottom:1px solid #c8c8c8;border-radius:2px 3px 3px 2px;box-shadow:1px 1px 0 #fff;"></div>
<div style="left:154px;top:487px;width:266px;height:18px;background:#fff;border-top:2px solid #5a6e8e;border-left:2px solid #5a6e8e;border-right:1px solid #c8c8c8;border-bottom:1px solid #c8c8c8;border-radius:2px 3px 3px 2px;box-shadow:1px 1px 0 #fff;"></div>
<div style="left:421px;top:487px;width:266px;height:18px;background:#fff;border-top:2px solid #5a6e8e;border-left:2px solid #5a6e8e;border-right:1px solid #c8c8c8;border-bottom:1px solid #c8c8c8;border-radius:2px 3px 3px 2px;box-shadow:1px 1px 0 #fff;"></div>
<div style="left:688px;top:487px;width:238px;height:18px;background:#fff;border-top:2px solid #5a6e8e;border-left:2px solid #5a6e8e;border-right:1px solid #c8c8c8;border-bottom:1px solid #c8c8c8;border-radius:2px 3px 3px 2px;box-shadow:1px 1px 0 #fff;"></div>
<svg style="position:absolute;left:934px;top:488px" width="16" height="17" shape-rendering="crispEdges"><rect x="0" y="0" width="16" height="17" fill="#fff"/><rect x="1" y="1" width="14" height="13" fill="#f4f4f4"/><rect x="1" y="14" width="14" height="2" fill="#c8c8c8"/><rect x="1" y="16" width="15" height="1" fill="#5a6e8e"/><rect x="15" y="1" width="1" height="16" fill="#5a6e8e"/><rect x="2" y="3" width="4" height="1" fill="#b4b4b4"/><rect x="2" y="5" width="4" height="1" fill="#b4b4b4"/><rect x="2" y="7" width="3" height="1" fill="#b4b4b4"/><rect x="2" y="9" width="3" height="1" fill="#b4b4b4"/><rect x="2" y="11" width="5" height="1" fill="#b4b4b4"/><rect x="7" y="9" width="2" height="1" fill="#b4b4b4"/><rect x="7" y="3" width="4" height="5" fill="#d4d4d4"/><rect x="13" y="2" width="1" height="6" fill="#a4a4a4"/><rect x="11" y="8" width="1" height="1" fill="#a4a4a4"/><rect x="13" y="8" width="1" height="1" fill="#a4a4a4"/><rect x="10" y="9" width="1" height="1" fill="#a4a4a4"/><rect x="12" y="9" width="1" height="1" fill="#a4a4a4"/><rect x="9" y="10" width="1" height="1" fill="#a4a4a4"/><rect x="11" y="10" width="1" height="1" fill="#a4a4a4"/><rect x="13" y="10" width="1" height="1" fill="#a4a4a4"/><rect x="8" y="11" width="1" height="1" fill="#a4a4a4"/><rect x="10" y="11" width="1" height="1" fill="#a4a4a4"/><rect x="12" y="11" width="1" height="1" fill="#a4a4a4"/><rect x="9" y="12" width="1" height="1" fill="#a4a4a4"/><rect x="11" y="12" width="1" height="1" fill="#a4a4a4"/><rect x="13" y="12" width="1" height="1" fill="#a4a4a4"/><rect x="8" y="13" width="1" height="1" fill="#a4a4a4"/><rect x="10" y="13" width="1" height="1" fill="#a4a4a4"/><rect x="12" y="13" width="1" height="1" fill="#a4a4a4"/><rect x="13" y="9" width="1" height="1" fill="#a4a4a4"/><rect x="13" y="12" width="1" height="2" fill="#a4a4a4"/></svg>
<div style="left:15px;top:506px;width:59px;height:18px;background:#fff;border-top:2px solid #5a6e8e;border-left:2px solid #5a6e8e;border-right:1px solid #c8c8c8;border-bottom:1px solid #c8c8c8;border-radius:2px 3px 3px 2px;box-shadow:1px 1px 0 #fff;"></div>
<div style="left:75px;top:506px;width:78px;height:18px;background:#fff;border-top:2px solid #5a6e8e;border-left:2px solid #5a6e8e;border-right:1px solid #c8c8c8;border-bottom:1px solid #c8c8c8;border-radius:2px 3px 3px 2px;box-shadow:1px 1px 0 #fff;"></div>
<div style="left:154px;top:506px;width:266px;height:18px;background:#fff;border-top:2px solid #5a6e8e;border-left:2px solid #5a6e8e;border-right:1px solid #c8c8c8;border-bottom:1px solid #c8c8c8;border-radius:2px 3px 3px 2px;box-shadow:1px 1px 0 #fff;"></div>
<div style="left:421px;top:506px;width:266px;height:18px;background:#fff;border-top:2px solid #5a6e8e;border-left:2px solid #5a6e8e;border-right:1px solid #c8c8c8;border-bottom:1px solid #c8c8c8;border-radius:2px 3px 3px 2px;box-shadow:1px 1px 0 #fff;"></div>
<div style="left:688px;top:506px;width:238px;height:18px;background:#fff;border-top:2px solid #5a6e8e;border-left:2px solid #5a6e8e;border-right:1px solid #c8c8c8;border-bottom:1px solid #c8c8c8;border-radius:2px 3px 3px 2px;box-shadow:1px 1px 0 #fff;"></div>
<svg style="position:absolute;left:934px;top:507px" width="16" height="17" shape-rendering="crispEdges"><rect x="0" y="0" width="16" height="17" fill="#fff"/><rect x="1" y="1" width="14" height="13" fill="#f4f4f4"/><rect x="1" y="14" width="14" height="2" fill="#c8c8c8"/><rect x="1" y="16" width="15" height="1" fill="#5a6e8e"/><rect x="15" y="1" width="1" height="16" fill="#5a6e8e"/><rect x="2" y="3" width="4" height="1" fill="#b4b4b4"/><rect x="2" y="5" width="4" height="1" fill="#b4b4b4"/><rect x="2" y="7" width="3" height="1" fill="#b4b4b4"/><rect x="2" y="9" width="3" height="1" fill="#b4b4b4"/><rect x="2" y="11" width="5" height="1" fill="#b4b4b4"/><rect x="7" y="9" width="2" height="1" fill="#b4b4b4"/><rect x="7" y="3" width="4" height="5" fill="#d4d4d4"/><rect x="13" y="2" width="1" height="6" fill="#a4a4a4"/><rect x="11" y="8" width="1" height="1" fill="#a4a4a4"/><rect x="13" y="8" width="1" height="1" fill="#a4a4a4"/><rect x="10" y="9" width="1" height="1" fill="#a4a4a4"/><rect x="12" y="9" width="1" height="1" fill="#a4a4a4"/><rect x="9" y="10" width="1" height="1" fill="#a4a4a4"/><rect x="11" y="10" width="1" height="1" fill="#a4a4a4"/><rect x="13" y="10" width="1" height="1" fill="#a4a4a4"/><rect x="8" y="11" width="1" height="1" fill="#a4a4a4"/><rect x="10" y="11" width="1" height="1" fill="#a4a4a4"/><rect x="12" y="11" width="1" height="1" fill="#a4a4a4"/><rect x="9" y="12" width="1" height="1" fill="#a4a4a4"/><rect x="11" y="12" width="1" height="1" fill="#a4a4a4"/><rect x="13" y="12" width="1" height="1" fill="#a4a4a4"/><rect x="8" y="13" width="1" height="1" fill="#a4a4a4"/><rect x="10" y="13" width="1" height="1" fill="#a4a4a4"/><rect x="12" y="13" width="1" height="1" fill="#a4a4a4"/><rect x="13" y="9" width="1" height="1" fill="#a4a4a4"/><rect x="13" y="12" width="1" height="2" fill="#a4a4a4"/></svg>
<div style="left:15px;top:524px;width:59px;height:18px;background:#fff;border-top:2px solid #5a6e8e;border-left:2px solid #5a6e8e;border-right:1px solid #c8c8c8;border-bottom:1px solid #c8c8c8;border-radius:2px 3px 3px 2px;box-shadow:1px 1px 0 #fff;"></div>
<div style="left:75px;top:524px;width:78px;height:18px;background:#fff;border-top:2px solid #5a6e8e;border-left:2px solid #5a6e8e;border-right:1px solid #c8c8c8;border-bottom:1px solid #c8c8c8;border-radius:2px 3px 3px 2px;box-shadow:1px 1px 0 #fff;"></div>
<div style="left:154px;top:524px;width:266px;height:18px;background:#fff;border-top:2px solid #5a6e8e;border-left:2px solid #5a6e8e;border-right:1px solid #c8c8c8;border-bottom:1px solid #c8c8c8;border-radius:2px 3px 3px 2px;box-shadow:1px 1px 0 #fff;"></div>
<div style="left:421px;top:524px;width:266px;height:18px;background:#fff;border-top:2px solid #5a6e8e;border-left:2px solid #5a6e8e;border-right:1px solid #c8c8c8;border-bottom:1px solid #c8c8c8;border-radius:2px 3px 3px 2px;box-shadow:1px 1px 0 #fff;"></div>
<div style="left:688px;top:524px;width:238px;height:18px;background:#fff;border-top:2px solid #5a6e8e;border-left:2px solid #5a6e8e;border-right:1px solid #c8c8c8;border-bottom:1px solid #c8c8c8;border-radius:2px 3px 3px 2px;box-shadow:1px 1px 0 #fff;"></div>
<svg style="position:absolute;left:934px;top:525px" width="16" height="17" shape-rendering="crispEdges"><rect x="0" y="0" width="16" height="17" fill="#fff"/><rect x="1" y="1" width="14" height="13" fill="#f4f4f4"/><rect x="1" y="14" width="14" height="2" fill="#c8c8c8"/><rect x="1" y="16" width="15" height="1" fill="#5a6e8e"/><rect x="15" y="1" width="1" height="16" fill="#5a6e8e"/><rect x="2" y="3" width="4" height="1" fill="#b4b4b4"/><rect x="2" y="5" width="4" height="1" fill="#b4b4b4"/><rect x="2" y="7" width="3" height="1" fill="#b4b4b4"/><rect x="2" y="9" width="3" height="1" fill="#b4b4b4"/><rect x="2" y="11" width="5" height="1" fill="#b4b4b4"/><rect x="7" y="9" width="2" height="1" fill="#b4b4b4"/><rect x="7" y="3" width="4" height="5" fill="#d4d4d4"/><rect x="13" y="2" width="1" height="6" fill="#a4a4a4"/><rect x="11" y="8" width="1" height="1" fill="#a4a4a4"/><rect x="13" y="8" width="1" height="1" fill="#a4a4a4"/><rect x="10" y="9" width="1" height="1" fill="#a4a4a4"/><rect x="12" y="9" width="1" height="1" fill="#a4a4a4"/><rect x="9" y="10" width="1" height="1" fill="#a4a4a4"/><rect x="11" y="10" width="1" height="1" fill="#a4a4a4"/><rect x="13" y="10" width="1" height="1" fill="#a4a4a4"/><rect x="8" y="11" width="1" height="1" fill="#a4a4a4"/><rect x="10" y="11" width="1" height="1" fill="#a4a4a4"/><rect x="12" y="11" width="1" height="1" fill="#a4a4a4"/><rect x="9" y="12" width="1" height="1" fill="#a4a4a4"/><rect x="11" y="12" width="1" height="1" fill="#a4a4a4"/><rect x="13" y="12" width="1" height="1" fill="#a4a4a4"/><rect x="8" y="13" width="1" height="1" fill="#a4a4a4"/><rect x="10" y="13" width="1" height="1" fill="#a4a4a4"/><rect x="12" y="13" width="1" height="1" fill="#a4a4a4"/><rect x="13" y="9" width="1" height="1" fill="#a4a4a4"/><rect x="13" y="12" width="1" height="2" fill="#a4a4a4"/></svg>
<div style="left:15px;top:543px;width:59px;height:18px;background:#fff;border-top:2px solid #5a6e8e;border-left:2px solid #5a6e8e;border-right:1px solid #c8c8c8;border-bottom:1px solid #c8c8c8;border-radius:2px 3px 3px 2px;box-shadow:1px 1px 0 #fff;"></div>
<div style="left:75px;top:543px;width:78px;height:18px;background:#fff;border-top:2px solid #5a6e8e;border-left:2px solid #5a6e8e;border-right:1px solid #c8c8c8;border-bottom:1px solid #c8c8c8;border-radius:2px 3px 3px 2px;box-shadow:1px 1px 0 #fff;"></div>
<div style="left:154px;top:543px;width:266px;height:18px;background:#fff;border-top:2px solid #5a6e8e;border-left:2px solid #5a6e8e;border-right:1px solid #c8c8c8;border-bottom:1px solid #c8c8c8;border-radius:2px 3px 3px 2px;box-shadow:1px 1px 0 #fff;"></div>
<div style="left:421px;top:543px;width:266px;height:18px;background:#fff;border-top:2px solid #5a6e8e;border-left:2px solid #5a6e8e;border-right:1px solid #c8c8c8;border-bottom:1px solid #c8c8c8;border-radius:2px 3px 3px 2px;box-shadow:1px 1px 0 #fff;"></div>
<div style="left:688px;top:543px;width:238px;height:18px;background:#fff;border-top:2px solid #5a6e8e;border-left:2px solid #5a6e8e;border-right:1px solid #c8c8c8;border-bottom:1px solid #c8c8c8;border-radius:2px 3px 3px 2px;box-shadow:1px 1px 0 #fff;"></div>
<svg style="position:absolute;left:934px;top:544px" width="16" height="17" shape-rendering="crispEdges"><rect x="0" y="0" width="16" height="17" fill="#fff"/><rect x="1" y="1" width="14" height="13" fill="#f4f4f4"/><rect x="1" y="14" width="14" height="2" fill="#c8c8c8"/><rect x="1" y="16" width="15" height="1" fill="#5a6e8e"/><rect x="15" y="1" width="1" height="16" fill="#5a6e8e"/><rect x="2" y="3" width="4" height="1" fill="#b4b4b4"/><rect x="2" y="5" width="4" height="1" fill="#b4b4b4"/><rect x="2" y="7" width="3" height="1" fill="#b4b4b4"/><rect x="2" y="9" width="3" height="1" fill="#b4b4b4"/><rect x="2" y="11" width="5" height="1" fill="#b4b4b4"/><rect x="7" y="9" width="2" height="1" fill="#b4b4b4"/><rect x="7" y="3" width="4" height="5" fill="#d4d4d4"/><rect x="13" y="2" width="1" height="6" fill="#a4a4a4"/><rect x="11" y="8" width="1" height="1" fill="#a4a4a4"/><rect x="13" y="8" width="1" height="1" fill="#a4a4a4"/><rect x="10" y="9" width="1" height="1" fill="#a4a4a4"/><rect x="12" y="9" width="1" height="1" fill="#a4a4a4"/><rect x="9" y="10" width="1" height="1" fill="#a4a4a4"/><rect x="11" y="10" width="1" height="1" fill="#a4a4a4"/><rect x="13" y="10" width="1" height="1" fill="#a4a4a4"/><rect x="8" y="11" width="1" height="1" fill="#a4a4a4"/><rect x="10" y="11" width="1" height="1" fill="#a4a4a4"/><rect x="12" y="11" width="1" height="1" fill="#a4a4a4"/><rect x="9" y="12" width="1" height="1" fill="#a4a4a4"/><rect x="11" y="12" width="1" height="1" fill="#a4a4a4"/><rect x="13" y="12" width="1" height="1" fill="#a4a4a4"/><rect x="8" y="13" width="1" height="1" fill="#a4a4a4"/><rect x="10" y="13" width="1" height="1" fill="#a4a4a4"/><rect x="12" y="13" width="1" height="1" fill="#a4a4a4"/><rect x="13" y="9" width="1" height="1" fill="#a4a4a4"/><rect x="13" y="12" width="1" height="2" fill="#a4a4a4"/></svg>
<div style="left:957px;top:240px;width:1px;height:305px;background:#a0a0a0;"></div>
<div style="left:958px;top:240px;width:1px;height:305px;background:#fff;"></div>
<div style="left:959px;top:240px;width:12px;height:305px;background:#cacaca;"></div>
<div style="left:971px;top:240px;width:1px;height:305px;background:#a8a8a8;"></div>
<svg style="position:absolute;left:960px;top:340px" width="10" height="90" shape-rendering="crispEdges"><rect x="7" y="3" width="2" height="1" fill="#fff"/><rect x="7" y="4" width="1" height="1" fill="#fff"/><rect x="8" y="4" width="1" height="1" fill="#5a6e8e"/><rect x="7" y="11" width="2" height="1" fill="#fff"/><rect x="7" y="12" width="1" height="1" fill="#fff"/><rect x="8" y="12" width="1" height="1" fill="#5a6e8e"/><rect x="7" y="19" width="2" height="1" fill="#fff"/><rect x="7" y="20" width="1" height="1" fill="#fff"/><rect x="8" y="20" width="1" height="1" fill="#5a6e8e"/><rect x="7" y="27" width="2" height="1" fill="#fff"/><rect x="7" y="28" width="1" height="1" fill="#fff"/><rect x="8" y="28" width="1" height="1" fill="#5a6e8e"/><rect x="7" y="35" width="2" height="1" fill="#fff"/><rect x="7" y="36" width="1" height="1" fill="#fff"/><rect x="8" y="36" width="1" height="1" fill="#5a6e8e"/><rect x="7" y="43" width="2" height="1" fill="#fff"/><rect x="7" y="44" width="1" height="1" fill="#fff"/><rect x="8" y="44" width="1" height="1" fill="#5a6e8e"/><rect x="7" y="51" width="2" height="1" fill="#fff"/><rect x="7" y="52" width="1" height="1" fill="#fff"/><rect x="8" y="52" width="1" height="1" fill="#5a6e8e"/><rect x="7" y="59" width="2" height="1" fill="#fff"/><rect x="7" y="60" width="1" height="1" fill="#fff"/><rect x="8" y="60" width="1" height="1" fill="#5a6e8e"/><rect x="7" y="67" width="2" height="1" fill="#fff"/><rect x="7" y="68" width="1" height="1" fill="#fff"/><rect x="8" y="68" width="1" height="1" fill="#5a6e8e"/><rect x="7" y="75" width="2" height="1" fill="#fff"/><rect x="7" y="76" width="1" height="1" fill="#fff"/><rect x="8" y="76" width="1" height="1" fill="#5a6e8e"/><rect x="7" y="83" width="2" height="1" fill="#fff"/><rect x="7" y="84" width="1" height="1" fill="#fff"/><rect x="8" y="84" width="1" height="1" fill="#5a6e8e"/><rect x="2" y="7" width="2" height="1" fill="#fff"/><rect x="2" y="8" width="1" height="1" fill="#fff"/><rect x="3" y="8" width="1" height="1" fill="#5a6e8e"/><rect x="2" y="15" width="2" height="1" fill="#fff"/><rect x="2" y="16" width="1" height="1" fill="#fff"/><rect x="3" y="16" width="1" height="1" fill="#5a6e8e"/><rect x="2" y="23" width="2" height="1" fill="#fff"/><rect x="2" y="24" width="1" height="1" fill="#fff"/><rect x="3" y="24" width="1" height="1" fill="#5a6e8e"/><rect x="2" y="31" width="2" height="1" fill="#fff"/><rect x="2" y="32" width="1" height="1" fill="#fff"/><rect x="3" y="32" width="1" height="1" fill="#5a6e8e"/><rect x="2" y="39" width="2" height="1" fill="#fff"/><rect x="2" y="40" width="1" height="1" fill="#fff"/><rect x="3" y="40" width="1" height="1" fill="#5a6e8e"/><rect x="2" y="47" width="2" height="1" fill="#fff"/><rect x="2" y="48" width="1" height="1" fill="#fff"/><rect x="3" y="48" width="1" height="1" fill="#5a6e8e"/><rect x="2" y="55" width="2" height="1" fill="#fff"/><rect x="2" y="56" width="1" height="1" fill="#fff"/><rect x="3" y="56" width="1" height="1" fill="#5a6e8e"/><rect x="2" y="63" width="2" height="1" fill="#fff"/><rect x="2" y="64" width="1" height="1" fill="#fff"/><rect x="3" y="64" width="1" height="1" fill="#5a6e8e"/><rect x="2" y="71" width="2" height="1" fill="#fff"/><rect x="2" y="72" width="1" height="1" fill="#fff"/><rect x="3" y="72" width="1" height="1" fill="#5a6e8e"/><rect x="2" y="79" width="2" height="1" fill="#fff"/><rect x="2" y="80" width="1" height="1" fill="#fff"/><rect x="3" y="80" width="1" height="1" fill="#5a6e8e"/></svg>
<svg style="position:absolute;left:957px;top:225px" width="15" height="16"><path d="M0.5,14.5 V7.5 A7,7 0 0 1 14.5,7.5 V14.5" fill="#d4d4d4" stroke="#7a8eae" stroke-width="1"/><path d="M1.5,14 V7.5 A6,6 0 0 1 13.5,7.5" fill="none" stroke="#fff" stroke-width="1"/><rect x="1" y="14" width="13" height="1" fill="#5a6e8e"/><rect x="1" y="15" width="13" height="1" fill="#fff"/><polygon points="3.5,10 11.5,10 7.5,6" fill="#5a6e8e"/></svg>
<svg style="position:absolute;left:957px;top:545px" width="15" height="17"><path d="M0.5,1 V8.5 A7,7 0 0 0 14.5,8.5 V1" fill="#d4d4d4" stroke="#7a8eae" stroke-width="1"/><path d="M1.5,2 V8.5 A6,6 0 0 0 7.5,14.5" fill="none" stroke="#fff" stroke-width="1"/><rect x="1" y="0" width="13" height="1" fill="#5a6e8e"/><rect x="1" y="1" width="13" height="1" fill="#fff"/><polygon points="4,6 11,6 7.5,10" fill="#5a6e8e"/></svg>
</body></html>
